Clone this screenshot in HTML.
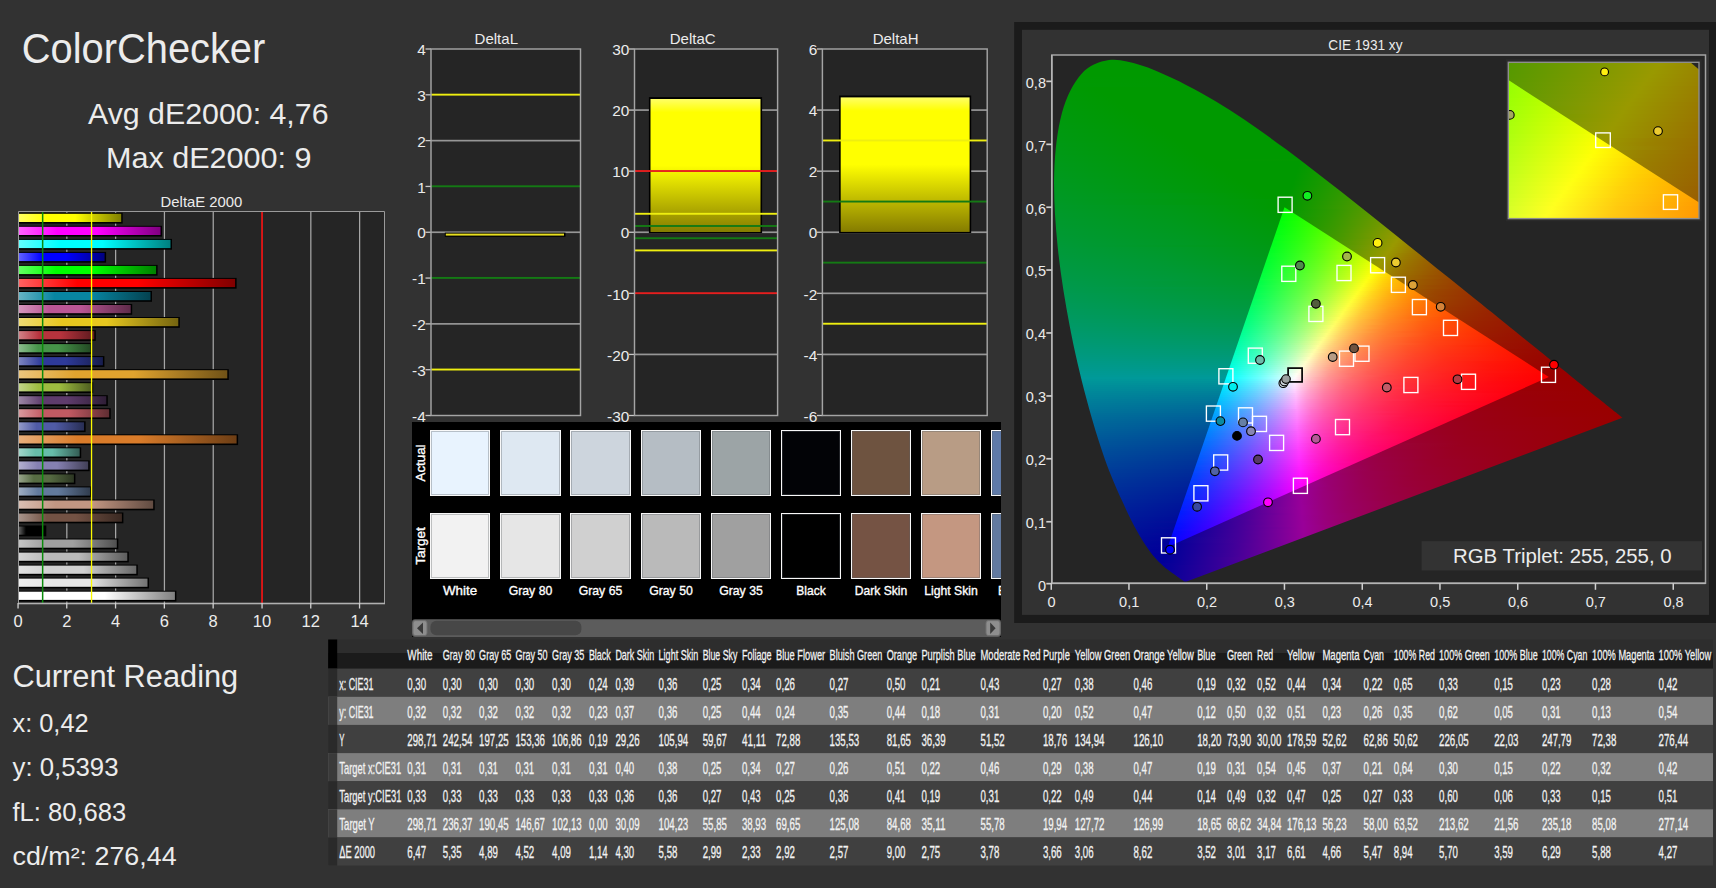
<!DOCTYPE html>
<html lang="en"><head><meta charset="utf-8"><title>ColorChecker</title>
<style>html,body{margin:0;padding:0;background:#323232;overflow:hidden}svg{display:block}text{font-family:"Liberation Sans", sans-serif;white-space:pre}</style></head><body>
<svg width="1716" height="888" viewBox="0 0 1716 888">
<rect width="1716" height="888" fill="#323232"/>
<text x="21.8" y="63.2" font-size="42.5" fill="#ececec" textLength="243.5" lengthAdjust="spacingAndGlyphs">ColorChecker</text>
<text x="88.0" y="123.8" font-size="30" fill="#ececec" textLength="240.5" lengthAdjust="spacingAndGlyphs">Avg dE2000: 4,76</text>
<text x="106.0" y="168.0" font-size="30" fill="#ececec" textLength="205.5" lengthAdjust="spacingAndGlyphs">Max dE2000: 9</text>
<text x="160.6" y="206.7" font-size="15" fill="#ececec" textLength="81.8" lengthAdjust="spacingAndGlyphs">DeltaE 2000</text>
<rect x="18" y="212" width="366" height="391" fill="#252525"/>
<rect x="66.2" y="212" width="1.25" height="391" fill="#a6a6a6"/>
<rect x="115.0" y="212" width="1.25" height="391" fill="#a6a6a6"/>
<rect x="163.8" y="212" width="1.25" height="391" fill="#a6a6a6"/>
<rect x="212.6" y="212" width="1.25" height="391" fill="#a6a6a6"/>
<rect x="310.2" y="212" width="1.25" height="391" fill="#a6a6a6"/>
<rect x="359.0" y="212" width="1.25" height="391" fill="#a6a6a6"/>
<defs>
<linearGradient id="b0"><stop offset="0" stop-color="#ffffff"/><stop offset="0.270" stop-color="#ffffff"/><stop offset=".55" stop-color="#ffffff"/><stop offset="1" stop-color="#808080"/></linearGradient>
<linearGradient id="b1"><stop offset="0" stop-color="#f0f0f0"/><stop offset="0.270" stop-color="#e6e6e6"/><stop offset=".55" stop-color="#e6e6e6"/><stop offset="1" stop-color="#737373"/></linearGradient>
<linearGradient id="b2"><stop offset="0" stop-color="#e2e2e2"/><stop offset="0.270" stop-color="#d0d0d0"/><stop offset=".55" stop-color="#d0d0d0"/><stop offset="1" stop-color="#686868"/></linearGradient>
<linearGradient id="b3"><stop offset="0" stop-color="#d4d4d4"/><stop offset="0.270" stop-color="#bababa"/><stop offset=".55" stop-color="#bababa"/><stop offset="1" stop-color="#5d5d5d"/></linearGradient>
<linearGradient id="b4"><stop offset="0" stop-color="#c4c4c4"/><stop offset="0.270" stop-color="#a0a0a0"/><stop offset=".55" stop-color="#a0a0a0"/><stop offset="1" stop-color="#505050"/></linearGradient>
<linearGradient id="b5"><stop offset="0" stop-color="#616161"/><stop offset="0.270" stop-color="#000000"/><stop offset=".55" stop-color="#000000"/><stop offset="1" stop-color="#000000"/></linearGradient>
<linearGradient id="b6"><stop offset="0" stop-color="#a8948b"/><stop offset="0.270" stop-color="#735244"/><stop offset=".55" stop-color="#735244"/><stop offset="1" stop-color="#3a2922"/></linearGradient>
<linearGradient id="b7"><stop offset="0" stop-color="#d9beb2"/><stop offset="0.270" stop-color="#c29682"/><stop offset=".55" stop-color="#c29682"/><stop offset="1" stop-color="#614b41"/></linearGradient>
<linearGradient id="b8"><stop offset="0" stop-color="#9eadc2"/><stop offset="0.270" stop-color="#627a9d"/><stop offset=".55" stop-color="#627a9d"/><stop offset="1" stop-color="#313d4e"/></linearGradient>
<linearGradient id="b9"><stop offset="0" stop-color="#97a48a"/><stop offset="0.270" stop-color="#576c43"/><stop offset=".55" stop-color="#576c43"/><stop offset="1" stop-color="#2c3622"/></linearGradient>
<linearGradient id="b10"><stop offset="0" stop-color="#b3b0cf"/><stop offset="0.270" stop-color="#8580b1"/><stop offset=".55" stop-color="#8580b1"/><stop offset="1" stop-color="#424058"/></linearGradient>
<linearGradient id="b11"><stop offset="0" stop-color="#a1d6ca"/><stop offset="0.270" stop-color="#67bdaa"/><stop offset=".55" stop-color="#67bdaa"/><stop offset="1" stop-color="#345e55"/></linearGradient>
<linearGradient id="b12"><stop offset="0" stop-color="#e8ae7b"/><stop offset="0.270" stop-color="#da7c2a"/><stop offset=".55" stop-color="#da7c2a"/><stop offset="1" stop-color="#6d3e15"/></linearGradient>
<linearGradient id="b13"><stop offset="0" stop-color="#9299c8"/><stop offset="0.270" stop-color="#505ba6"/><stop offset=".55" stop-color="#505ba6"/><stop offset="1" stop-color="#282e53"/></linearGradient>
<linearGradient id="b14"><stop offset="0" stop-color="#d9999e"/><stop offset="0.270" stop-color="#c15a63"/><stop offset=".55" stop-color="#c15a63"/><stop offset="1" stop-color="#602d32"/></linearGradient>
<linearGradient id="b15"><stop offset="0" stop-color="#9b86a4"/><stop offset="0.270" stop-color="#5e3c6c"/><stop offset=".55" stop-color="#5e3c6c"/><stop offset="1" stop-color="#2f1e36"/></linearGradient>
<linearGradient id="b16"><stop offset="0" stop-color="#c2d589"/><stop offset="0.270" stop-color="#9dbc40"/><stop offset=".55" stop-color="#9dbc40"/><stop offset="1" stop-color="#4e5e20"/></linearGradient>
<linearGradient id="b17"><stop offset="0" stop-color="#ecc67d"/><stop offset="0.270" stop-color="#e0a32e"/><stop offset=".55" stop-color="#e0a32e"/><stop offset="1" stop-color="#705217"/></linearGradient>
<linearGradient id="b18"><stop offset="0" stop-color="#7d85c0"/><stop offset="0.270" stop-color="#2e3a9a"/><stop offset=".55" stop-color="#2e3a9a"/><stop offset="1" stop-color="#171d4d"/></linearGradient>
<linearGradient id="b19"><stop offset="0" stop-color="#8cbd8e"/><stop offset="0.270" stop-color="#469449"/><stop offset=".55" stop-color="#469449"/><stop offset="1" stop-color="#234a24"/></linearGradient>
<linearGradient id="b20"><stop offset="0" stop-color="#d28187"/><stop offset="0.270" stop-color="#b7333d"/><stop offset=".55" stop-color="#b7333d"/><stop offset="1" stop-color="#5c1a1e"/></linearGradient>
<linearGradient id="b21"><stop offset="0" stop-color="#f0dc74"/><stop offset="0.270" stop-color="#e7c71f"/><stop offset=".55" stop-color="#e7c71f"/><stop offset="1" stop-color="#746410"/></linearGradient>
<linearGradient id="b22"><stop offset="0" stop-color="#d596bd"/><stop offset="0.270" stop-color="#bb5695"/><stop offset=".55" stop-color="#bb5695"/><stop offset="1" stop-color="#5e2b4a"/></linearGradient>
<linearGradient id="b23"><stop offset="0" stop-color="#66b3c5"/><stop offset="0.270" stop-color="#0885a1"/><stop offset=".55" stop-color="#0885a1"/><stop offset="1" stop-color="#044250"/></linearGradient>
<linearGradient id="b24"><stop offset="0" stop-color="#ff6161"/><stop offset="0.270" stop-color="#ff0000"/><stop offset=".55" stop-color="#ff0000"/><stop offset="1" stop-color="#800000"/></linearGradient>
<linearGradient id="b25"><stop offset="0" stop-color="#61ff61"/><stop offset="0.270" stop-color="#00ff00"/><stop offset=".55" stop-color="#00ff00"/><stop offset="1" stop-color="#008000"/></linearGradient>
<linearGradient id="b26"><stop offset="0" stop-color="#6161ff"/><stop offset="0.270" stop-color="#0000ff"/><stop offset=".55" stop-color="#0000ff"/><stop offset="1" stop-color="#000080"/></linearGradient>
<linearGradient id="b27"><stop offset="0" stop-color="#61ffff"/><stop offset="0.270" stop-color="#00ffff"/><stop offset=".55" stop-color="#00ffff"/><stop offset="1" stop-color="#008080"/></linearGradient>
<linearGradient id="b28"><stop offset="0" stop-color="#ff61ff"/><stop offset="0.270" stop-color="#ff00ff"/><stop offset=".55" stop-color="#ff00ff"/><stop offset="1" stop-color="#800080"/></linearGradient>
<linearGradient id="b29"><stop offset="0" stop-color="#ffff61"/><stop offset="0.270" stop-color="#ffff00"/><stop offset=".55" stop-color="#ffff00"/><stop offset="1" stop-color="#808000"/></linearGradient>
</defs>
<rect x="19" y="590.7" width="157.4" height="10.8" fill="#000"/>
<rect x="19" y="591.7" width="155.9" height="8.2" fill="url(#b0)"/>
<rect x="19" y="577.6" width="130.0" height="10.8" fill="#000"/>
<rect x="19" y="578.6" width="128.5" height="8.2" fill="url(#b1)"/>
<rect x="19" y="564.6" width="118.8" height="10.8" fill="#000"/>
<rect x="19" y="565.6" width="117.3" height="8.2" fill="url(#b2)"/>
<rect x="19" y="551.6" width="109.8" height="10.8" fill="#000"/>
<rect x="19" y="552.6" width="108.3" height="8.2" fill="url(#b3)"/>
<rect x="19" y="538.5" width="99.3" height="10.8" fill="#000"/>
<rect x="19" y="539.5" width="97.8" height="8.2" fill="url(#b4)"/>
<rect x="19" y="525.5" width="27.3" height="10.8" fill="#000"/>
<rect x="19" y="526.5" width="25.8" height="8.2" fill="url(#b5)"/>
<rect x="19" y="512.5" width="104.4" height="10.8" fill="#000"/>
<rect x="19" y="513.5" width="102.9" height="8.2" fill="url(#b6)"/>
<rect x="19" y="499.5" width="135.7" height="10.8" fill="#000"/>
<rect x="19" y="500.5" width="134.2" height="8.2" fill="url(#b7)"/>
<rect x="19" y="486.4" width="72.5" height="10.8" fill="#000"/>
<rect x="19" y="487.4" width="71.0" height="8.2" fill="url(#b8)"/>
<rect x="19" y="473.4" width="56.4" height="10.8" fill="#000"/>
<rect x="19" y="474.4" width="54.9" height="8.2" fill="url(#b9)"/>
<rect x="19" y="460.4" width="70.7" height="10.8" fill="#000"/>
<rect x="19" y="461.4" width="69.2" height="8.2" fill="url(#b10)"/>
<rect x="19" y="447.3" width="62.2" height="10.8" fill="#000"/>
<rect x="19" y="448.3" width="60.7" height="8.2" fill="url(#b11)"/>
<rect x="19" y="434.3" width="219.1" height="10.8" fill="#000"/>
<rect x="19" y="435.3" width="217.6" height="8.2" fill="url(#b12)"/>
<rect x="19" y="421.3" width="66.6" height="10.8" fill="#000"/>
<rect x="19" y="422.3" width="65.1" height="8.2" fill="url(#b13)"/>
<rect x="19" y="408.2" width="91.7" height="10.8" fill="#000"/>
<rect x="19" y="409.2" width="90.2" height="8.2" fill="url(#b14)"/>
<rect x="19" y="395.2" width="88.8" height="10.8" fill="#000"/>
<rect x="19" y="396.2" width="87.3" height="8.2" fill="url(#b15)"/>
<rect x="19" y="382.2" width="74.2" height="10.8" fill="#000"/>
<rect x="19" y="383.2" width="72.7" height="8.2" fill="url(#b16)"/>
<rect x="19" y="369.2" width="209.8" height="10.8" fill="#000"/>
<rect x="19" y="370.2" width="208.3" height="8.2" fill="url(#b17)"/>
<rect x="19" y="356.1" width="85.4" height="10.8" fill="#000"/>
<rect x="19" y="357.1" width="83.9" height="8.2" fill="url(#b18)"/>
<rect x="19" y="343.1" width="72.9" height="10.8" fill="#000"/>
<rect x="19" y="344.1" width="71.4" height="8.2" fill="url(#b19)"/>
<rect x="19" y="330.1" width="76.8" height="10.8" fill="#000"/>
<rect x="19" y="331.1" width="75.3" height="8.2" fill="url(#b20)"/>
<rect x="19" y="317.0" width="160.8" height="10.8" fill="#000"/>
<rect x="19" y="318.0" width="159.3" height="8.2" fill="url(#b21)"/>
<rect x="19" y="304.0" width="113.2" height="10.8" fill="#000"/>
<rect x="19" y="305.0" width="111.7" height="8.2" fill="url(#b22)"/>
<rect x="19" y="291.0" width="133.0" height="10.8" fill="#000"/>
<rect x="19" y="292.0" width="131.5" height="8.2" fill="url(#b23)"/>
<rect x="19" y="277.9" width="217.6" height="10.8" fill="#000"/>
<rect x="19" y="278.9" width="216.1" height="8.2" fill="url(#b24)"/>
<rect x="19" y="264.9" width="138.6" height="10.8" fill="#000"/>
<rect x="19" y="265.9" width="137.1" height="8.2" fill="url(#b25)"/>
<rect x="19" y="251.9" width="87.1" height="10.8" fill="#000"/>
<rect x="19" y="252.9" width="85.6" height="8.2" fill="url(#b26)"/>
<rect x="19" y="238.9" width="153.0" height="10.8" fill="#000"/>
<rect x="19" y="239.9" width="151.5" height="8.2" fill="url(#b27)"/>
<rect x="19" y="225.8" width="143.0" height="10.8" fill="#000"/>
<rect x="19" y="226.8" width="141.5" height="8.2" fill="url(#b28)"/>
<rect x="19" y="212.8" width="103.7" height="10.8" fill="#000"/>
<rect x="19" y="213.8" width="102.2" height="8.2" fill="url(#b29)"/>
<rect x="41.9" y="212" width="1.5" height="391" fill="#0a8a0a"/>
<rect x="90.9" y="212" width="1.3" height="391" fill="#fafa00"/>
<rect x="261.2" y="212" width="1.7" height="391" fill="#f01414"/>
<path d="M18.5 603.5V211.5H384.5V603.5" fill="none" stroke="#9a9a9a" stroke-width="1"/>
<rect x="18" y="602.7" width="367" height="1.6" fill="#b0b0b0"/>
<rect x="17.4" y="603" width="1.3" height="5.5" fill="#d0d0d0"/>
<text x="18.0" y="627.0" font-size="16.5" fill="#ececec" text-anchor="middle">0</text>
<rect x="66.1" y="603" width="1.3" height="5.5" fill="#d0d0d0"/>
<text x="66.8" y="627.0" font-size="16.5" fill="#ececec" text-anchor="middle">2</text>
<rect x="114.9" y="603" width="1.3" height="5.5" fill="#d0d0d0"/>
<text x="115.6" y="627.0" font-size="16.5" fill="#ececec" text-anchor="middle">4</text>
<rect x="163.7" y="603" width="1.3" height="5.5" fill="#d0d0d0"/>
<text x="164.4" y="627.0" font-size="16.5" fill="#ececec" text-anchor="middle">6</text>
<rect x="212.5" y="603" width="1.3" height="5.5" fill="#d0d0d0"/>
<text x="213.2" y="627.0" font-size="16.5" fill="#ececec" text-anchor="middle">8</text>
<rect x="261.4" y="603" width="1.3" height="5.5" fill="#d0d0d0"/>
<text x="262.0" y="627.0" font-size="16.5" fill="#ececec" text-anchor="middle">10</text>
<rect x="310.1" y="603" width="1.3" height="5.5" fill="#d0d0d0"/>
<text x="310.8" y="627.0" font-size="16.5" fill="#ececec" text-anchor="middle">12</text>
<rect x="358.9" y="603" width="1.3" height="5.5" fill="#d0d0d0"/>
<text x="359.6" y="627.0" font-size="16.5" fill="#ececec" text-anchor="middle">14</text>
<text x="12.5" y="686.6" font-size="31" fill="#ececec" textLength="225.7" lengthAdjust="spacingAndGlyphs">Current Reading</text>
<text x="12.5" y="732.2" font-size="25.5" fill="#ececec" textLength="76.1" lengthAdjust="spacingAndGlyphs">x: 0,42</text>
<text x="12.5" y="776.1" font-size="25.5" fill="#ececec" textLength="106.0" lengthAdjust="spacingAndGlyphs">y: 0,5393</text>
<text x="12.5" y="821.1" font-size="25.5" fill="#ececec" textLength="113.8" lengthAdjust="spacingAndGlyphs">fL: 80,683</text>
<text x="12.5" y="865.3" font-size="25.5" fill="#ececec" textLength="164.1" lengthAdjust="spacingAndGlyphs">cd/m²: 276,44</text>
<defs><linearGradient id="vb" x1="0" y1="0" x2="0" y2="1"><stop offset="0" stop-color="#ffff66"/><stop offset=".1" stop-color="#ffff00"/><stop offset=".5" stop-color="#ffff00"/><stop offset="1" stop-color="#857c00"/></linearGradient></defs>
<rect x="431" y="49" width="149.5" height="366.5" fill="#252525"/>
<rect x="425.5" y="414.85" width="5.5" height="1.3" fill="#c8c8c8"/>
<text x="425.8" y="421.7" font-size="15.4" fill="#ececec" text-anchor="end">-4</text>
<rect x="425.5" y="369.04" width="5.5" height="1.3" fill="#c8c8c8"/>
<text x="425.8" y="375.9" font-size="15.4" fill="#ececec" text-anchor="end">-3</text>
<rect x="431" y="323.02" width="149.5" height="1.7" fill="#969696"/>
<rect x="425.5" y="323.23" width="5.5" height="1.3" fill="#c8c8c8"/>
<text x="425.8" y="330.1" font-size="15.4" fill="#ececec" text-anchor="end">-2</text>
<rect x="425.5" y="277.41" width="5.5" height="1.3" fill="#c8c8c8"/>
<text x="425.8" y="284.3" font-size="15.4" fill="#ececec" text-anchor="end">-1</text>
<rect x="431" y="231.40" width="149.5" height="1.7" fill="#969696"/>
<rect x="425.5" y="231.60" width="5.5" height="1.3" fill="#c8c8c8"/>
<text x="425.8" y="238.4" font-size="15.4" fill="#ececec" text-anchor="end">0</text>
<rect x="425.5" y="185.79" width="5.5" height="1.3" fill="#c8c8c8"/>
<text x="425.8" y="192.6" font-size="15.4" fill="#ececec" text-anchor="end">1</text>
<rect x="431" y="139.78" width="149.5" height="1.7" fill="#969696"/>
<rect x="425.5" y="139.97" width="5.5" height="1.3" fill="#c8c8c8"/>
<text x="425.8" y="146.8" font-size="15.4" fill="#ececec" text-anchor="end">2</text>
<rect x="425.5" y="94.16" width="5.5" height="1.3" fill="#c8c8c8"/>
<text x="425.8" y="101.0" font-size="15.4" fill="#ececec" text-anchor="end">3</text>
<rect x="425.5" y="48.35" width="5.5" height="1.3" fill="#c8c8c8"/>
<text x="425.8" y="55.2" font-size="15.4" fill="#ececec" text-anchor="end">4</text>
<rect x="444.8" y="232.6" width="120.7" height="4.2" fill="#000"/>
<rect x="445.8" y="233.6" width="118.2" height="2" fill="#e8e020"/>
<rect x="431" y="93.71" width="149.5" height="1.9" fill="#eeee10"/>
<rect x="431" y="368.59" width="149.5" height="1.9" fill="#eeee10"/>
<rect x="431" y="185.34" width="149.5" height="1.9" fill="#147a14"/>
<rect x="431" y="276.96" width="149.5" height="1.9" fill="#147a14"/>
<rect x="431" y="49" width="149.5" height="366.5" fill="none" stroke="#a4a4a4" stroke-width="1.45"/>
<text x="496.3" y="44.0" font-size="15" fill="#ececec" text-anchor="middle">DeltaL</text>
<rect x="634.5" y="49" width="143.1" height="366.5" fill="#252525"/>
<rect x="629" y="414.85" width="5.5" height="1.3" fill="#c8c8c8"/>
<text x="629.3" y="421.7" font-size="15.4" fill="#ececec" text-anchor="end">-30</text>
<rect x="634.5" y="353.57" width="143.1" height="1.7" fill="#969696"/>
<rect x="629" y="353.77" width="5.5" height="1.3" fill="#c8c8c8"/>
<text x="629.3" y="360.6" font-size="15.4" fill="#ececec" text-anchor="end">-20</text>
<rect x="629" y="292.68" width="5.5" height="1.3" fill="#c8c8c8"/>
<text x="629.3" y="299.5" font-size="15.4" fill="#ececec" text-anchor="end">-10</text>
<rect x="634.5" y="231.40" width="143.1" height="1.7" fill="#969696"/>
<rect x="629" y="231.60" width="5.5" height="1.3" fill="#c8c8c8"/>
<text x="629.3" y="238.4" font-size="15.4" fill="#ececec" text-anchor="end">0</text>
<rect x="629" y="170.52" width="5.5" height="1.3" fill="#c8c8c8"/>
<text x="629.3" y="177.4" font-size="15.4" fill="#ececec" text-anchor="end">10</text>
<rect x="634.5" y="109.23" width="143.1" height="1.7" fill="#969696"/>
<rect x="629" y="109.43" width="5.5" height="1.3" fill="#c8c8c8"/>
<text x="629.3" y="116.3" font-size="15.4" fill="#ececec" text-anchor="end">20</text>
<rect x="629" y="48.35" width="5.5" height="1.3" fill="#c8c8c8"/>
<text x="629.3" y="55.2" font-size="15.4" fill="#ececec" text-anchor="end">30</text>
<rect x="648.9" y="97.1" width="113.2" height="136.0" fill="#000"/>
<rect x="650.5" y="99.0" width="110" height="133.0" fill="url(#vb)"/>
<rect x="634.5" y="170.07" width="143.1" height="1.9" fill="#e61e1e"/>
<rect x="634.5" y="292.23" width="143.1" height="1.9" fill="#e61e1e"/>
<rect x="634.5" y="212.83" width="143.1" height="1.9" fill="#eeee10"/>
<rect x="634.5" y="249.47" width="143.1" height="1.9" fill="#eeee10"/>
<rect x="634.5" y="225.04" width="143.1" height="1.9" fill="#147a14"/>
<rect x="634.5" y="237.26" width="143.1" height="1.9" fill="#147a14"/>
<rect x="634.5" y="49" width="143.1" height="366.5" fill="none" stroke="#a4a4a4" stroke-width="1.45"/>
<text x="692.7" y="44.0" font-size="15" fill="#ececec" text-anchor="middle">DeltaC</text>
<rect x="822.4" y="49" width="164.8" height="366.5" fill="#252525"/>
<rect x="816.9" y="414.85" width="5.5" height="1.3" fill="#c8c8c8"/>
<text x="817.2" y="421.7" font-size="15.4" fill="#ececec" text-anchor="end">-6</text>
<rect x="822.4" y="353.57" width="164.8" height="1.7" fill="#969696"/>
<rect x="816.9" y="353.77" width="5.5" height="1.3" fill="#c8c8c8"/>
<text x="817.2" y="360.6" font-size="15.4" fill="#ececec" text-anchor="end">-4</text>
<rect x="822.4" y="292.48" width="164.8" height="1.7" fill="#969696"/>
<rect x="816.9" y="292.68" width="5.5" height="1.3" fill="#c8c8c8"/>
<text x="817.2" y="299.5" font-size="15.4" fill="#ececec" text-anchor="end">-2</text>
<rect x="822.4" y="231.40" width="164.8" height="1.7" fill="#969696"/>
<rect x="816.9" y="231.60" width="5.5" height="1.3" fill="#c8c8c8"/>
<text x="817.2" y="238.4" font-size="15.4" fill="#ececec" text-anchor="end">0</text>
<rect x="822.4" y="170.32" width="164.8" height="1.7" fill="#969696"/>
<rect x="816.9" y="170.52" width="5.5" height="1.3" fill="#c8c8c8"/>
<text x="817.2" y="177.4" font-size="15.4" fill="#ececec" text-anchor="end">2</text>
<rect x="822.4" y="109.23" width="164.8" height="1.7" fill="#969696"/>
<rect x="816.9" y="109.43" width="5.5" height="1.3" fill="#c8c8c8"/>
<text x="817.2" y="116.3" font-size="15.4" fill="#ececec" text-anchor="end">4</text>
<rect x="816.9" y="48.35" width="5.5" height="1.3" fill="#c8c8c8"/>
<text x="817.2" y="55.2" font-size="15.4" fill="#ececec" text-anchor="end">6</text>
<rect x="839.1" y="95.5" width="132.1" height="137.5" fill="#000"/>
<rect x="840.7" y="97.4" width="128.9" height="134.5" fill="url(#vb)"/>
<rect x="822.4" y="139.53" width="164.8" height="1.9" fill="#eeee10"/>
<rect x="822.4" y="322.77" width="164.8" height="1.9" fill="#eeee10"/>
<rect x="822.4" y="200.61" width="164.8" height="1.9" fill="#147a14"/>
<rect x="822.4" y="261.69" width="164.8" height="1.9" fill="#147a14"/>
<rect x="822.4" y="49" width="164.8" height="366.5" fill="none" stroke="#a4a4a4" stroke-width="1.45"/>
<text x="895.6" y="44.0" font-size="15" fill="#ececec" text-anchor="middle">DeltaH</text>
<rect x="412" y="422" width="589" height="215" fill="#000"/>
<clipPath id="swc"><rect x="412" y="422" width="589" height="215"/></clipPath><g clip-path="url(#swc)">
<rect x="430.5" y="430.5" width="59" height="65" fill="#e8f3fe" stroke="#f8f8f8" stroke-width="1"/>
<rect x="431.5" y="431.5" width="57" height="63" fill="none" stroke="#b6bfc8" stroke-width="1"/>
<rect x="430.5" y="513.5" width="59" height="65" fill="#f2f2f2" stroke="#f8f8f8" stroke-width="1"/>
<rect x="431.5" y="514.5" width="57" height="63" fill="none" stroke="#bdbfc0" stroke-width="1"/>
<text x="460.0" y="594.9" font-size="12.96" fill="#ffffff" text-anchor="middle" textLength="34.2" lengthAdjust="spacingAndGlyphs" stroke="#fff" stroke-width=".35">White</text>
<rect x="500.5" y="430.5" width="60" height="65" fill="#dee8f2" stroke="#f8f8f8" stroke-width="1"/>
<rect x="501.5" y="431.5" width="58" height="63" fill="none" stroke="#b0b8c0" stroke-width="1"/>
<rect x="500.5" y="513.5" width="60" height="65" fill="#e6e6e6" stroke="#f8f8f8" stroke-width="1"/>
<rect x="501.5" y="514.5" width="58" height="63" fill="none" stroke="#b5b7b8" stroke-width="1"/>
<text x="530.5" y="594.9" font-size="12.96" fill="#ffffff" text-anchor="middle" textLength="43.6" lengthAdjust="spacingAndGlyphs" stroke="#fff" stroke-width=".35">Gray 80</text>
<rect x="570.5" y="430.5" width="60" height="65" fill="#cdd5dd" stroke="#f8f8f8" stroke-width="1"/>
<rect x="571.5" y="431.5" width="58" height="63" fill="none" stroke="#a5acb3" stroke-width="1"/>
<rect x="570.5" y="513.5" width="60" height="65" fill="#d0d0d0" stroke="#f8f8f8" stroke-width="1"/>
<rect x="571.5" y="514.5" width="58" height="63" fill="none" stroke="#a7a8aa" stroke-width="1"/>
<text x="600.5" y="594.9" font-size="12.96" fill="#ffffff" text-anchor="middle" textLength="43.6" lengthAdjust="spacingAndGlyphs" stroke="#fff" stroke-width=".35">Gray 65</text>
<rect x="641.5" y="430.5" width="59" height="65" fill="#b5bdc4" stroke="#f8f8f8" stroke-width="1"/>
<rect x="642.5" y="431.5" width="57" height="63" fill="none" stroke="#959ca2" stroke-width="1"/>
<rect x="641.5" y="513.5" width="59" height="65" fill="#bababa" stroke="#f8f8f8" stroke-width="1"/>
<rect x="642.5" y="514.5" width="57" height="63" fill="none" stroke="#989a9c" stroke-width="1"/>
<text x="671.0" y="594.9" font-size="12.96" fill="#ffffff" text-anchor="middle" textLength="43.6" lengthAdjust="spacingAndGlyphs" stroke="#fff" stroke-width=".35">Gray 50</text>
<rect x="711.5" y="430.5" width="59" height="65" fill="#9ca4a6" stroke="#f8f8f8" stroke-width="1"/>
<rect x="712.5" y="431.5" width="57" height="63" fill="none" stroke="#858c8f" stroke-width="1"/>
<rect x="711.5" y="513.5" width="59" height="65" fill="#a0a0a0" stroke="#f8f8f8" stroke-width="1"/>
<rect x="712.5" y="514.5" width="57" height="63" fill="none" stroke="#88898b" stroke-width="1"/>
<text x="741.0" y="594.9" font-size="12.96" fill="#ffffff" text-anchor="middle" textLength="43.6" lengthAdjust="spacingAndGlyphs" stroke="#fff" stroke-width=".35">Gray 35</text>
<rect x="781.5" y="430.5" width="59" height="65" fill="#020306" stroke="#f8f8f8" stroke-width="1"/>
<rect x="782.5" y="431.5" width="57" height="63" fill="none" stroke="#212327" stroke-width="1"/>
<rect x="781.5" y="513.5" width="59" height="65" fill="#000000" stroke="#f8f8f8" stroke-width="1"/>
<rect x="782.5" y="514.5" width="57" height="63" fill="none" stroke="#1f2123" stroke-width="1"/>
<text x="811.0" y="594.9" font-size="12.96" fill="#ffffff" text-anchor="middle" textLength="29.4" lengthAdjust="spacingAndGlyphs" stroke="#fff" stroke-width=".35">Black</text>
<rect x="851.5" y="430.5" width="59" height="65" fill="#6e5340" stroke="#f8f8f8" stroke-width="1"/>
<rect x="852.5" y="431.5" width="57" height="63" fill="none" stroke="#67574d" stroke-width="1"/>
<rect x="851.5" y="513.5" width="59" height="65" fill="#755344" stroke="#f8f8f8" stroke-width="1"/>
<rect x="852.5" y="514.5" width="57" height="63" fill="none" stroke="#6c574f" stroke-width="1"/>
<text x="881.0" y="594.9" font-size="12.96" fill="#ffffff" text-anchor="middle" textLength="52.4" lengthAdjust="spacingAndGlyphs" stroke="#fff" stroke-width=".35">Dark Skin</text>
<rect x="921.5" y="430.5" width="59" height="65" fill="#b89c85" stroke="#f8f8f8" stroke-width="1"/>
<rect x="922.5" y="431.5" width="57" height="63" fill="none" stroke="#978779" stroke-width="1"/>
<rect x="921.5" y="513.5" width="59" height="65" fill="#c49781" stroke="#f8f8f8" stroke-width="1"/>
<rect x="922.5" y="514.5" width="57" height="63" fill="none" stroke="#9f8377" stroke-width="1"/>
<text x="951.0" y="594.9" font-size="12.96" fill="#ffffff" text-anchor="middle" textLength="53.6" lengthAdjust="spacingAndGlyphs" stroke="#fff" stroke-width=".35">Light Skin</text>
<rect x="991.5" y="430.5" width="60" height="65" fill="#5f7aa8" stroke="#f8f8f8" stroke-width="1"/>
<rect x="992.5" y="431.5" width="58" height="63" fill="none" stroke="#5d7190" stroke-width="1"/>
<rect x="991.5" y="513.5" width="60" height="65" fill="#627aa0" stroke="#f8f8f8" stroke-width="1"/>
<rect x="992.5" y="514.5" width="58" height="63" fill="none" stroke="#5f718b" stroke-width="1"/>
<text x="1021.5" y="594.9" font-size="12.96" fill="#ffffff" text-anchor="middle" textLength="46.9" lengthAdjust="spacingAndGlyphs" stroke="#fff" stroke-width=".35">Blue Sky</text>
</g>
<g transform="translate(424.7,463) rotate(-90)">
<text x="0.0" y="0.0" font-size="12.96" fill="#ffffff" text-anchor="middle" textLength="37.0" lengthAdjust="spacingAndGlyphs" stroke="#fff" stroke-width=".35">Actual</text>
</g>
<g transform="translate(424.7,546) rotate(-90)">
<text x="0.0" y="0.0" font-size="12.96" fill="#ffffff" text-anchor="middle" textLength="37.7" lengthAdjust="spacingAndGlyphs" stroke="#fff" stroke-width=".35">Target</text>
</g>
<rect x="412" y="619.3" width="589" height="17.7" fill="#5c5c5c" rx="3"/>
<rect x="430.4" y="620.8" width="151" height="14.4" rx="6" fill="#474747"/>
<rect x="413" y="620.6" width="14" height="15" rx="2.5" fill="#8e8e8e" stroke="#707070" stroke-width="1"/>
<path d="M423 622.4V634L417 628.2Z" fill="#3a3a3a"/>
<rect x="986" y="620.6" width="14" height="15" rx="2.5" fill="#8e8e8e" stroke="#707070" stroke-width="1"/>
<path d="M990.2 622.4V634L995.6 628.2Z" fill="#3a3a3a"/>
<rect x="1014.2" y="22" width="702" height="601" fill="#1b1b1b"/>
<rect x="1022" y="29.8" width="687" height="585.1" fill="#323232"/>
<rect x="1051.8" y="55" width="653.7" height="528.3" fill="#252525"/>
<defs><clipPath id="loc"><path d="M1186.6 581.5C1186.5 581.5 1186.4 581.5 1186.3 581.5C1186.2 581.5 1186.1 581.6 1185.9 581.6C1185.8 581.6 1185.6 581.6 1185.4 581.6C1185.2 581.5 1184.9 581.6 1184.5 581.4C1184.0 581.2 1183.4 580.9 1182.5 580.3C1181.6 579.7 1180.0 578.5 1179.0 577.7C1178.0 577.0 1177.5 576.6 1176.5 575.9C1175.4 575.2 1174.3 574.4 1173.0 573.5C1171.6 572.5 1170.2 571.6 1168.6 570.3C1167.0 569.1 1165.2 567.7 1163.2 565.9C1161.2 564.1 1159.1 562.4 1156.6 559.5C1154.0 556.6 1151.0 553.2 1147.7 548.2C1144.3 543.3 1140.7 537.9 1136.4 530.0C1132.2 522.2 1127.5 513.1 1122.2 501.1C1116.9 489.2 1110.6 475.4 1104.6 458.4C1098.7 441.3 1092.4 421.3 1086.5 399.0C1080.6 376.8 1074.3 350.5 1069.5 325.0C1064.7 299.5 1060.1 271.3 1057.6 245.9C1055.0 220.6 1053.5 194.9 1054.2 172.7C1055.0 150.5 1057.5 129.2 1062.0 112.7C1066.5 96.2 1073.6 82.6 1081.4 73.9C1089.3 65.1 1099.2 61.6 1109.0 60.1C1118.7 58.7 1129.6 62.0 1140.0 64.9C1150.4 67.8 1161.3 73.0 1171.5 77.7C1181.7 82.4 1191.5 87.6 1201.2 93.0C1210.9 98.4 1220.3 104.1 1229.7 110.1C1239.2 116.2 1248.5 122.5 1257.9 129.0C1267.2 135.5 1276.4 142.3 1285.7 149.1C1295.0 156.0 1304.2 163.0 1313.5 170.2C1322.7 177.3 1332.0 184.5 1341.3 191.8C1350.5 199.1 1359.8 206.4 1369.0 213.7C1378.2 221.1 1387.4 228.4 1396.5 235.7C1405.6 243.0 1414.6 250.3 1423.5 257.4C1432.3 264.5 1441.1 271.6 1449.7 278.5C1458.2 285.4 1466.7 292.2 1474.8 298.8C1482.9 305.3 1490.9 311.7 1498.4 317.8C1505.9 323.8 1513.2 329.8 1520.0 335.2C1526.7 340.6 1532.8 345.6 1538.7 350.3C1544.6 355.0 1550.1 359.5 1555.2 363.6C1560.2 367.6 1564.7 371.2 1568.9 374.5C1573.0 377.8 1576.6 380.8 1580.0 383.5C1583.3 386.2 1585.2 387.8 1588.8 390.7C1592.4 393.6 1598.0 398.1 1601.6 400.9C1605.2 403.8 1607.9 406.0 1610.2 407.9C1612.6 409.8 1614.2 411.1 1615.7 412.3C1617.1 413.4 1618.0 414.1 1618.8 414.8C1619.6 415.4 1619.9 415.7 1620.3 416.0C1620.8 416.4 1621.1 416.7 1621.4 416.9C1621.7 417.2 1622.0 417.4 1622.2 417.5C1622.4 417.7 1622.4 417.7 1622.4 417.7Z"/></clipPath>
<clipPath id="tri"><path d="M1548.8 377.0L1284.5 207.2L1167.8 546.9Z"/></clipPath>
<linearGradient id="g0" gradientUnits="userSpaceOnUse" x1="1103" x2="1126" y1="0" y2="0"><stop offset="0" stop-color="#009900"/><stop offset="1" stop-color="#009900"/></linearGradient>
<linearGradient id="g1" gradientUnits="userSpaceOnUse" x1="1096" x2="1135" y1="0" y2="0"><stop offset="0" stop-color="#009900"/><stop offset="1" stop-color="#009900"/></linearGradient>
<linearGradient id="g2" gradientUnits="userSpaceOnUse" x1="1092" x2="1142" y1="0" y2="0"><stop offset="0" stop-color="#009900"/><stop offset="1" stop-color="#009900"/></linearGradient>
<linearGradient id="g3" gradientUnits="userSpaceOnUse" x1="1088" x2="1148" y1="0" y2="0"><stop offset="0" stop-color="#009900"/><stop offset="1" stop-color="#009900"/></linearGradient>
<linearGradient id="g4" gradientUnits="userSpaceOnUse" x1="1085" x2="1153" y1="0" y2="0"><stop offset="0" stop-color="#009900"/><stop offset="1" stop-color="#009900"/></linearGradient>
<linearGradient id="g5" gradientUnits="userSpaceOnUse" x1="1083" x2="1158" y1="0" y2="0"><stop offset="0" stop-color="#009900"/><stop offset="1" stop-color="#009900"/></linearGradient>
<linearGradient id="g6" gradientUnits="userSpaceOnUse" x1="1081" x2="1163" y1="0" y2="0"><stop offset="0" stop-color="#009900"/><stop offset="1" stop-color="#009900"/></linearGradient>
<linearGradient id="g7" gradientUnits="userSpaceOnUse" x1="1079" x2="1167" y1="0" y2="0"><stop offset="0" stop-color="#009900"/><stop offset="1" stop-color="#009900"/></linearGradient>
<linearGradient id="g8" gradientUnits="userSpaceOnUse" x1="1077" x2="1171" y1="0" y2="0"><stop offset="0" stop-color="#009900"/><stop offset="1" stop-color="#009900"/></linearGradient>
<linearGradient id="g9" gradientUnits="userSpaceOnUse" x1="1076" x2="1176" y1="0" y2="0"><stop offset="0" stop-color="#009901"/><stop offset="1" stop-color="#009900"/></linearGradient>
<linearGradient id="g10" gradientUnits="userSpaceOnUse" x1="1074" x2="1180" y1="0" y2="0"><stop offset="0" stop-color="#009902"/><stop offset="1" stop-color="#009900"/></linearGradient>
<linearGradient id="g11" gradientUnits="userSpaceOnUse" x1="1073" x2="1184" y1="0" y2="0"><stop offset="0" stop-color="#009902"/><stop offset="1" stop-color="#009900"/></linearGradient>
<linearGradient id="g12" gradientUnits="userSpaceOnUse" x1="1072" x2="1188" y1="0" y2="0"><stop offset="0" stop-color="#009903"/><stop offset="1" stop-color="#009900"/></linearGradient>
<linearGradient id="g13" gradientUnits="userSpaceOnUse" x1="1071" x2="1192" y1="0" y2="0"><stop offset="0" stop-color="#009903"/><stop offset="1" stop-color="#009900"/></linearGradient>
<linearGradient id="g14" gradientUnits="userSpaceOnUse" x1="1070" x2="1195" y1="0" y2="0"><stop offset="0" stop-color="#009904"/><stop offset=".208" stop-color="#009900"/><stop offset="1" stop-color="#009900"/></linearGradient>
<linearGradient id="g15" gradientUnits="userSpaceOnUse" x1="1069" x2="1199" y1="0" y2="0"><stop offset="0" stop-color="#009904"/><stop offset=".2308" stop-color="#009900"/><stop offset="1" stop-color="#009900"/></linearGradient>
<linearGradient id="g16" gradientUnits="userSpaceOnUse" x1="1068" x2="1203" y1="0" y2="0"><stop offset="0" stop-color="#009905"/><stop offset=".2519" stop-color="#009900"/><stop offset="1" stop-color="#009900"/></linearGradient>
<linearGradient id="g17" gradientUnits="userSpaceOnUse" x1="1067" x2="1206" y1="0" y2="0"><stop offset="0" stop-color="#009906"/><stop offset=".2734" stop-color="#009900"/><stop offset="1" stop-color="#009900"/></linearGradient>
<linearGradient id="g18" gradientUnits="userSpaceOnUse" x1="1066" x2="1210" y1="0" y2="0"><stop offset="0" stop-color="#009906"/><stop offset=".2917" stop-color="#009900"/><stop offset="1" stop-color="#009900"/></linearGradient>
<linearGradient id="g19" gradientUnits="userSpaceOnUse" x1="1065" x2="1213" y1="0" y2="0"><stop offset="0" stop-color="#009907"/><stop offset=".3108" stop-color="#009900"/><stop offset="1" stop-color="#009900"/></linearGradient>
<linearGradient id="g20" gradientUnits="userSpaceOnUse" x1="1064" x2="1216" y1="0" y2="0"><stop offset="0" stop-color="#009907"/><stop offset=".3355" stop-color="#009900"/><stop offset="1" stop-color="#009900"/></linearGradient>
<linearGradient id="g21" gradientUnits="userSpaceOnUse" x1="1064" x2="1220" y1="0" y2="0"><stop offset="0" stop-color="#009908"/><stop offset=".3462" stop-color="#009900"/><stop offset="1" stop-color="#009900"/></linearGradient>
<linearGradient id="g22" gradientUnits="userSpaceOnUse" x1="1063" x2="1223" y1="0" y2="0"><stop offset="0" stop-color="#009908"/><stop offset=".3625" stop-color="#009900"/><stop offset="1" stop-color="#009900"/></linearGradient>
<linearGradient id="g23" gradientUnits="userSpaceOnUse" x1="1062" x2="1226" y1="0" y2="0"><stop offset="0" stop-color="#009909"/><stop offset=".378" stop-color="#009900"/><stop offset="1" stop-color="#009900"/></linearGradient>
<linearGradient id="g24" gradientUnits="userSpaceOnUse" x1="1062" x2="1229" y1="0" y2="0"><stop offset="0" stop-color="#009909"/><stop offset=".3892" stop-color="#009900"/><stop offset="1" stop-color="#009900"/></linearGradient>
<linearGradient id="g25" gradientUnits="userSpaceOnUse" x1="1061" x2="1233" y1="0" y2="0"><stop offset="0" stop-color="#00990a"/><stop offset=".4012" stop-color="#009900"/><stop offset="1" stop-color="#009900"/></linearGradient>
<linearGradient id="g26" gradientUnits="userSpaceOnUse" x1="1060" x2="1236" y1="0" y2="0"><stop offset="0" stop-color="#00990b"/><stop offset=".4148" stop-color="#009900"/><stop offset="1" stop-color="#009900"/></linearGradient>
<linearGradient id="g27" gradientUnits="userSpaceOnUse" x1="1060" x2="1239" y1="0" y2="0"><stop offset="0" stop-color="#00990b"/><stop offset=".4302" stop-color="#009900"/><stop offset="1" stop-color="#009900"/></linearGradient>
<linearGradient id="g28" gradientUnits="userSpaceOnUse" x1="1059" x2="1242" y1="0" y2="0"><stop offset="0" stop-color="#00990c"/><stop offset=".4426" stop-color="#009900"/><stop offset="1" stop-color="#009900"/></linearGradient>
<linearGradient id="g29" gradientUnits="userSpaceOnUse" x1="1059" x2="1245" y1="0" y2="0"><stop offset="0" stop-color="#00990c"/><stop offset=".4516" stop-color="#009900"/><stop offset="1" stop-color="#009900"/></linearGradient>
<linearGradient id="g30" gradientUnits="userSpaceOnUse" x1="1058" x2="1248" y1="0" y2="0"><stop offset="0" stop-color="#00990d"/><stop offset=".4632" stop-color="#009900"/><stop offset="1" stop-color="#009900"/></linearGradient>
<linearGradient id="g31" gradientUnits="userSpaceOnUse" x1="1058" x2="1251" y1="0" y2="0"><stop offset="0" stop-color="#00990d"/><stop offset=".4715" stop-color="#009900"/><stop offset="1" stop-color="#009900"/></linearGradient>
<linearGradient id="g32" gradientUnits="userSpaceOnUse" x1="1058" x2="1254" y1="0" y2="0"><stop offset="0" stop-color="#00990e"/><stop offset=".4796" stop-color="#009900"/><stop offset="1" stop-color="#009900"/></linearGradient>
<linearGradient id="g33" gradientUnits="userSpaceOnUse" x1="1057" x2="1256" y1="0" y2="0"><stop offset="0" stop-color="#00990f"/><stop offset=".4925" stop-color="#009900"/><stop offset="1" stop-color="#009900"/></linearGradient>
<linearGradient id="g34" gradientUnits="userSpaceOnUse" x1="1057" x2="1259" y1="0" y2="0"><stop offset="0" stop-color="#00990f"/><stop offset=".505" stop-color="#009900"/><stop offset="1" stop-color="#009900"/></linearGradient>
<linearGradient id="g35" gradientUnits="userSpaceOnUse" x1="1057" x2="1262" y1="0" y2="0"><stop offset="0" stop-color="#009910"/><stop offset=".5122" stop-color="#009900"/><stop offset="1" stop-color="#009900"/></linearGradient>
<linearGradient id="g36" gradientUnits="userSpaceOnUse" x1="1056" x2="1265" y1="0" y2="0"><stop offset="0" stop-color="#009910"/><stop offset=".5215" stop-color="#009900"/><stop offset="1" stop-color="#009900"/></linearGradient>
<linearGradient id="g37" gradientUnits="userSpaceOnUse" x1="1056" x2="1268" y1="0" y2="0"><stop offset="0" stop-color="#009911"/><stop offset=".5283" stop-color="#009900"/><stop offset="1" stop-color="#009900"/></linearGradient>
<linearGradient id="g38" gradientUnits="userSpaceOnUse" x1="1056" x2="1271" y1="0" y2="0"><stop offset="0" stop-color="#009911"/><stop offset=".5349" stop-color="#009900"/><stop offset="1" stop-color="#009900"/></linearGradient>
<linearGradient id="g39" gradientUnits="userSpaceOnUse" x1="1055" x2="1273" y1="0" y2="0"><stop offset="0" stop-color="#009912"/><stop offset=".5459" stop-color="#009900"/><stop offset="1" stop-color="#009900"/></linearGradient>
<linearGradient id="g40" gradientUnits="userSpaceOnUse" x1="1055" x2="1276" y1="0" y2="0"><stop offset="0" stop-color="#009912"/><stop offset=".552" stop-color="#009900"/><stop offset="1" stop-color="#009900"/></linearGradient>
<linearGradient id="g41" gradientUnits="userSpaceOnUse" x1="1055" x2="1279" y1="0" y2="0"><stop offset="0" stop-color="#009913"/><stop offset=".5625" stop-color="#009900"/><stop offset="1" stop-color="#009900"/></linearGradient>
<linearGradient id="g42" gradientUnits="userSpaceOnUse" x1="1055" x2="1282" y1="0" y2="0"><stop offset="0" stop-color="#009914"/><stop offset=".5683" stop-color="#009900"/><stop offset="1" stop-color="#009900"/></linearGradient>
<linearGradient id="g43" gradientUnits="userSpaceOnUse" x1="1054" x2="1284" y1="0" y2="0"><stop offset="0" stop-color="#009914"/><stop offset=".5783" stop-color="#009900"/><stop offset="1" stop-color="#009900"/></linearGradient>
<linearGradient id="g44" gradientUnits="userSpaceOnUse" x1="1054" x2="1287" y1="0" y2="0"><stop offset="0" stop-color="#009915"/><stop offset=".5837" stop-color="#009900"/><stop offset="1" stop-color="#009900"/></linearGradient>
<linearGradient id="g45" gradientUnits="userSpaceOnUse" x1="1054" x2="1290" y1="0" y2="0"><stop offset="0" stop-color="#009915"/><stop offset=".589" stop-color="#009900"/><stop offset="1" stop-color="#009900"/></linearGradient>
<linearGradient id="g46" gradientUnits="userSpaceOnUse" x1="1054" x2="1292" y1="0" y2="0"><stop offset="0" stop-color="#009916"/><stop offset=".5966" stop-color="#009900"/><stop offset="1" stop-color="#009900"/></linearGradient>
<linearGradient id="g47" gradientUnits="userSpaceOnUse" x1="1054" x2="1295" y1="0" y2="0"><stop offset="0" stop-color="#009916"/><stop offset=".6017" stop-color="#009900"/><stop offset="1" stop-color="#009900"/></linearGradient>
<linearGradient id="g48" gradientUnits="userSpaceOnUse" x1="1054" x2="1298" y1="0" y2="0"><stop offset="0" stop-color="#009917"/><stop offset=".6066" stop-color="#009900"/><stop offset="1" stop-color="#009900"/></linearGradient>
<linearGradient id="g49" gradientUnits="userSpaceOnUse" x1="1053" x2="1300" y1="0" y2="0"><stop offset="0" stop-color="#009918"/><stop offset=".6194" stop-color="#009900"/><stop offset="1" stop-color="#009900"/></linearGradient>
<linearGradient id="g50" gradientUnits="userSpaceOnUse" x1="1053" x2="1303" y1="0" y2="0"><stop offset="0" stop-color="#009918"/><stop offset=".624" stop-color="#009900"/><stop offset="1" stop-color="#029900"/></linearGradient>
<linearGradient id="g51" gradientUnits="userSpaceOnUse" x1="1053" x2="1306" y1="0" y2="0"><stop offset="0" stop-color="#009919"/><stop offset=".6285" stop-color="#009900"/><stop offset=".9763" stop-color="#009900"/><stop offset="1" stop-color="#059900"/></linearGradient>
<linearGradient id="g52" gradientUnits="userSpaceOnUse" x1="1053" x2="1308" y1="0" y2="0"><stop offset="0" stop-color="#00991a"/><stop offset=".6353" stop-color="#009900"/><stop offset=".9647" stop-color="#009900"/><stop offset="1" stop-color="#079900"/></linearGradient>
<linearGradient id="g53" gradientUnits="userSpaceOnUse" x1="1053" x2="1311" y1="0" y2="0"><stop offset="0" stop-color="#00991a"/><stop offset=".6395" stop-color="#009900"/><stop offset=".9535" stop-color="#009900"/><stop offset="1" stop-color="#0a9900"/></linearGradient>
<linearGradient id="g54" gradientUnits="userSpaceOnUse" x1="1053" x2="1313" y1="0" y2="0"><stop offset="0" stop-color="#00991b"/><stop offset=".6462" stop-color="#009900"/><stop offset=".9423" stop-color="#009900"/><stop offset="1" stop-color="#0c9900"/></linearGradient>
<linearGradient id="g55" gradientUnits="userSpaceOnUse" x1="1053" x2="1316" y1="0" y2="0"><stop offset="0" stop-color="#00991b"/><stop offset=".6502" stop-color="#009900"/><stop offset=".9278" stop-color="#009900"/><stop offset="1" stop-color="#0f9900"/></linearGradient>
<linearGradient id="g56" gradientUnits="userSpaceOnUse" x1="1053" x2="1319" y1="0" y2="0"><stop offset="0" stop-color="#00991c"/><stop offset=".6579" stop-color="#009900"/><stop offset=".9173" stop-color="#009900"/><stop offset="1" stop-color="#129900"/></linearGradient>
<linearGradient id="g57" gradientUnits="userSpaceOnUse" x1="1053" x2="1321" y1="0" y2="0"><stop offset="0" stop-color="#00991d"/><stop offset=".6642" stop-color="#009900"/><stop offset=".9067" stop-color="#009900"/><stop offset="1" stop-color="#159900"/></linearGradient>
<linearGradient id="g58" gradientUnits="userSpaceOnUse" x1="1053" x2="1324" y1="0" y2="0"><stop offset="0" stop-color="#00991d"/><stop offset=".6679" stop-color="#009900"/><stop offset=".893" stop-color="#009900"/><stop offset="1" stop-color="#189900"/></linearGradient>
<linearGradient id="g59" gradientUnits="userSpaceOnUse" x1="1053" x2="1326" y1="0" y2="0"><stop offset="0" stop-color="#00991e"/><stop offset=".674" stop-color="#009900"/><stop offset=".8864" stop-color="#009900"/><stop offset="1" stop-color="#1b9900"/></linearGradient>
<linearGradient id="g60" gradientUnits="userSpaceOnUse" x1="1053" x2="1329" y1="0" y2="0"><stop offset="0" stop-color="#00991f"/><stop offset=".6775" stop-color="#009900"/><stop offset=".8732" stop-color="#009900"/><stop offset="1" stop-color="#1e9900"/></linearGradient>
<linearGradient id="g61" gradientUnits="userSpaceOnUse" x1="1053" x2="1332" y1="0" y2="0"><stop offset="0" stop-color="#00991f"/><stop offset=".681" stop-color="#009900"/><stop offset=".8602" stop-color="#009900"/><stop offset="1" stop-color="#229900"/></linearGradient>
<linearGradient id="g62" gradientUnits="userSpaceOnUse" x1="1053" x2="1334" y1="0" y2="0"><stop offset="0" stop-color="#009920"/><stop offset=".6868" stop-color="#009900"/><stop offset=".8541" stop-color="#009900"/><stop offset="1" stop-color="#249900"/></linearGradient>
<linearGradient id="g63" gradientUnits="userSpaceOnUse" x1="1053" x2="1337" y1="0" y2="0"><stop offset="0" stop-color="#009921"/><stop offset=".6937" stop-color="#009900"/><stop offset=".8415" stop-color="#009900"/><stop offset="1" stop-color="#289900"/></linearGradient>
<linearGradient id="g64" gradientUnits="userSpaceOnUse" x1="1053" x2="1339" y1="0" y2="0"><stop offset="0" stop-color="#009921"/><stop offset=".6993" stop-color="#009900"/><stop offset=".8322" stop-color="#009900"/><stop offset="1" stop-color="#2b9900"/></linearGradient>
<linearGradient id="g65" gradientUnits="userSpaceOnUse" x1="1053" x2="1342" y1="0" y2="0"><stop offset="0" stop-color="#009922"/><stop offset=".7024" stop-color="#009900"/><stop offset=".8201" stop-color="#009900"/><stop offset="1" stop-color="#2f9900"/></linearGradient>
<linearGradient id="g66" gradientUnits="userSpaceOnUse" x1="1053" x2="1344" y1="0" y2="0"><stop offset="0" stop-color="#009923"/><stop offset=".7079" stop-color="#009900"/><stop offset=".8144" stop-color="#009900"/><stop offset="1" stop-color="#329900"/></linearGradient>
<linearGradient id="g67" gradientUnits="userSpaceOnUse" x1="1053" x2="1347" y1="0" y2="0"><stop offset="0" stop-color="#009923"/><stop offset=".4082" stop-color="#009912"/><stop offset=".7109" stop-color="#009900"/><stop offset=".8027" stop-color="#009900"/><stop offset="1" stop-color="#369900"/></linearGradient>
<linearGradient id="g68" gradientUnits="userSpaceOnUse" x1="1053" x2="1349" y1="0" y2="0"><stop offset="0" stop-color="#009924"/><stop offset=".4392" stop-color="#009911"/><stop offset=".7162" stop-color="#009900"/><stop offset=".7939" stop-color="#009900"/><stop offset="1" stop-color="#399900"/></linearGradient>
<linearGradient id="g69" gradientUnits="userSpaceOnUse" x1="1053" x2="1352" y1="0" y2="0"><stop offset="0" stop-color="#009925"/><stop offset=".4482" stop-color="#009911"/><stop offset=".7191" stop-color="#009900"/><stop offset=".786" stop-color="#009900"/><stop offset="1" stop-color="#3d9900"/></linearGradient>
<linearGradient id="g70" gradientUnits="userSpaceOnUse" x1="1053" x2="1354" y1="0" y2="0"><stop offset="0" stop-color="#009925"/><stop offset=".7774" stop-color="#009900"/><stop offset="1" stop-color="#409900"/></linearGradient>
<linearGradient id="g71" gradientUnits="userSpaceOnUse" x1="1053" x2="1357" y1="0" y2="0"><stop offset="0" stop-color="#009926"/><stop offset=".7664" stop-color="#009900"/><stop offset="1" stop-color="#459900"/></linearGradient>
<linearGradient id="g72" gradientUnits="userSpaceOnUse" x1="1053" x2="1359" y1="0" y2="0"><stop offset="0" stop-color="#009927"/><stop offset=".7614" stop-color="#009900"/><stop offset="1" stop-color="#489900"/></linearGradient>
<linearGradient id="g73" gradientUnits="userSpaceOnUse" x1="1053" x2="1362" y1="0" y2="0"><stop offset="0" stop-color="#009928"/><stop offset=".3948" stop-color="#009916"/><stop offset=".7508" stop-color="#009900"/><stop offset="1" stop-color="#4d9900"/></linearGradient>
<linearGradient id="g74" gradientUnits="userSpaceOnUse" x1="1053" x2="1364" y1="0" y2="0"><stop offset="0" stop-color="#009928"/><stop offset=".4244" stop-color="#009915"/><stop offset=".7428" stop-color="#009900"/><stop offset="1" stop-color="#509900"/></linearGradient>
<linearGradient id="g75" gradientUnits="userSpaceOnUse" x1="1053" x2="1367" y1="0" y2="0"><stop offset="0" stop-color="#009929"/><stop offset=".3981" stop-color="#009917"/><stop offset=".7357" stop-color="#009901"/><stop offset=".8949" stop-color="#309900"/><stop offset="1" stop-color="#559900"/></linearGradient>
<linearGradient id="g76" gradientUnits="userSpaceOnUse" x1="1053" x2="1370" y1="0" y2="0"><stop offset="0" stop-color="#00992a"/><stop offset=".3722" stop-color="#009919"/><stop offset=".7256" stop-color="#009902"/><stop offset=".8833" stop-color="#309900"/><stop offset="1" stop-color="#5a9900"/></linearGradient>
<linearGradient id="g77" gradientUnits="userSpaceOnUse" x1="1053" x2="1372" y1="0" y2="0"><stop offset="0" stop-color="#00992b"/><stop offset=".4201" stop-color="#009917"/><stop offset=".7179" stop-color="#009903"/><stop offset=".8746" stop-color="#309900"/><stop offset="1" stop-color="#5e9900"/></linearGradient>
<linearGradient id="g78" gradientUnits="userSpaceOnUse" x1="1054" x2="1375" y1="0" y2="0"><stop offset="0" stop-color="#00992b"/><stop offset=".3925" stop-color="#009919"/><stop offset=".7072" stop-color="#009904"/><stop offset=".8629" stop-color="#309900"/><stop offset="1" stop-color="#639900"/></linearGradient>
<linearGradient id="g79" gradientUnits="userSpaceOnUse" x1="1054" x2="1377" y1="0" y2="0"><stop offset="0" stop-color="#00992c"/><stop offset=".387" stop-color="#00991a"/><stop offset=".7028" stop-color="#009905"/><stop offset=".7616" stop-color="#129900"/><stop offset=".8545" stop-color="#309900"/><stop offset="1" stop-color="#679900"/></linearGradient>
<linearGradient id="g80" gradientUnits="userSpaceOnUse" x1="1054" x2="1380" y1="0" y2="0"><stop offset="0" stop-color="#00992d"/><stop offset=".362" stop-color="#00991c"/><stop offset=".6933" stop-color="#009906"/><stop offset=".7638" stop-color="#169900"/><stop offset=".8466" stop-color="#319900"/><stop offset="1" stop-color="#6d9900"/></linearGradient>
<linearGradient id="g81" gradientUnits="userSpaceOnUse" x1="1054" x2="1382" y1="0" y2="0"><stop offset="0" stop-color="#00992e"/><stop offset=".3567" stop-color="#00991d"/><stop offset=".686" stop-color="#009907"/><stop offset=".7683" stop-color="#1a9900"/><stop offset=".8384" stop-color="#319900"/><stop offset="1" stop-color="#719900"/></linearGradient>
<linearGradient id="g82" gradientUnits="userSpaceOnUse" x1="1054" x2="1385" y1="0" y2="0"><stop offset="0" stop-color="#00992e"/><stop offset=".3505" stop-color="#00991e"/><stop offset=".6798" stop-color="#009908"/><stop offset=".7704" stop-color="#1d9900"/><stop offset=".855" stop-color="#3b9900"/><stop offset="1" stop-color="#779900"/></linearGradient>
<linearGradient id="g83" gradientUnits="userSpaceOnUse" x1="1054" x2="1387" y1="0" y2="0"><stop offset="0" stop-color="#00992f"/><stop offset=".3634" stop-color="#00991e"/><stop offset=".6727" stop-color="#009909"/><stop offset=".7748" stop-color="#219900"/><stop offset=".8438" stop-color="#3a9900"/><stop offset="1" stop-color="#7b9900"/></linearGradient>
<linearGradient id="g84" gradientUnits="userSpaceOnUse" x1="1054" x2="1390" y1="0" y2="0"><stop offset="0" stop-color="#009930"/><stop offset=".375" stop-color="#00991e"/><stop offset=".6637" stop-color="#00990a"/><stop offset=".7768" stop-color="#269900"/><stop offset=".8333" stop-color="#3a9900"/><stop offset="1" stop-color="#819900"/></linearGradient>
<linearGradient id="g85" gradientUnits="userSpaceOnUse" x1="1055" x2="1392" y1="0" y2="0"><stop offset="0" stop-color="#009931"/><stop offset=".368" stop-color="#00991f"/><stop offset=".6588" stop-color="#00990b"/><stop offset=".8249" stop-color="#3a9900"/><stop offset="1" stop-color="#869900"/></linearGradient>
<linearGradient id="g86" gradientUnits="userSpaceOnUse" x1="1055" x2="1395" y1="0" y2="0"><stop offset="0" stop-color="#009932"/><stop offset=".3794" stop-color="#00991f"/><stop offset=".65" stop-color="#00990c"/><stop offset=".7853" stop-color="#2f9900"/><stop offset=".8471" stop-color="#479900"/><stop offset="1" stop-color="#8d9900"/></linearGradient>
<linearGradient id="g87" gradientUnits="userSpaceOnUse" x1="1055" x2="1397" y1="0" y2="0"><stop offset="0" stop-color="#009932"/><stop offset=".3421" stop-color="#009922"/><stop offset=".6433" stop-color="#00990d"/><stop offset=".8216" stop-color="#409900"/><stop offset="1" stop-color="#929900"/></linearGradient>
<linearGradient id="g88" gradientUnits="userSpaceOnUse" x1="1055" x2="1400" y1="0" y2="0"><stop offset="0" stop-color="#009933"/><stop offset=".371" stop-color="#009921"/><stop offset=".6377" stop-color="#00990e"/><stop offset=".7913" stop-color="#389900"/><stop offset=".8377" stop-color="#4b9900"/><stop offset="1" stop-color="#999900"/></linearGradient>
<linearGradient id="g89" gradientUnits="userSpaceOnUse" x1="1055" x2="1402" y1="0" y2="0"><stop offset="0" stop-color="#009934"/><stop offset=".3833" stop-color="#009921"/><stop offset=".6311" stop-color="#00990f"/><stop offset=".7954" stop-color="#3d9900"/><stop offset=".9049" stop-color="#6d9900"/><stop offset=".9914" stop-color="#999900"/><stop offset="1" stop-color="#999400"/></linearGradient>
<linearGradient id="g90" gradientUnits="userSpaceOnUse" x1="1055" x2="1405" y1="0" y2="0"><stop offset="0" stop-color="#009935"/><stop offset=".3629" stop-color="#009923"/><stop offset=".6229" stop-color="#009910"/><stop offset=".8171" stop-color="#4a9900"/><stop offset=".9771" stop-color="#999900"/><stop offset="1" stop-color="#998e00"/></linearGradient>
<linearGradient id="g91" gradientUnits="userSpaceOnUse" x1="1056" x2="1407" y1="0" y2="0"><stop offset="0" stop-color="#009936"/><stop offset=".3903" stop-color="#009922"/><stop offset=".6182" stop-color="#009911"/><stop offset=".7949" stop-color="#449901"/><stop offset=".9687" stop-color="#999900"/><stop offset="1" stop-color="#998900"/></linearGradient>
<linearGradient id="g92" gradientUnits="userSpaceOnUse" x1="1056" x2="1410" y1="0" y2="0"><stop offset="0" stop-color="#009937"/><stop offset=".3701" stop-color="#009924"/><stop offset=".6102" stop-color="#009912"/><stop offset=".8164" stop-color="#529900"/><stop offset=".9548" stop-color="#999900"/><stop offset="1" stop-color="#998300"/></linearGradient>
<linearGradient id="g93" gradientUnits="userSpaceOnUse" x1="1056" x2="1412" y1="0" y2="0"><stop offset="0" stop-color="#009938"/><stop offset=".6039" stop-color="#009914"/><stop offset=".7865" stop-color="#489903"/><stop offset=".9466" stop-color="#999900"/><stop offset="1" stop-color="#997e00"/></linearGradient>
<linearGradient id="g94" gradientUnits="userSpaceOnUse" x1="1056" x2="1415" y1="0" y2="0"><stop offset="0" stop-color="#009939"/><stop offset=".3482" stop-color="#009927"/><stop offset=".5961" stop-color="#009915"/><stop offset=".7855" stop-color="#4c9903"/><stop offset=".9331" stop-color="#999900"/><stop offset="1" stop-color="#997900"/></linearGradient>
<linearGradient id="g95" gradientUnits="userSpaceOnUse" x1="1056" x2="1417" y1="0" y2="0"><stop offset="0" stop-color="#00993a"/><stop offset=".3296" stop-color="#009929"/><stop offset=".5928" stop-color="#009916"/><stop offset=".7673" stop-color="#479905"/><stop offset=".8144" stop-color="#5e9900"/><stop offset=".9252" stop-color="#999900"/><stop offset="1" stop-color="#997500"/></linearGradient>
<linearGradient id="g96" gradientUnits="userSpaceOnUse" x1="1057" x2="1420" y1="0" y2="0"><stop offset="0" stop-color="#00993a"/><stop offset=".292" stop-color="#00992c"/><stop offset=".584" stop-color="#009917"/><stop offset=".7658" stop-color="#4b9906"/><stop offset=".8154" stop-color="#649900"/><stop offset=".9118" stop-color="#999900"/><stop offset="1" stop-color="#997000"/></linearGradient>
<linearGradient id="g97" gradientUnits="userSpaceOnUse" x1="1057" x2="1422" y1="0" y2="0"><stop offset="0" stop-color="#00993b"/><stop offset=".2904" stop-color="#00992d"/><stop offset=".5781" stop-color="#009918"/><stop offset=".7479" stop-color="#469908"/><stop offset=".8192" stop-color="#6a9900"/><stop offset=".9041" stop-color="#999900"/><stop offset=".9397" stop-color="#998500"/><stop offset="1" stop-color="#996c00"/></linearGradient>
<linearGradient id="g98" gradientUnits="userSpaceOnUse" x1="1057" x2="1424" y1="0" y2="0"><stop offset="0" stop-color="#00993c"/><stop offset=".2888" stop-color="#00992e"/><stop offset=".5749" stop-color="#009919"/><stop offset=".7575" stop-color="#4e9908"/><stop offset=".8229" stop-color="#709900"/><stop offset=".8937" stop-color="#999900"/><stop offset=".9455" stop-color="#997e00"/><stop offset="1" stop-color="#996900"/></linearGradient>
<linearGradient id="g99" gradientUnits="userSpaceOnUse" x1="1057" x2="1427" y1="0" y2="0"><stop offset="0" stop-color="#00993d"/><stop offset=".2703" stop-color="#009930"/><stop offset=".5676" stop-color="#00991b"/><stop offset=".7297" stop-color="#45990b"/><stop offset=".827" stop-color="#789900"/><stop offset=".8838" stop-color="#999900"/><stop offset=".9378" stop-color="#997c00"/><stop offset="1" stop-color="#996500"/></linearGradient>
<linearGradient id="g100" gradientUnits="userSpaceOnUse" x1="1058" x2="1429" y1="0" y2="0"><stop offset="0" stop-color="#00993e"/><stop offset=".2507" stop-color="#009932"/><stop offset=".5606" stop-color="#00991c"/><stop offset=".7116" stop-color="#40990e"/><stop offset=".8302" stop-color="#7f9900"/><stop offset=".876" stop-color="#999800"/><stop offset=".9326" stop-color="#997a00"/><stop offset="1" stop-color="#996100"/></linearGradient>
<linearGradient id="g101" gradientUnits="userSpaceOnUse" x1="1058" x2="1432" y1="0" y2="0"><stop offset="0" stop-color="#00993f"/><stop offset=".2834" stop-color="#009931"/><stop offset=".5561" stop-color="#00991d"/><stop offset=".7032" stop-color="#40990f"/><stop offset=".8636" stop-color="#999900"/><stop offset=".9251" stop-color="#997800"/><stop offset="1" stop-color="#995d00"/></linearGradient>
<linearGradient id="g102" gradientUnits="userSpaceOnUse" x1="1058" x2="1434" y1="0" y2="0"><stop offset="0" stop-color="#009940"/><stop offset=".266" stop-color="#009933"/><stop offset=".5505" stop-color="#00991e"/><stop offset=".6862" stop-color="#3b9912"/><stop offset=".8564" stop-color="#999800"/><stop offset=".9202" stop-color="#997600"/><stop offset="1" stop-color="#995a00"/></linearGradient>
<linearGradient id="g103" gradientUnits="userSpaceOnUse" x1="1058" x2="1437" y1="0" y2="0"><stop offset="0" stop-color="#009941"/><stop offset=".2823" stop-color="#009933"/><stop offset=".5435" stop-color="#009920"/><stop offset=".7098" stop-color="#4b9910"/><stop offset=".8443" stop-color="#999900"/><stop offset=".9156" stop-color="#997300"/><stop offset="1" stop-color="#995600"/></linearGradient>
<linearGradient id="g104" gradientUnits="userSpaceOnUse" x1="1059" x2="1439" y1="0" y2="0"><stop offset="0" stop-color="#009942"/><stop offset=".2974" stop-color="#009933"/><stop offset=".5395" stop-color="#009921"/><stop offset=".6947" stop-color="#479912"/><stop offset=".8368" stop-color="#999801"/><stop offset=".9158" stop-color="#996f00"/><stop offset="1" stop-color="#995400"/></linearGradient>
<linearGradient id="g105" gradientUnits="userSpaceOnUse" x1="1059" x2="1442" y1="0" y2="0"><stop offset="0" stop-color="#009943"/><stop offset=".3133" stop-color="#009933"/><stop offset=".5326" stop-color="#009922"/><stop offset=".6919" stop-color="#4a9913"/><stop offset=".8251" stop-color="#999903"/><stop offset=".8877" stop-color="#997600"/><stop offset="1" stop-color="#995000"/></linearGradient>
<linearGradient id="g106" gradientUnits="userSpaceOnUse" x1="1059" x2="1444" y1="0" y2="0"><stop offset="0" stop-color="#009944"/><stop offset=".2649" stop-color="#009937"/><stop offset=".5273" stop-color="#009924"/><stop offset=".6779" stop-color="#469915"/><stop offset=".8182" stop-color="#999804"/><stop offset=".8857" stop-color="#997300"/><stop offset="1" stop-color="#994d00"/></linearGradient>
<linearGradient id="g107" gradientUnits="userSpaceOnUse" x1="1059" x2="1447" y1="0" y2="0"><stop offset="0" stop-color="#009945"/><stop offset=".3144" stop-color="#009935"/><stop offset=".5206" stop-color="#009925"/><stop offset=".6624" stop-color="#429918"/><stop offset=".8067" stop-color="#999906"/><stop offset=".8789" stop-color="#997100"/><stop offset="1" stop-color="#994a00"/></linearGradient>
<linearGradient id="g108" gradientUnits="userSpaceOnUse" x1="1060" x2="1449" y1="0" y2="0"><stop offset="0" stop-color="#009946"/><stop offset=".2982" stop-color="#009937"/><stop offset=".5167" stop-color="#009926"/><stop offset=".6478" stop-color="#3e991a"/><stop offset=".7995" stop-color="#999808"/><stop offset=".8766" stop-color="#996e00"/><stop offset=".9512" stop-color="#995400"/><stop offset="1" stop-color="#994800"/></linearGradient>
<linearGradient id="g109" gradientUnits="userSpaceOnUse" x1="1060" x2="1452" y1="0" y2="0"><stop offset="0" stop-color="#009947"/><stop offset=".2832" stop-color="#009939"/><stop offset=".5102" stop-color="#009928"/><stop offset=".6531" stop-color="#45991a"/><stop offset=".7883" stop-color="#99990a"/><stop offset=".8189" stop-color="#998505"/><stop offset=".8801" stop-color="#996800"/><stop offset="1" stop-color="#994500"/></linearGradient>
<linearGradient id="g110" gradientUnits="userSpaceOnUse" x1="1060" x2="1454" y1="0" y2="0"><stop offset="0" stop-color="#009948"/><stop offset=".269" stop-color="#00993b"/><stop offset=".5051" stop-color="#009929"/><stop offset=".6523" stop-color="#48991b"/><stop offset=".7817" stop-color="#99980b"/><stop offset=".8553" stop-color="#996f00"/><stop offset=".9162" stop-color="#995800"/><stop offset="1" stop-color="#994200"/></linearGradient>
<linearGradient id="g111" gradientUnits="userSpaceOnUse" x1="1061" x2="1457" y1="0" y2="0"><stop offset="0" stop-color="#00994a"/><stop offset=".5" stop-color="#00992b"/><stop offset=".654" stop-color="#4e991c"/><stop offset=".7702" stop-color="#99990d"/><stop offset=".8283" stop-color="#997604"/><stop offset=".8864" stop-color="#995e00"/><stop offset="1" stop-color="#994000"/></linearGradient>
<linearGradient id="g112" gradientUnits="userSpaceOnUse" x1="1061" x2="1459" y1="0" y2="0"><stop offset="0" stop-color="#00994b"/><stop offset=".495" stop-color="#00992c"/><stop offset=".6307" stop-color="#44991f"/><stop offset=".7638" stop-color="#99980f"/><stop offset=".8141" stop-color="#997906"/><stop offset=".8719" stop-color="#996000"/><stop offset="1" stop-color="#993d00"/></linearGradient>
<linearGradient id="g113" gradientUnits="userSpaceOnUse" x1="1061" x2="1462" y1="0" y2="0"><stop offset="0" stop-color="#00994c"/><stop offset=".4888" stop-color="#00992e"/><stop offset=".6334" stop-color="#4a9920"/><stop offset=".7531" stop-color="#999911"/><stop offset=".798" stop-color="#997c09"/><stop offset=".8554" stop-color="#996201"/><stop offset=".9202" stop-color="#994d00"/><stop offset="1" stop-color="#993b00"/></linearGradient>
<linearGradient id="g114" gradientUnits="userSpaceOnUse" x1="1061" x2="1464" y1="0" y2="0"><stop offset="0" stop-color="#00994d"/><stop offset=".2605" stop-color="#009940"/><stop offset=".4864" stop-color="#00992f"/><stop offset=".6104" stop-color="#409923"/><stop offset=".7469" stop-color="#999813"/><stop offset=".8015" stop-color="#997608"/><stop offset=".8685" stop-color="#995a00"/><stop offset="1" stop-color="#993900"/></linearGradient>
<linearGradient id="g115" gradientUnits="userSpaceOnUse" x1="1062" x2="1467" y1="0" y2="0"><stop offset="0" stop-color="#00994e"/><stop offset=".479" stop-color="#009931"/><stop offset=".6074" stop-color="#439925"/><stop offset=".7358" stop-color="#999915"/><stop offset=".7852" stop-color="#99790b"/><stop offset=".8543" stop-color="#995b01"/><stop offset=".921" stop-color="#994700"/><stop offset="1" stop-color="#993600"/></linearGradient>
<linearGradient id="g116" gradientUnits="userSpaceOnUse" x1="1062" x2="1469" y1="0" y2="0"><stop offset="0" stop-color="#00994f"/><stop offset=".4742" stop-color="#009933"/><stop offset=".5897" stop-color="#3c9928"/><stop offset=".6634" stop-color="#6a991f"/><stop offset=".7273" stop-color="#989917"/><stop offset=".7813" stop-color="#99770c"/><stop offset=".8428" stop-color="#995c03"/><stop offset=".9189" stop-color="#994500"/><stop offset="1" stop-color="#993400"/></linearGradient>
<linearGradient id="g117" gradientUnits="userSpaceOnUse" x1="1062" x2="1472" y1="0" y2="0"><stop offset="0" stop-color="#009951"/><stop offset=".4707" stop-color="#009934"/><stop offset=".6073" stop-color="#4b9927"/><stop offset=".7195" stop-color="#999919"/><stop offset=".7659" stop-color="#997a0f"/><stop offset=".8293" stop-color="#995d05"/><stop offset=".9073" stop-color="#994500"/><stop offset="1" stop-color="#993200"/></linearGradient>
<linearGradient id="g118" gradientUnits="userSpaceOnUse" x1="1063" x2="1474" y1="0" y2="0"><stop offset="0" stop-color="#009952"/><stop offset=".4647" stop-color="#009936"/><stop offset=".6058" stop-color="#4e9928"/><stop offset=".7105" stop-color="#98991b"/><stop offset=".7689" stop-color="#99740e"/><stop offset=".837" stop-color="#995704"/><stop offset=".9221" stop-color="#993f00"/><stop offset="1" stop-color="#993000"/></linearGradient>
<linearGradient id="g119" gradientUnits="userSpaceOnUse" x1="1063" x2="1477" y1="0" y2="0"><stop offset="0" stop-color="#009953"/><stop offset=".4589" stop-color="#009937"/><stop offset=".5411" stop-color="#2b9930"/><stop offset=".6063" stop-color="#539929"/><stop offset=".7029" stop-color="#99991d"/><stop offset=".7609" stop-color="#997310"/><stop offset=".8237" stop-color="#995806"/><stop offset=".872" stop-color="#994900"/><stop offset="1" stop-color="#992e00"/></linearGradient>
<linearGradient id="g120" gradientUnits="userSpaceOnUse" x1="1063" x2="1479" y1="0" y2="0"><stop offset="0" stop-color="#009954"/><stop offset=".4567" stop-color="#009939"/><stop offset=".5913" stop-color="#4d992c"/><stop offset=".6947" stop-color="#989920"/><stop offset=".7476" stop-color="#997613"/><stop offset=".8149" stop-color="#995807"/><stop offset=".875" stop-color="#994600"/><stop offset="1" stop-color="#992c00"/></linearGradient>
<linearGradient id="g121" gradientUnits="userSpaceOnUse" x1="1064" x2="1482" y1="0" y2="0"><stop offset="0" stop-color="#009955"/><stop offset=".4498" stop-color="#00993b"/><stop offset=".5789" stop-color="#4a992e"/><stop offset=".6866" stop-color="#999922"/><stop offset=".7488" stop-color="#997012"/><stop offset=".8014" stop-color="#995909"/><stop offset=".8756" stop-color="#994300"/><stop offset="1" stop-color="#992a00"/></linearGradient>
<linearGradient id="g122" gradientUnits="userSpaceOnUse" x1="1064" x2="1484" y1="0" y2="0"><stop offset="0" stop-color="#009957"/><stop offset=".4452" stop-color="#00993c"/><stop offset=".5643" stop-color="#449931"/><stop offset=".6786" stop-color="#989924"/><stop offset=".7357" stop-color="#997315"/><stop offset=".8071" stop-color="#995409"/><stop offset=".8786" stop-color="#994000"/><stop offset="1" stop-color="#992900"/></linearGradient>
<linearGradient id="g123" gradientUnits="userSpaceOnUse" x1="1064" x2="1486" y1="0" y2="0"><stop offset="0" stop-color="#009958"/><stop offset=".4408" stop-color="#00993e"/><stop offset=".5711" stop-color="#4c9932"/><stop offset=".673" stop-color="#999926"/><stop offset=".7299" stop-color="#997216"/><stop offset=".7986" stop-color="#99540a"/><stop offset=".8815" stop-color="#993d00"/><stop offset="1" stop-color="#992700"/></linearGradient>
<linearGradient id="g124" gradientUnits="userSpaceOnUse" x1="1065" x2="1489" y1="0" y2="0"><stop offset="0" stop-color="#009959"/><stop offset=".4363" stop-color="#009940"/><stop offset=".559" stop-color="#499935"/><stop offset=".6627" stop-color="#989928"/><stop offset=".7146" stop-color="#997519"/><stop offset=".7877" stop-color="#99540c"/><stop offset=".8844" stop-color="#993900"/><stop offset="1" stop-color="#992500"/></linearGradient>
<linearGradient id="g125" gradientUnits="userSpaceOnUse" x1="1065" x2="1491" y1="0" y2="0"><stop offset="0" stop-color="#00995b"/><stop offset=".4319" stop-color="#009942"/><stop offset=".5493" stop-color="#469937"/><stop offset=".6573" stop-color="#99992b"/><stop offset=".7183" stop-color="#996f19"/><stop offset=".7911" stop-color="#99500b"/><stop offset=".8873" stop-color="#993700"/><stop offset="1" stop-color="#992400"/></linearGradient>
<linearGradient id="g126" gradientUnits="userSpaceOnUse" x1="1065" x2="1494" y1="0" y2="0"><stop offset="0" stop-color="#00995c"/><stop offset=".4266" stop-color="#009944"/><stop offset=".5385" stop-color="#43993a"/><stop offset=".648" stop-color="#98992d"/><stop offset=".704" stop-color="#99721c"/><stop offset=".7809" stop-color="#99500d"/><stop offset=".8881" stop-color="#993400"/><stop offset="1" stop-color="#992200"/></linearGradient>
<linearGradient id="g127" gradientUnits="userSpaceOnUse" x1="1066" x2="1496" y1="0" y2="0"><stop offset="0" stop-color="#00995d"/><stop offset=".4233" stop-color="#009945"/><stop offset=".5395" stop-color="#48993b"/><stop offset=".6419" stop-color="#99992f"/><stop offset=".6977" stop-color="#99711d"/><stop offset=".7721" stop-color="#99500e"/><stop offset=".8907" stop-color="#993200"/><stop offset="1" stop-color="#992000"/></linearGradient>
<linearGradient id="g128" gradientUnits="userSpaceOnUse" x1="1066" x2="1499" y1="0" y2="0"><stop offset="0" stop-color="#00995f"/><stop offset=".418" stop-color="#009947"/><stop offset=".5289" stop-color="#45993e"/><stop offset=".6328" stop-color="#989932"/><stop offset=".6998" stop-color="#996b1d"/><stop offset=".7621" stop-color="#995010"/><stop offset=".8915" stop-color="#992f00"/><stop offset="1" stop-color="#991f00"/></linearGradient>
<linearGradient id="g129" gradientUnits="userSpaceOnUse" x1="1066" x2="1501" y1="0" y2="0"><stop offset="0" stop-color="#009960"/><stop offset=".4138" stop-color="#009949"/><stop offset=".5126" stop-color="#3d9941"/><stop offset=".5816" stop-color="#71993a"/><stop offset=".6276" stop-color="#999934"/><stop offset=".6874" stop-color="#996e20"/><stop offset=".7747" stop-color="#99490e"/><stop offset=".8943" stop-color="#992d00"/><stop offset="1" stop-color="#991d00"/></linearGradient>
<linearGradient id="g130" gradientUnits="userSpaceOnUse" x1="1067" x2="1504" y1="0" y2="0"><stop offset="0" stop-color="#009962"/><stop offset=".4096" stop-color="#00994b"/><stop offset=".5263" stop-color="#4c9941"/><stop offset=".6178" stop-color="#989937"/><stop offset=".6796" stop-color="#996d21"/><stop offset=".7643" stop-color="#994910"/><stop offset=".8947" stop-color="#992b00"/><stop offset="1" stop-color="#991c00"/></linearGradient>
<linearGradient id="g131" gradientUnits="userSpaceOnUse" x1="1067" x2="1506" y1="0" y2="0"><stop offset="0" stop-color="#009963"/><stop offset=".4055" stop-color="#00994d"/><stop offset=".5239" stop-color="#4e9943"/><stop offset=".6128" stop-color="#999939"/><stop offset=".6743" stop-color="#996c23"/><stop offset=".7563" stop-color="#994911"/><stop offset=".8975" stop-color="#992800"/><stop offset="1" stop-color="#991a00"/></linearGradient>
<linearGradient id="g132" gradientUnits="userSpaceOnUse" x1="1068" x2="1509" y1="0" y2="0"><stop offset="0" stop-color="#009965"/><stop offset=".3991" stop-color="#009950"/><stop offset=".5102" stop-color="#499946"/><stop offset=".6032" stop-color="#98993c"/><stop offset=".6667" stop-color="#996b24"/><stop offset=".7551" stop-color="#994611"/><stop offset=".898" stop-color="#992600"/><stop offset="1" stop-color="#991900"/></linearGradient>
<linearGradient id="g133" gradientUnits="userSpaceOnUse" x1="1068" x2="1511" y1="0" y2="0"><stop offset="0" stop-color="#009966"/><stop offset=".3973" stop-color="#009951"/><stop offset=".5079" stop-color="#4b9948"/><stop offset=".5982" stop-color="#99993f"/><stop offset=".6546" stop-color="#996e28"/><stop offset=".7472" stop-color="#994613"/><stop offset=".9007" stop-color="#992400"/><stop offset="1" stop-color="#991800"/></linearGradient>
<linearGradient id="g134" gradientUnits="userSpaceOnUse" x1="1068" x2="1514" y1="0" y2="0"><stop offset="0" stop-color="#009968"/><stop offset=".3924" stop-color="#009954"/><stop offset=".4955" stop-color="#46994b"/><stop offset=".5897" stop-color="#989941"/><stop offset=".6278" stop-color="#997a31"/><stop offset=".657" stop-color="#996827"/><stop offset=".7466" stop-color="#994313"/><stop offset=".9013" stop-color="#992200"/><stop offset="1" stop-color="#991600"/></linearGradient>
<linearGradient id="g135" gradientUnits="userSpaceOnUse" x1="1069" x2="1516" y1="0" y2="0"><stop offset="0" stop-color="#009969"/><stop offset=".387" stop-color="#009956"/><stop offset=".4832" stop-color="#41994e"/><stop offset=".5324" stop-color="#69994a"/><stop offset=".5839" stop-color="#999944"/><stop offset=".6085" stop-color="#998338"/><stop offset=".651" stop-color="#996728"/><stop offset=".7383" stop-color="#994314"/><stop offset=".8121" stop-color="#993009"/><stop offset=".9038" stop-color="#992100"/><stop offset="1" stop-color="#991500"/></linearGradient>
<linearGradient id="g136" gradientUnits="userSpaceOnUse" x1="1069" x2="1519" y1="0" y2="0"><stop offset="0" stop-color="#00996b"/><stop offset=".3822" stop-color="#009958"/><stop offset=".4711" stop-color="#3c9951"/><stop offset=".5133" stop-color="#5e994d"/><stop offset=".5756" stop-color="#989947"/><stop offset=".6156" stop-color="#997834"/><stop offset=".6444" stop-color="#99662a"/><stop offset=".7222" stop-color="#994517"/><stop offset=".8156" stop-color="#992d09"/><stop offset=".9044" stop-color="#991f00"/><stop offset="1" stop-color="#991400"/></linearGradient>
<linearGradient id="g137" gradientUnits="userSpaceOnUse" x1="1070" x2="1521" y1="0" y2="0"><stop offset="0" stop-color="#00996d"/><stop offset=".3792" stop-color="#00995a"/><stop offset=".4745" stop-color="#439953"/><stop offset=".5698" stop-color="#99994a"/><stop offset=".5987" stop-color="#997f3b"/><stop offset=".6319" stop-color="#99692e"/><stop offset=".6785" stop-color="#995220"/><stop offset=".7228" stop-color="#994217"/><stop offset=".8115" stop-color="#992c0a"/><stop offset=".8825" stop-color="#992002"/><stop offset="1" stop-color="#991200"/></linearGradient>
<linearGradient id="g138" gradientUnits="userSpaceOnUse" x1="1070" x2="1524" y1="0" y2="0"><stop offset="0" stop-color="#00996e"/><stop offset=".3744" stop-color="#00995d"/><stop offset=".4714" stop-color="#459955"/><stop offset=".5617" stop-color="#98994d"/><stop offset=".5925" stop-color="#997e3d"/><stop offset=".6256" stop-color="#99682f"/><stop offset=".7137" stop-color="#994218"/><stop offset=".7952" stop-color="#992d0c"/><stop offset=".8833" stop-color="#991e02"/><stop offset="1" stop-color="#991100"/></linearGradient>
<linearGradient id="g139" gradientUnits="userSpaceOnUse" x1="1070" x2="1526" y1="0" y2="0"><stop offset="0" stop-color="#009970"/><stop offset=".3706" stop-color="#00995f"/><stop offset=".4583" stop-color="#3e9959"/><stop offset=".557" stop-color="#999950"/><stop offset=".5877" stop-color="#997d3e"/><stop offset=".6206" stop-color="#996731"/><stop offset=".6996" stop-color="#99441b"/><stop offset=".8289" stop-color="#992508"/><stop offset=".9123" stop-color="#991900"/><stop offset="1" stop-color="#991000"/></linearGradient>
<linearGradient id="g140" gradientUnits="userSpaceOnUse" x1="1071" x2="1529" y1="0" y2="0"><stop offset="0" stop-color="#009972"/><stop offset=".3668" stop-color="#009961"/><stop offset=".4651" stop-color="#49995a"/><stop offset=".548" stop-color="#989953"/><stop offset=".5742" stop-color="#998144"/><stop offset=".6135" stop-color="#996632"/><stop offset=".6987" stop-color="#99411b"/><stop offset=".8406" stop-color="#992107"/><stop offset=".9127" stop-color="#991800"/><stop offset="1" stop-color="#990f00"/></linearGradient>
<linearGradient id="g141" gradientUnits="userSpaceOnUse" x1="1071" x2="1531" y1="0" y2="0"><stop offset="0" stop-color="#009973"/><stop offset=".363" stop-color="#009964"/><stop offset=".4652" stop-color="#4d995d"/><stop offset=".5435" stop-color="#999956"/><stop offset=".5696" stop-color="#998046"/><stop offset=".6174" stop-color="#996031"/><stop offset=".7109" stop-color="#993b19"/><stop offset=".8652" stop-color="#991c04"/><stop offset="1" stop-color="#990e00"/></linearGradient>
<linearGradient id="g142" gradientUnits="userSpaceOnUse" x1="1072" x2="1534" y1="0" y2="0"><stop offset="0" stop-color="#009975"/><stop offset=".3571" stop-color="#009966"/><stop offset=".4459" stop-color="#429960"/><stop offset=".4913" stop-color="#6b995d"/><stop offset=".5346" stop-color="#989959"/><stop offset=".5714" stop-color="#997843"/><stop offset=".6104" stop-color="#995f32"/><stop offset=".697" stop-color="#993c1b"/><stop offset=".7749" stop-color="#99290e"/><stop offset=".8766" stop-color="#991903"/><stop offset="1" stop-color="#990c00"/></linearGradient>
<linearGradient id="g143" gradientUnits="userSpaceOnUse" x1="1072" x2="1536" y1="0" y2="0"><stop offset="0" stop-color="#009977"/><stop offset=".3556" stop-color="#009969"/><stop offset=".4461" stop-color="#469963"/><stop offset=".5302" stop-color="#99995c"/><stop offset=".5603" stop-color="#997c49"/><stop offset=".6056" stop-color="#995e34"/><stop offset=".6961" stop-color="#993a1b"/><stop offset=".7866" stop-color="#99250d"/><stop offset=".8793" stop-color="#991803"/><stop offset="1" stop-color="#990b00"/></linearGradient>
<linearGradient id="g144" gradientUnits="userSpaceOnUse" x1="1072" x2="1539" y1="0" y2="0"><stop offset="0" stop-color="#009979"/><stop offset=".3512" stop-color="#00996b"/><stop offset=".4433" stop-color="#489966"/><stop offset=".5225" stop-color="#98995f"/><stop offset=".561" stop-color="#997647"/><stop offset=".5996" stop-color="#995d36"/><stop offset=".6403" stop-color="#994a28"/><stop offset=".6938" stop-color="#99381c"/><stop offset=".7709" stop-color="#99260f"/><stop offset=".8565" stop-color="#991905"/><stop offset="1" stop-color="#990a00"/></linearGradient>
<linearGradient id="g145" gradientUnits="userSpaceOnUse" x1="1073" x2="1541" y1="0" y2="0"><stop offset="0" stop-color="#00997b"/><stop offset=".3462" stop-color="#00996e"/><stop offset=".3953" stop-color="#24996b"/><stop offset=".4487" stop-color="#529968"/><stop offset=".5171" stop-color="#999963"/><stop offset=".5513" stop-color="#99784b"/><stop offset=".594" stop-color="#995c37"/><stop offset=".6816" stop-color="#99391e"/><stop offset=".7564" stop-color="#992711"/><stop offset=".8376" stop-color="#991a07"/><stop offset=".9209" stop-color="#991000"/><stop offset="1" stop-color="#990900"/></linearGradient>
<linearGradient id="g146" gradientUnits="userSpaceOnUse" x1="1073" x2="1544" y1="0" y2="0"><stop offset="0" stop-color="#00997c"/><stop offset=".3439" stop-color="#009971"/><stop offset=".4204" stop-color="#3d996c"/><stop offset=".5117" stop-color="#999865"/><stop offset=".5456" stop-color="#99774d"/><stop offset=".5881" stop-color="#995b39"/><stop offset=".6794" stop-color="#99371e"/><stop offset=".7665" stop-color="#992310"/><stop offset=".8705" stop-color="#991404"/><stop offset="1" stop-color="#990800"/></linearGradient>
<linearGradient id="g147" gradientUnits="userSpaceOnUse" x1="1074" x2="1546" y1="0" y2="0"><stop offset="0" stop-color="#00997e"/><stop offset=".339" stop-color="#009973"/><stop offset=".4174" stop-color="#3f996f"/><stop offset=".4619" stop-color="#6a996d"/><stop offset=".5042" stop-color="#99996a"/><stop offset=".5339" stop-color="#997b53"/><stop offset=".572" stop-color="#99603f"/><stop offset=".6186" stop-color="#99492e"/><stop offset=".6674" stop-color="#993821"/><stop offset=".7415" stop-color="#992613"/><stop offset=".839" stop-color="#991707"/><stop offset=".9237" stop-color="#990e00"/><stop offset="1" stop-color="#990700"/></linearGradient>
<linearGradient id="g148" gradientUnits="userSpaceOnUse" x1="1074" x2="1548" y1="0" y2="0"><stop offset="0" stop-color="#009980"/><stop offset=".3354" stop-color="#009976"/><stop offset=".4198" stop-color="#459972"/><stop offset=".5" stop-color="#99986c"/><stop offset=".5295" stop-color="#997a55"/><stop offset=".5675" stop-color="#995f41"/><stop offset=".6118" stop-color="#994930"/><stop offset=".6667" stop-color="#993621"/><stop offset=".7426" stop-color="#992413"/><stop offset=".8207" stop-color="#991809"/><stop offset=".9262" stop-color="#990c00"/><stop offset="1" stop-color="#990600"/></linearGradient>
<linearGradient id="g149" gradientUnits="userSpaceOnUse" x1="1075" x2="1551" y1="0" y2="0"><stop offset="0" stop-color="#009982"/><stop offset=".3298" stop-color="#009979"/><stop offset=".3929" stop-color="#329976"/><stop offset=".4391" stop-color="#5e9974"/><stop offset=".4916" stop-color="#999971"/><stop offset=".5252" stop-color="#997756"/><stop offset=".5609" stop-color="#995e42"/><stop offset=".6029" stop-color="#994932"/><stop offset=".6534" stop-color="#993724"/><stop offset=".7269" stop-color="#992515"/><stop offset=".8298" stop-color="#991508"/><stop offset=".9265" stop-color="#990b00"/><stop offset="1" stop-color="#990500"/></linearGradient>
<linearGradient id="g150" gradientUnits="userSpaceOnUse" x1="1075" x2="1553" y1="0" y2="0"><stop offset="0" stop-color="#009984"/><stop offset=".3285" stop-color="#00997c"/><stop offset=".3745" stop-color="#25997a"/><stop offset=".4268" stop-color="#569978"/><stop offset=".4874" stop-color="#999874"/><stop offset=".5126" stop-color="#997d5e"/><stop offset=".5481" stop-color="#996248"/><stop offset=".5983" stop-color="#994833"/><stop offset=".6527" stop-color="#993524"/><stop offset=".7448" stop-color="#992013"/><stop offset=".8222" stop-color="#991509"/><stop offset=".9289" stop-color="#990a00"/><stop offset="1" stop-color="#990400"/></linearGradient>
<linearGradient id="g151" gradientUnits="userSpaceOnUse" x1="1076" x2="1556" y1="0" y2="0"><stop offset="0" stop-color="#009987"/><stop offset=".3229" stop-color="#00997f"/><stop offset=".3667" stop-color="#23997d"/><stop offset=".4146" stop-color="#50997b"/><stop offset=".4792" stop-color="#999978"/><stop offset=".5083" stop-color="#997a5f"/><stop offset=".5417" stop-color="#99614a"/><stop offset=".5896" stop-color="#994835"/><stop offset=".6396" stop-color="#993626"/><stop offset=".7125" stop-color="#992418"/><stop offset=".8021" stop-color="#99160b"/><stop offset=".9292" stop-color="#990900"/><stop offset="1" stop-color="#990300"/></linearGradient>
<linearGradient id="g152" gradientUnits="userSpaceOnUse" x1="1076" x2="1558" y1="0" y2="0"><stop offset="0" stop-color="#009989"/><stop offset=".3195" stop-color="#009982"/><stop offset=".361" stop-color="#219981"/><stop offset=".4046" stop-color="#4a997f"/><stop offset=".4751" stop-color="#99987b"/><stop offset=".5062" stop-color="#997760"/><stop offset=".5436" stop-color="#995c49"/><stop offset=".5851" stop-color="#994737"/><stop offset=".6494" stop-color="#993124"/><stop offset=".7303" stop-color="#991f15"/><stop offset=".8133" stop-color="#99130a"/><stop offset=".9315" stop-color="#990700"/><stop offset="1" stop-color="#990300"/></linearGradient>
<linearGradient id="g153" gradientUnits="userSpaceOnUse" x1="1077" x2="1561" y1="0" y2="0"><stop offset="0" stop-color="#00998b"/><stop offset=".3161" stop-color="#009985"/><stop offset=".3926" stop-color="#449983"/><stop offset=".4669" stop-color="#999980"/><stop offset=".5021" stop-color="#997460"/><stop offset=".5372" stop-color="#995b4a"/><stop offset=".5785" stop-color="#994638"/><stop offset=".6322" stop-color="#993328"/><stop offset=".6983" stop-color="#99231a"/><stop offset=".7851" stop-color="#99150d"/><stop offset=".9318" stop-color="#990600"/><stop offset="1" stop-color="#990200"/></linearGradient>
<linearGradient id="g154" gradientUnits="userSpaceOnUse" x1="1077" x2="1563" y1="0" y2="0"><stop offset="0" stop-color="#00998d"/><stop offset=".3128" stop-color="#009988"/><stop offset=".3848" stop-color="#409987"/><stop offset=".463" stop-color="#999883"/><stop offset=".4877" stop-color="#997c6b"/><stop offset=".5247" stop-color="#995f51"/><stop offset=".572" stop-color="#99463b"/><stop offset=".6317" stop-color="#993128"/><stop offset=".716" stop-color="#991e17"/><stop offset=".8045" stop-color="#99120b"/><stop offset=".9362" stop-color="#990500"/><stop offset="1" stop-color="#990100"/></linearGradient>
<linearGradient id="g155" gradientUnits="userSpaceOnUse" x1="1077" x2="1566" y1="0" y2="0"><stop offset="0" stop-color="#00998f"/><stop offset=".3088" stop-color="#00998c"/><stop offset=".3763" stop-color="#3c998a"/><stop offset=".4213" stop-color="#6d9989"/><stop offset=".456" stop-color="#999988"/><stop offset=".4867" stop-color="#99776a"/><stop offset=".5256" stop-color="#995a4f"/><stop offset=".5706" stop-color="#99443a"/><stop offset=".6299" stop-color="#992f28"/><stop offset=".7055" stop-color="#991e19"/><stop offset=".8139" stop-color="#990f0a"/><stop offset=".9366" stop-color="#990400"/><stop offset="1" stop-color="#990000"/></linearGradient>
<linearGradient id="g156" gradientUnits="userSpaceOnUse" x1="1078" x2="1568" y1="0" y2="0"><stop offset="0" stop-color="#009992"/><stop offset=".3061" stop-color="#00998f"/><stop offset=".3837" stop-color="#49998e"/><stop offset=".451" stop-color="#99988b"/><stop offset=".4837" stop-color="#99746a"/><stop offset=".5204" stop-color="#995951"/><stop offset=".5735" stop-color="#993f39"/><stop offset=".6327" stop-color="#992c27"/><stop offset=".702" stop-color="#991d19"/><stop offset=".7959" stop-color="#99100c"/><stop offset=".9388" stop-color="#990300"/><stop offset="1" stop-color="#990000"/></linearGradient>
<linearGradient id="g157" gradientUnits="userSpaceOnUse" x1="1078" x2="1571" y1="0" y2="0"><stop offset="0" stop-color="#009994"/><stop offset=".3022" stop-color="#009992"/><stop offset=".3773" stop-color="#479992"/><stop offset=".4442" stop-color="#999991"/><stop offset=".4767" stop-color="#99756e"/><stop offset=".5132" stop-color="#995954"/><stop offset=".5598" stop-color="#99423d"/><stop offset=".6166" stop-color="#992e2b"/><stop offset=".6917" stop-color="#991d1b"/><stop offset=".787" stop-color="#99100d"/><stop offset=".9391" stop-color="#990200"/><stop offset="1" stop-color="#990000"/></linearGradient>
<linearGradient id="g158" gradientUnits="userSpaceOnUse" x1="1079" x2="1573" y1="0" y2="0"><stop offset="0" stop-color="#009996"/><stop offset=".2976" stop-color="#009996"/><stop offset=".3684" stop-color="#439996"/><stop offset=".4393" stop-color="#999894"/><stop offset=".4676" stop-color="#997774"/><stop offset=".5081" stop-color="#995856"/><stop offset=".5486" stop-color="#994341"/><stop offset=".6154" stop-color="#992c2b"/><stop offset=".6761" stop-color="#991f1d"/><stop offset=".7874" stop-color="#990e0d"/><stop offset=".9413" stop-color="#990100"/><stop offset="1" stop-color="#990000"/></linearGradient>
<linearGradient id="g159" gradientUnits="userSpaceOnUse" x1="1079" x2="1576" y1="0" y2="0"><stop offset="0" stop-color="#009999"/><stop offset=".2958" stop-color="#009999"/><stop offset=".3662" stop-color="#459899"/><stop offset=".4346" stop-color="#999697"/><stop offset=".4668" stop-color="#997273"/><stop offset=".507" stop-color="#995555"/><stop offset=".5553" stop-color="#993d3e"/><stop offset=".6177" stop-color="#99292a"/><stop offset=".6922" stop-color="#991a1a"/><stop offset=".7867" stop-color="#990d0d"/><stop offset=".9336" stop-color="#990001"/><stop offset="1" stop-color="#990000"/></linearGradient>
<linearGradient id="g160" gradientUnits="userSpaceOnUse" x1="1080" x2="1578" y1="0" y2="0"><stop offset="0" stop-color="#009799"/><stop offset=".2912" stop-color="#009599"/><stop offset=".3554" stop-color="#3d9599"/><stop offset=".4317" stop-color="#999298"/><stop offset=".4598" stop-color="#997377"/><stop offset=".494" stop-color="#99595c"/><stop offset=".5402" stop-color="#994044"/><stop offset=".6004" stop-color="#992c2e"/><stop offset=".6687" stop-color="#991c1f"/><stop offset=".7992" stop-color="#990a0c"/><stop offset=".9217" stop-color="#990002"/><stop offset="1" stop-color="#990000"/></linearGradient>
<linearGradient id="g161" gradientUnits="userSpaceOnUse" x1="1080" x2="1581" y1="0" y2="0"><stop offset="0" stop-color="#009499"/><stop offset=".2874" stop-color="#009299"/><stop offset=".3573" stop-color="#429199"/><stop offset=".4291" stop-color="#998e98"/><stop offset=".4631" stop-color="#996b72"/><stop offset=".495" stop-color="#99545a"/><stop offset=".5449" stop-color="#993b41"/><stop offset=".6028" stop-color="#99292d"/><stop offset=".6687" stop-color="#991b1e"/><stop offset=".7685" stop-color="#990c10"/><stop offset=".9062" stop-color="#990003"/><stop offset="1" stop-color="#990000"/></linearGradient>
<linearGradient id="g162" gradientUnits="userSpaceOnUse" x1="1081" x2="1583" y1="0" y2="0"><stop offset="0" stop-color="#009299"/><stop offset=".2849" stop-color="#008e99"/><stop offset=".3606" stop-color="#498d99"/><stop offset=".4263" stop-color="#998a98"/><stop offset=".4542" stop-color="#996d78"/><stop offset=".498" stop-color="#994e57"/><stop offset=".5398" stop-color="#993a42"/><stop offset=".6016" stop-color="#99272d"/><stop offset=".7032" stop-color="#991418"/><stop offset=".8068" stop-color="#99070c"/><stop offset=".8944" stop-color="#990004"/><stop offset="1" stop-color="#990000"/></linearGradient>
<linearGradient id="g163" gradientUnits="userSpaceOnUse" x1="1081" x2="1586" y1="0" y2="0"><stop offset="0" stop-color="#008f99"/><stop offset=".2812" stop-color="#008b99"/><stop offset=".3505" stop-color="#418999"/><stop offset=".4238" stop-color="#998699"/><stop offset=".4554" stop-color="#996675"/><stop offset=".4911" stop-color="#994e5a"/><stop offset=".5426" stop-color="#993641"/><stop offset=".604" stop-color="#99242c"/><stop offset=".7089" stop-color="#991117"/><stop offset=".8158" stop-color="#99050b"/><stop offset=".8812" stop-color="#990005"/><stop offset="1" stop-color="#990000"/></linearGradient>
<linearGradient id="g164" gradientUnits="userSpaceOnUse" x1="1082" x2="1588" y1="0" y2="0"><stop offset="0" stop-color="#008d99"/><stop offset=".2767" stop-color="#008899"/><stop offset=".3557" stop-color="#4a8599"/><stop offset=".4209" stop-color="#998399"/><stop offset=".4466" stop-color="#99687b"/><stop offset=".4862" stop-color="#994d5c"/><stop offset=".5296" stop-color="#993845"/><stop offset=".585" stop-color="#992731"/><stop offset=".6779" stop-color="#99141c"/><stop offset=".7826" stop-color="#99070e"/><stop offset=".8676" stop-color="#990006"/><stop offset="1" stop-color="#990000"/></linearGradient>
<linearGradient id="g165" gradientUnits="userSpaceOnUse" x1="1082" x2="1591" y1="0" y2="0"><stop offset="0" stop-color="#008b99"/><stop offset=".2731" stop-color="#008599"/><stop offset=".3143" stop-color="#238399"/><stop offset=".3595" stop-color="#518199"/><stop offset=".4185" stop-color="#997f99"/><stop offset=".4499" stop-color="#996176"/><stop offset=".4872" stop-color="#99485a"/><stop offset=".5324" stop-color="#993543"/><stop offset=".5835" stop-color="#992531"/><stop offset=".666" stop-color="#99141e"/><stop offset=".7917" stop-color="#99050d"/><stop offset=".8546" stop-color="#990007"/><stop offset="1" stop-color="#990000"/></linearGradient>
<linearGradient id="g166" gradientUnits="userSpaceOnUse" x1="1083" x2="1593" y1="0" y2="0"><stop offset="0" stop-color="#008899"/><stop offset=".2706" stop-color="#008199"/><stop offset=".349" stop-color="#497e99"/><stop offset=".4157" stop-color="#997b99"/><stop offset=".4412" stop-color="#99637c"/><stop offset=".4804" stop-color="#99485d"/><stop offset=".5216" stop-color="#993647"/><stop offset=".5863" stop-color="#992230"/><stop offset=".702" stop-color="#990e18"/><stop offset=".8275" stop-color="#99010a"/><stop offset="1" stop-color="#990000"/></linearGradient>
<linearGradient id="g167" gradientUnits="userSpaceOnUse" x1="1083" x2="1596" y1="0" y2="0"><stop offset="0" stop-color="#008699"/><stop offset=".2671" stop-color="#007e99"/><stop offset=".308" stop-color="#237d99"/><stop offset=".3567" stop-color="#547a99"/><stop offset=".4152" stop-color="#997597"/><stop offset=".4444" stop-color="#995b77"/><stop offset=".4834" stop-color="#99435a"/><stop offset=".5244" stop-color="#993245"/><stop offset=".5848" stop-color="#992030"/><stop offset=".6881" stop-color="#990e1a"/><stop offset=".8148" stop-color="#99010b"/><stop offset="1" stop-color="#990000"/></linearGradient>
<linearGradient id="g168" gradientUnits="userSpaceOnUse" x1="1084" x2="1598" y1="0" y2="0"><stop offset="0" stop-color="#008499"/><stop offset=".2626" stop-color="#007b99"/><stop offset=".3327" stop-color="#3e7899"/><stop offset=".4125" stop-color="#997298"/><stop offset=".4455" stop-color="#995674"/><stop offset=".4767" stop-color="#99435d"/><stop offset=".5253" stop-color="#992f44"/><stop offset=".5837" stop-color="#991f30"/><stop offset=".6946" stop-color="#990c19"/><stop offset=".8152" stop-color="#99000b"/><stop offset="1" stop-color="#990000"/></linearGradient>
<linearGradient id="g169" gradientUnits="userSpaceOnUse" x1="1084" x2="1601" y1="0" y2="0"><stop offset="0" stop-color="#008299"/><stop offset=".2611" stop-color="#007899"/><stop offset=".323" stop-color="#377599"/><stop offset=".3694" stop-color="#687299"/><stop offset=".4101" stop-color="#996e98"/><stop offset=".4391" stop-color="#995678"/><stop offset=".4797" stop-color="#993e5a"/><stop offset=".5416" stop-color="#99273d"/><stop offset=".6054" stop-color="#99182a"/><stop offset=".7002" stop-color="#990a18"/><stop offset=".8027" stop-color="#99000c"/><stop offset="1" stop-color="#990000"/></linearGradient>
<linearGradient id="g170" gradientUnits="userSpaceOnUse" x1="1085" x2="1603" y1="0" y2="0"><stop offset="0" stop-color="#007f99"/><stop offset=".2568" stop-color="#007699"/><stop offset=".3359" stop-color="#477199"/><stop offset=".4073" stop-color="#996b98"/><stop offset=".4402" stop-color="#995075"/><stop offset=".4865" stop-color="#993855"/><stop offset=".5347" stop-color="#99273f"/><stop offset=".6004" stop-color="#99182b"/><stop offset=".6873" stop-color="#990a1a"/><stop offset=".7896" stop-color="#99000d"/><stop offset="1" stop-color="#990000"/></linearGradient>
<linearGradient id="g171" gradientUnits="userSpaceOnUse" x1="1086" x2="1606" y1="0" y2="0"><stop offset="0" stop-color="#007d99"/><stop offset=".2519" stop-color="#007399"/><stop offset=".3212" stop-color="#3c6f99"/><stop offset=".3577" stop-color="#626c99"/><stop offset=".4038" stop-color="#996898"/><stop offset=".4327" stop-color="#995079"/><stop offset=".475" stop-color="#99395a"/><stop offset=".5173" stop-color="#992945"/><stop offset=".5904" stop-color="#99182d"/><stop offset=".6731" stop-color="#990b1c"/><stop offset=".7769" stop-color="#99000f"/><stop offset=".9096" stop-color="#990003"/><stop offset="1" stop-color="#990000"/></linearGradient>
<linearGradient id="g172" gradientUnits="userSpaceOnUse" x1="1086" x2="1608" y1="0" y2="0"><stop offset="0" stop-color="#007b99"/><stop offset=".251" stop-color="#007099"/><stop offset=".3333" stop-color="#4a6b99"/><stop offset=".4023" stop-color="#996599"/><stop offset=".4349" stop-color="#994b76"/><stop offset=".4847" stop-color="#993354"/><stop offset=".5345" stop-color="#99223e"/><stop offset=".6111" stop-color="#991228"/><stop offset=".7663" stop-color="#990010"/><stop offset=".8966" stop-color="#990004"/><stop offset="1" stop-color="#990000"/></linearGradient>
<linearGradient id="g173" gradientUnits="userSpaceOnUse" x1="1087" x2="1611" y1="0" y2="0"><stop offset="0" stop-color="#007999"/><stop offset=".2462" stop-color="#006d99"/><stop offset=".3206" stop-color="#416899"/><stop offset=".3607" stop-color="#6b6599"/><stop offset=".3989" stop-color="#996199"/><stop offset=".4332" stop-color="#994875"/><stop offset=".4714" stop-color="#99355a"/><stop offset=".5267" stop-color="#992240"/><stop offset=".605" stop-color="#991229"/><stop offset=".7519" stop-color="#990011"/><stop offset=".8969" stop-color="#990004"/><stop offset="1" stop-color="#990000"/></linearGradient>
<linearGradient id="g174" gradientUnits="userSpaceOnUse" x1="1087" x2="1613" y1="0" y2="0"><stop offset="0" stop-color="#007799"/><stop offset=".2433" stop-color="#006b99"/><stop offset=".327" stop-color="#496599"/><stop offset=".3973" stop-color="#995e99"/><stop offset=".424" stop-color="#994a7c"/><stop offset=".4639" stop-color="#99355e"/><stop offset=".5209" stop-color="#992242"/><stop offset=".6008" stop-color="#99112a"/><stop offset=".7414" stop-color="#990013"/><stop offset=".884" stop-color="#990005"/><stop offset="1" stop-color="#990000"/></linearGradient>
<linearGradient id="g175" gradientUnits="userSpaceOnUse" x1="1088" x2="1616" y1="0" y2="0"><stop offset="0" stop-color="#007599"/><stop offset=".2405" stop-color="#006899"/><stop offset=".3182" stop-color="#446299"/><stop offset=".3958" stop-color="#995a97"/><stop offset=".428" stop-color="#994376"/><stop offset=".4678" stop-color="#99305a"/><stop offset=".5265" stop-color="#991e3f"/><stop offset=".5985" stop-color="#990f2a"/><stop offset=".7273" stop-color="#990014"/><stop offset=".8845" stop-color="#990005"/><stop offset="1" stop-color="#990000"/></linearGradient>
<linearGradient id="g176" gradientUnits="userSpaceOnUse" x1="1088" x2="1618" y1="0" y2="0"><stop offset="0" stop-color="#007399"/><stop offset=".2377" stop-color="#006699"/><stop offset=".3226" stop-color="#4a5f99"/><stop offset=".3943" stop-color="#995797"/><stop offset=".4245" stop-color="#994278"/><stop offset=".4585" stop-color="#99315f"/><stop offset=".5208" stop-color="#991d41"/><stop offset=".5943" stop-color="#990f2b"/><stop offset=".717" stop-color="#990016"/><stop offset=".8717" stop-color="#990006"/><stop offset="1" stop-color="#990000"/></linearGradient>
<linearGradient id="g177" gradientUnits="userSpaceOnUse" x1="1089" x2="1621" y1="0" y2="0"><stop offset="0" stop-color="#007099"/><stop offset=".2331" stop-color="#006399"/><stop offset=".3139" stop-color="#455c99"/><stop offset=".391" stop-color="#995498"/><stop offset=".4192" stop-color="#99417a"/><stop offset=".4624" stop-color="#992d5b"/><stop offset=".5132" stop-color="#991d43"/><stop offset=".5883" stop-color="#990e2c"/><stop offset=".703" stop-color="#990018"/><stop offset=".8459" stop-color="#990008"/><stop offset="1" stop-color="#990000"/></linearGradient>
<linearGradient id="g178" gradientUnits="userSpaceOnUse" x1="1089" x2="1623" y1="0" y2="0"><stop offset="0" stop-color="#006e99"/><stop offset=".2322" stop-color="#006199"/><stop offset=".3071" stop-color="#405a99"/><stop offset=".3895" stop-color="#995198"/><stop offset=".4251" stop-color="#993a74"/><stop offset=".4551" stop-color="#992d5f"/><stop offset=".5075" stop-color="#991c45"/><stop offset=".588" stop-color="#990d2c"/><stop offset=".6929" stop-color="#990019"/><stop offset=".8352" stop-color="#990009"/><stop offset="1" stop-color="#990000"/></linearGradient>
<linearGradient id="g179" gradientUnits="userSpaceOnUse" x1="1090" x2="1623" y1="0" y2="0"><stop offset="0" stop-color="#006c99"/><stop offset=".2289" stop-color="#005e99"/><stop offset=".3021" stop-color="#3d5899"/><stop offset=".3884" stop-color="#994e98"/><stop offset=".4221" stop-color="#993976"/><stop offset=".4615" stop-color="#99285b"/><stop offset=".5103" stop-color="#991a44"/><stop offset=".5854" stop-color="#990c2d"/><stop offset=".6829" stop-color="#99001b"/><stop offset=".7561" stop-color="#990011"/><stop offset="1" stop-color="#990000"/></linearGradient>
<linearGradient id="g180" gradientUnits="userSpaceOnUse" x1="1091" x2="1621" y1="0" y2="0"><stop offset="0" stop-color="#006a99"/><stop offset=".2264" stop-color="#005c99"/><stop offset=".3151" stop-color="#4a5499"/><stop offset=".3887" stop-color="#994b99"/><stop offset=".4208" stop-color="#993878"/><stop offset=".4547" stop-color="#992960"/><stop offset=".5208" stop-color="#991741"/><stop offset=".5887" stop-color="#990b2d"/><stop offset=".6774" stop-color="#99001c"/><stop offset=".7528" stop-color="#990012"/><stop offset="1" stop-color="#990000"/></linearGradient>
<linearGradient id="g181" gradientUnits="userSpaceOnUse" x1="1091" x2="1615" y1="0" y2="0"><stop offset="0" stop-color="#006899"/><stop offset=".229" stop-color="#005a99"/><stop offset=".3225" stop-color="#4e5199"/><stop offset=".3931" stop-color="#994899"/><stop offset=".4275" stop-color="#993577"/><stop offset=".4676" stop-color="#99255c"/><stop offset=".5229" stop-color="#991643"/><stop offset=".5935" stop-color="#990a2e"/><stop offset=".6775" stop-color="#99001e"/><stop offset=".7653" stop-color="#990012"/><stop offset="1" stop-color="#990000"/></linearGradient>
<linearGradient id="g182" gradientUnits="userSpaceOnUse" x1="1092" x2="1610" y1="0" y2="0"><stop offset="0" stop-color="#006699"/><stop offset=".2278" stop-color="#005899"/><stop offset=".3205" stop-color="#4b4f99"/><stop offset=".3958" stop-color="#994699"/><stop offset=".4286" stop-color="#993379"/><stop offset=".4633" stop-color="#992661"/><stop offset=".5232" stop-color="#991645"/><stop offset=".6004" stop-color="#99092e"/><stop offset=".6737" stop-color="#990020"/><stop offset=".7761" stop-color="#990012"/><stop offset="1" stop-color="#990001"/></linearGradient>
<linearGradient id="g183" gradientUnits="userSpaceOnUse" x1="1092" x2="1605" y1="0" y2="0"><stop offset="0" stop-color="#006599"/><stop offset=".2281" stop-color="#005599"/><stop offset=".3119" stop-color="#414d99"/><stop offset=".3509" stop-color="#654999"/><stop offset=".3996" stop-color="#994399"/><stop offset=".4308" stop-color="#99327b"/><stop offset=".4776" stop-color="#99215c"/><stop offset=".5322" stop-color="#991444"/><stop offset=".6043" stop-color="#99082f"/><stop offset=".6725" stop-color="#990022"/><stop offset=".7602" stop-color="#990015"/><stop offset="1" stop-color="#990002"/></linearGradient>
<linearGradient id="g184" gradientUnits="userSpaceOnUse" x1="1093" x2="1599" y1="0" y2="0"><stop offset="0" stop-color="#006399"/><stop offset=".2292" stop-color="#005399"/><stop offset=".3241" stop-color="#4a4a99"/><stop offset=".4051" stop-color="#993f97"/><stop offset=".4486" stop-color="#992b71"/><stop offset=".504" stop-color="#991a52"/><stop offset=".6126" stop-color="#99072f"/><stop offset=".67" stop-color="#990024"/><stop offset=".7727" stop-color="#990015"/><stop offset="1" stop-color="#990003"/></linearGradient>
<linearGradient id="g185" gradientUnits="userSpaceOnUse" x1="1094" x2="1594" y1="0" y2="0"><stop offset="0" stop-color="#006199"/><stop offset=".228" stop-color="#005199"/><stop offset=".322" stop-color="#474899"/><stop offset=".408" stop-color="#993d98"/><stop offset=".434" stop-color="#99307f"/><stop offset=".486" stop-color="#991e5d"/><stop offset=".542" stop-color="#991145"/><stop offset=".592" stop-color="#990936"/><stop offset=".668" stop-color="#990026"/><stop offset=".766" stop-color="#990017"/><stop offset="1" stop-color="#990004"/></linearGradient>
<linearGradient id="g186" gradientUnits="userSpaceOnUse" x1="1094" x2="1589" y1="0" y2="0"><stop offset="0" stop-color="#005f99"/><stop offset=".2283" stop-color="#004f99"/><stop offset=".3212" stop-color="#444699"/><stop offset=".4121" stop-color="#993a98"/><stop offset=".4465" stop-color="#992a79"/><stop offset=".4788" stop-color="#992064"/><stop offset=".5354" stop-color="#99124a"/><stop offset=".5919" stop-color="#990938"/><stop offset=".6646" stop-color="#990028"/><stop offset=".7455" stop-color="#99001b"/><stop offset="1" stop-color="#990005"/></linearGradient>
<linearGradient id="g187" gradientUnits="userSpaceOnUse" x1="1095" x2="1583" y1="0" y2="0"><stop offset="0" stop-color="#005d99"/><stop offset=".2275" stop-color="#004d99"/><stop offset=".3156" stop-color="#3e4499"/><stop offset=".416" stop-color="#993898"/><stop offset=".4529" stop-color="#992878"/><stop offset=".4939" stop-color="#991b5f"/><stop offset=".5369" stop-color="#99124c"/><stop offset=".5963" stop-color="#990839"/><stop offset=".6639" stop-color="#99002a"/><stop offset=".75" stop-color="#99001c"/><stop offset="1" stop-color="#990006"/></linearGradient>
<linearGradient id="g188" gradientUnits="userSpaceOnUse" x1="1095" x2="1578" y1="0" y2="0"><stop offset="0" stop-color="#005b99"/><stop offset=".2298" stop-color="#004b99"/><stop offset=".3271" stop-color="#454199"/><stop offset=".4203" stop-color="#993598"/><stop offset=".4513" stop-color="#99287d"/><stop offset=".4886" stop-color="#991c65"/><stop offset=".5383" stop-color="#99114e"/><stop offset=".6004" stop-color="#99073a"/><stop offset=".6605" stop-color="#99002d"/><stop offset=".7764" stop-color="#99001a"/><stop offset="1" stop-color="#990007"/></linearGradient>
<linearGradient id="g189" gradientUnits="userSpaceOnUse" x1="1096" x2="1573" y1="0" y2="0"><stop offset="0" stop-color="#005999"/><stop offset=".2285" stop-color="#004999"/><stop offset=".3208" stop-color="#3f4099"/><stop offset=".3711" stop-color="#683a99"/><stop offset=".4235" stop-color="#993399"/><stop offset=".4528" stop-color="#99277f"/><stop offset=".501" stop-color="#991961"/><stop offset=".5472" stop-color="#990f4d"/><stop offset=".608" stop-color="#99063a"/><stop offset=".6583" stop-color="#99002f"/><stop offset=".7715" stop-color="#99001c"/><stop offset="1" stop-color="#990008"/></linearGradient>
<linearGradient id="g190" gradientUnits="userSpaceOnUse" x1="1097" x2="1567" y1="0" y2="0"><stop offset="0" stop-color="#005799"/><stop offset=".2277" stop-color="#004799"/><stop offset=".3255" stop-color="#413d99"/><stop offset=".4277" stop-color="#993099"/><stop offset=".4553" stop-color="#992681"/><stop offset=".4957" stop-color="#991a67"/><stop offset=".5489" stop-color="#990e4f"/><stop offset=".6128" stop-color="#99053b"/><stop offset=".6574" stop-color="#990031"/><stop offset=".7766" stop-color="#99001d"/><stop offset="1" stop-color="#990009"/></linearGradient>
<linearGradient id="g191" gradientUnits="userSpaceOnUse" x1="1097" x2="1562" y1="0" y2="0"><stop offset="0" stop-color="#005599"/><stop offset=".2301" stop-color="#004599"/><stop offset=".3376" stop-color="#483a99"/><stop offset=".4323" stop-color="#992e99"/><stop offset=".4645" stop-color="#99227e"/><stop offset=".5097" stop-color="#991663"/><stop offset=".5591" stop-color="#990c4e"/><stop offset=".6172" stop-color="#99043c"/><stop offset=".6538" stop-color="#990034"/><stop offset=".7957" stop-color="#99001c"/><stop offset="1" stop-color="#99000a"/></linearGradient>
<linearGradient id="g192" gradientUnits="userSpaceOnUse" x1="1098" x2="1557" y1="0" y2="0"><stop offset="0" stop-color="#005499"/><stop offset=".2288" stop-color="#004399"/><stop offset=".342" stop-color="#4a3899"/><stop offset=".4357" stop-color="#992c99"/><stop offset=".4662" stop-color="#992180"/><stop offset=".5054" stop-color="#991668"/><stop offset=".5599" stop-color="#990c50"/><stop offset=".6253" stop-color="#99033c"/><stop offset=".7996" stop-color="#99001d"/><stop offset="1" stop-color="#99000b"/></linearGradient>
<linearGradient id="g193" gradientUnits="userSpaceOnUse" x1="1099" x2="1551" y1="0" y2="0"><stop offset="0" stop-color="#005299"/><stop offset=".2279" stop-color="#004199"/><stop offset=".3363" stop-color="#443799"/><stop offset=".4425" stop-color="#992998"/><stop offset=".469" stop-color="#992082"/><stop offset=".5177" stop-color="#991365"/><stop offset=".5708" stop-color="#990a4f"/><stop offset=".6305" stop-color="#99023d"/><stop offset=".7965" stop-color="#99001f"/><stop offset="1" stop-color="#99000c"/></linearGradient>
<linearGradient id="g194" gradientUnits="userSpaceOnUse" x1="1099" x2="1546" y1="0" y2="0"><stop offset="0" stop-color="#005099"/><stop offset=".2304" stop-color="#003f99"/><stop offset=".3423" stop-color="#463499"/><stop offset=".4474" stop-color="#992798"/><stop offset=".472" stop-color="#991e84"/><stop offset=".5145" stop-color="#99146a"/><stop offset=".5727" stop-color="#990951"/><stop offset=".6353" stop-color="#99023e"/><stop offset=".7785" stop-color="#990023"/><stop offset="1" stop-color="#99000d"/></linearGradient>
<linearGradient id="g195" gradientUnits="userSpaceOnUse" x1="1100" x2="1541" y1="0" y2="0"><stop offset="0" stop-color="#004e99"/><stop offset=".229" stop-color="#003e99"/><stop offset=".3469" stop-color="#483299"/><stop offset=".4512" stop-color="#992498"/><stop offset=".4853" stop-color="#991a7e"/><stop offset=".5261" stop-color="#991167"/><stop offset=".5737" stop-color="#990953"/><stop offset=".644" stop-color="#99003e"/><stop offset=".805" stop-color="#990021"/><stop offset="1" stop-color="#99000f"/></linearGradient>
<linearGradient id="g196" gradientUnits="userSpaceOnUse" x1="1101" x2="1535" y1="0" y2="0"><stop offset="0" stop-color="#004c99"/><stop offset=".2281" stop-color="#003c99"/><stop offset=".3525" stop-color="#4a3099"/><stop offset=".4562" stop-color="#992298"/><stop offset=".523" stop-color="#99116c"/><stop offset=".5737" stop-color="#990856"/><stop offset=".6498" stop-color="#99003f"/><stop offset=".8111" stop-color="#990022"/><stop offset="1" stop-color="#990010"/></linearGradient>
<linearGradient id="g197" gradientUnits="userSpaceOnUse" x1="1101" x2="1530" y1="0" y2="0"><stop offset="0" stop-color="#004b99"/><stop offset=".2308" stop-color="#003a99"/><stop offset=".3636" stop-color="#4f2d99"/><stop offset=".4615" stop-color="#992099"/><stop offset=".4825" stop-color="#991a88"/><stop offset=".5361" stop-color="#990e69"/><stop offset=".5874" stop-color="#990654"/><stop offset=".655" stop-color="#990040"/><stop offset=".8159" stop-color="#990023"/><stop offset="1" stop-color="#990011"/></linearGradient>
<linearGradient id="g198" gradientUnits="userSpaceOnUse" x1="1102" x2="1525" y1="0" y2="0"><stop offset="0" stop-color="#004999"/><stop offset=".2293" stop-color="#003899"/><stop offset=".3688" stop-color="#512a99"/><stop offset=".4657" stop-color="#991e99"/><stop offset=".4965" stop-color="#991682"/><stop offset=".5508" stop-color="#990b65"/><stop offset=".6596" stop-color="#990041"/><stop offset=".8132" stop-color="#990025"/><stop offset="1" stop-color="#990012"/></linearGradient>
<linearGradient id="g199" gradientUnits="userSpaceOnUse" x1="1103" x2="1519" y1="0" y2="0"><stop offset="0" stop-color="#004799"/><stop offset=".2284" stop-color="#003799"/><stop offset=".3582" stop-color="#482a99"/><stop offset=".4712" stop-color="#991c99"/><stop offset=".5433" stop-color="#990c6c"/><stop offset=".6466" stop-color="#990047"/><stop offset=".8125" stop-color="#990027"/><stop offset="1" stop-color="#990014"/></linearGradient>
<linearGradient id="g200" gradientUnits="userSpaceOnUse" x1="1103" x2="1514" y1="0" y2="0"><stop offset="0" stop-color="#004699"/><stop offset=".2311" stop-color="#003599"/><stop offset=".3698" stop-color="#4d2799"/><stop offset=".4769" stop-color="#991a99"/><stop offset=".5182" stop-color="#99107d"/><stop offset=".5596" stop-color="#990968"/><stop offset=".6277" stop-color="#990050"/><stop offset=".6642" stop-color="#990045"/><stop offset=".7908" stop-color="#99002c"/><stop offset="1" stop-color="#990015"/></linearGradient>
<linearGradient id="g201" gradientUnits="userSpaceOnUse" x1="1104" x2="1509" y1="0" y2="0"><stop offset="0" stop-color="#004499"/><stop offset=".2296" stop-color="#003399"/><stop offset=".3753" stop-color="#4f2599"/><stop offset=".4815" stop-color="#991899"/><stop offset=".5531" stop-color="#990a6e"/><stop offset=".6247" stop-color="#990053"/><stop offset=".6691" stop-color="#990046"/><stop offset=".8099" stop-color="#99002b"/><stop offset="1" stop-color="#990017"/></linearGradient>
<linearGradient id="g202" gradientUnits="userSpaceOnUse" x1="1105" x2="1503" y1="0" y2="0"><stop offset="0" stop-color="#004299"/><stop offset=".2286" stop-color="#003299"/><stop offset=".3467" stop-color="#3c2799"/><stop offset=".4899" stop-color="#991598"/><stop offset=".5276" stop-color="#990d7f"/><stop offset=".5678" stop-color="#99076b"/><stop offset=".6206" stop-color="#990057"/><stop offset=".6683" stop-color="#990049"/><stop offset=".8241" stop-color="#99002b"/><stop offset="1" stop-color="#990018"/></linearGradient>
<linearGradient id="g203" gradientUnits="userSpaceOnUse" x1="1106" x2="1498" y1="0" y2="0"><stop offset="0" stop-color="#004199"/><stop offset=".2296" stop-color="#003099"/><stop offset=".3801" stop-color="#4e2299"/><stop offset=".4949" stop-color="#991398"/><stop offset=".5638" stop-color="#990770"/><stop offset=".6173" stop-color="#99005b"/><stop offset=".6939" stop-color="#990045"/><stop offset=".8444" stop-color="#99002a"/><stop offset="1" stop-color="#99001a"/></linearGradient>
<linearGradient id="g204" gradientUnits="userSpaceOnUse" x1="1106" x2="1493" y1="0" y2="0"><stop offset="0" stop-color="#003f99"/><stop offset=".23" stop-color="#002f99"/><stop offset=".3721" stop-color="#472199"/><stop offset=".5013" stop-color="#991298"/><stop offset=".5762" stop-color="#99056e"/><stop offset=".6124" stop-color="#990060"/><stop offset=".6925" stop-color="#990048"/><stop offset=".8165" stop-color="#990030"/><stop offset="1" stop-color="#99001b"/></linearGradient>
<linearGradient id="g205" gradientUnits="userSpaceOnUse" x1="1107" x2="1487" y1="0" y2="0"><stop offset="0" stop-color="#003d99"/><stop offset=".2289" stop-color="#002d99"/><stop offset=".3737" stop-color="#462099"/><stop offset=".5079" stop-color="#991098"/><stop offset=".5474" stop-color="#990980"/><stop offset=".5947" stop-color="#99026a"/><stop offset=".7" stop-color="#990049"/><stop offset=".8316" stop-color="#990030"/><stop offset="1" stop-color="#99001d"/></linearGradient>
<linearGradient id="g206" gradientUnits="userSpaceOnUse" x1="1108" x2="1482" y1="0" y2="0"><stop offset="0" stop-color="#003c99"/><stop offset=".2273" stop-color="#002c99"/><stop offset=".3743" stop-color="#451e99"/><stop offset=".5134" stop-color="#990e99"/><stop offset=".5882" stop-color="#990270"/><stop offset=".6791" stop-color="#990051"/><stop offset=".8316" stop-color="#990032"/><stop offset="1" stop-color="#99001e"/></linearGradient>
<linearGradient id="g207" gradientUnits="userSpaceOnUse" x1="1109" x2="1477" y1="0" y2="0"><stop offset="0" stop-color="#003a99"/><stop offset=".2283" stop-color="#002a99"/><stop offset=".3886" stop-color="#4b1b99"/><stop offset=".519" stop-color="#990c99"/><stop offset=".6005" stop-color="#99006e"/><stop offset=".6929" stop-color="#990050"/><stop offset=".8451" stop-color="#990032"/><stop offset="1" stop-color="#990020"/></linearGradient>
<linearGradient id="g208" gradientUnits="userSpaceOnUse" x1="1109" x2="1471" y1="0" y2="0"><stop offset="0" stop-color="#003999"/><stop offset=".2293" stop-color="#002999"/><stop offset=".3923" stop-color="#4a1a99"/><stop offset=".5276" stop-color="#990a99"/><stop offset=".5994" stop-color="#990073"/><stop offset=".7099" stop-color="#99004f"/><stop offset=".8232" stop-color="#990038"/><stop offset="1" stop-color="#990022"/></linearGradient>
<linearGradient id="g209" gradientUnits="userSpaceOnUse" x1="1110" x2="1466" y1="0" y2="0"><stop offset="0" stop-color="#003799"/><stop offset=".2275" stop-color="#002799"/><stop offset=".4073" stop-color="#501799"/><stop offset=".5337" stop-color="#990899"/><stop offset=".6124" stop-color="#990071"/><stop offset=".7247" stop-color="#99004e"/><stop offset=".8567" stop-color="#990035"/><stop offset="1" stop-color="#990024"/></linearGradient>
<linearGradient id="g210" gradientUnits="userSpaceOnUse" x1="1111" x2="1461" y1="0" y2="0"><stop offset="0" stop-color="#003599"/><stop offset=".2286" stop-color="#002699"/><stop offset=".3886" stop-color="#451899"/><stop offset=".5429" stop-color="#990698"/><stop offset=".6086" stop-color="#990076"/><stop offset=".72" stop-color="#990052"/><stop offset=".8571" stop-color="#990037"/><stop offset="1" stop-color="#990026"/></linearGradient>
<linearGradient id="g211" gradientUnits="userSpaceOnUse" x1="1112" x2="1455" y1="0" y2="0"><stop offset="0" stop-color="#003499"/><stop offset=".2274" stop-color="#002499"/><stop offset=".3907" stop-color="#441699"/><stop offset=".551" stop-color="#990598"/><stop offset=".6239" stop-color="#990074"/><stop offset=".7289" stop-color="#990053"/><stop offset=".8426" stop-color="#99003c"/><stop offset="1" stop-color="#990028"/></linearGradient>
<linearGradient id="g212" gradientUnits="userSpaceOnUse" x1="1113" x2="1450" y1="0" y2="0"><stop offset="0" stop-color="#003299"/><stop offset=".2255" stop-color="#002399"/><stop offset=".3828" stop-color="#3f1699"/><stop offset=".5579" stop-color="#990398"/><stop offset=".6409" stop-color="#990071"/><stop offset=".7448" stop-color="#990052"/><stop offset=".8635" stop-color="#99003b"/><stop offset="1" stop-color="#99002a"/></linearGradient>
<linearGradient id="g213" gradientUnits="userSpaceOnUse" x1="1114" x2="1445" y1="0" y2="0"><stop offset="0" stop-color="#003199"/><stop offset=".2266" stop-color="#002299"/><stop offset=".4169" stop-color="#4d1199"/><stop offset=".565" stop-color="#990198"/><stop offset=".6616" stop-color="#99006d"/><stop offset=".7613" stop-color="#990051"/><stop offset=".8852" stop-color="#99003a"/><stop offset="1" stop-color="#99002c"/></linearGradient>
<linearGradient id="g214" gradientUnits="userSpaceOnUse" x1="1114" x2="1439" y1="0" y2="0"><stop offset="0" stop-color="#002f99"/><stop offset=".2277" stop-color="#002099"/><stop offset=".4215" stop-color="#4c1099"/><stop offset=".5754" stop-color="#990099"/><stop offset=".6523" stop-color="#990075"/><stop offset=".7477" stop-color="#990058"/><stop offset=".8369" stop-color="#990045"/><stop offset="1" stop-color="#99002e"/></linearGradient>
<linearGradient id="g215" gradientUnits="userSpaceOnUse" x1="1115" x2="1434" y1="0" y2="0"><stop offset="0" stop-color="#002e99"/><stop offset=".2257" stop-color="#001f99"/><stop offset=".4232" stop-color="#4b0f99"/><stop offset=".5831" stop-color="#990099"/><stop offset=".6708" stop-color="#990072"/><stop offset=".7524" stop-color="#99005a"/><stop offset=".8464" stop-color="#990046"/><stop offset="1" stop-color="#990030"/></linearGradient>
<linearGradient id="g216" gradientUnits="userSpaceOnUse" x1="1116" x2="1429" y1="0" y2="0"><stop offset="0" stop-color="#002c99"/><stop offset=".2268" stop-color="#001e99"/><stop offset=".4345" stop-color="#4e0d99"/><stop offset=".5911" stop-color="#990099"/><stop offset=".6645" stop-color="#990078"/><stop offset=".7732" stop-color="#990058"/><stop offset=".885" stop-color="#990042"/><stop offset="1" stop-color="#990033"/></linearGradient>
<linearGradient id="g217" gradientUnits="userSpaceOnUse" x1="1117" x2="1424" y1="0" y2="0"><stop offset="0" stop-color="#002b99"/><stop offset=".2248" stop-color="#001c99"/><stop offset=".4072" stop-color="#410e99"/><stop offset=".5472" stop-color="#7f0099"/><stop offset=".5993" stop-color="#990099"/><stop offset=".6645" stop-color="#99007c"/><stop offset=".7622" stop-color="#99005e"/><stop offset=".8893" stop-color="#990044"/><stop offset="1" stop-color="#990035"/></linearGradient>
<linearGradient id="g218" gradientUnits="userSpaceOnUse" x1="1118" x2="1418" y1="0" y2="0"><stop offset="0" stop-color="#002999"/><stop offset=".2233" stop-color="#001b99"/><stop offset=".42" stop-color="#440c99"/><stop offset=".5433" stop-color="#790099"/><stop offset=".61" stop-color="#990099"/><stop offset=".6833" stop-color="#99007a"/><stop offset=".77" stop-color="#990060"/><stop offset=".88" stop-color="#990049"/><stop offset="1" stop-color="#990038"/></linearGradient>
<linearGradient id="g219" gradientUnits="userSpaceOnUse" x1="1119" x2="1413" y1="0" y2="0"><stop offset="0" stop-color="#002899"/><stop offset=".2245" stop-color="#001a99"/><stop offset=".432" stop-color="#470a99"/><stop offset=".534" stop-color="#710099"/><stop offset=".619" stop-color="#980099"/><stop offset=".6973" stop-color="#990079"/><stop offset=".7755" stop-color="#990062"/><stop offset=".8844" stop-color="#99004b"/><stop offset="1" stop-color="#99003a"/></linearGradient>
<linearGradient id="g220" gradientUnits="userSpaceOnUse" x1="1120" x2="1408" y1="0" y2="0"><stop offset="0" stop-color="#002699"/><stop offset=".2222" stop-color="#001999"/><stop offset=".434" stop-color="#460999"/><stop offset=".5278" stop-color="#6b0099"/><stop offset=".6285" stop-color="#980099"/><stop offset=".6979" stop-color="#99007d"/><stop offset=".7778" stop-color="#990065"/><stop offset=".8958" stop-color="#99004c"/><stop offset="1" stop-color="#99003d"/></linearGradient>
<linearGradient id="g221" gradientUnits="userSpaceOnUse" x1="1121" x2="1402" y1="0" y2="0"><stop offset="0" stop-color="#002599"/><stop offset=".2206" stop-color="#001899"/><stop offset=".4484" stop-color="#490799"/><stop offset=".5196" stop-color="#640099"/><stop offset=".6406" stop-color="#980099"/><stop offset=".7153" stop-color="#99007c"/><stop offset=".8114" stop-color="#990061"/><stop offset="1" stop-color="#990040"/></linearGradient>
<linearGradient id="g222" gradientUnits="userSpaceOnUse" x1="1122" x2="1397" y1="0" y2="0"><stop offset="0" stop-color="#002399"/><stop offset=".2218" stop-color="#001699"/><stop offset=".4509" stop-color="#480699"/><stop offset=".5127" stop-color="#5f0099"/><stop offset=".6509" stop-color="#980099"/><stop offset=".7345" stop-color="#99007a"/><stop offset=".8145" stop-color="#990064"/><stop offset="1" stop-color="#990043"/></linearGradient>
<linearGradient id="g223" gradientUnits="userSpaceOnUse" x1="1122" x2="1392" y1="0" y2="0"><stop offset="0" stop-color="#002299"/><stop offset=".2222" stop-color="#001599"/><stop offset=".4556" stop-color="#470499"/><stop offset=".5037" stop-color="#580099"/><stop offset=".6667" stop-color="#990099"/><stop offset=".7333" stop-color="#99007f"/><stop offset=".8185" stop-color="#990067"/><stop offset="1" stop-color="#990046"/></linearGradient>
<linearGradient id="g224" gradientUnits="userSpaceOnUse" x1="1123" x2="1386" y1="0" y2="0"><stop offset="0" stop-color="#002099"/><stop offset=".2205" stop-color="#001499"/><stop offset=".4715" stop-color="#4a0299"/><stop offset=".6806" stop-color="#990099"/><stop offset=".7376" stop-color="#990083"/><stop offset=".8251" stop-color="#99006a"/><stop offset="1" stop-color="#990049"/></linearGradient>
<linearGradient id="g225" gradientUnits="userSpaceOnUse" x1="1124" x2="1381" y1="0" y2="0"><stop offset="0" stop-color="#001f99"/><stop offset=".2179" stop-color="#001399"/><stop offset=".4747" stop-color="#490199"/><stop offset=".6926" stop-color="#990099"/><stop offset=".7743" stop-color="#99007c"/><stop offset=".8638" stop-color="#990065"/><stop offset="1" stop-color="#99004d"/></linearGradient>
<linearGradient id="g226" gradientUnits="userSpaceOnUse" x1="1125" x2="1376" y1="0" y2="0"><stop offset="0" stop-color="#001d99"/><stop offset=".2191" stop-color="#001299"/><stop offset=".4781" stop-color="#480099"/><stop offset=".7052" stop-color="#990099"/><stop offset=".7968" stop-color="#99007a"/><stop offset=".8685" stop-color="#990068"/><stop offset="1" stop-color="#990050"/></linearGradient>
<linearGradient id="g227" gradientUnits="userSpaceOnUse" x1="1126" x2="1370" y1="0" y2="0"><stop offset="0" stop-color="#001c99"/><stop offset=".2172" stop-color="#001199"/><stop offset=".4631" stop-color="#410199"/><stop offset=".6107" stop-color="#700099"/><stop offset=".7213" stop-color="#990099"/><stop offset=".8279" stop-color="#990077"/><stop offset="1" stop-color="#990054"/></linearGradient>
<linearGradient id="g228" gradientUnits="userSpaceOnUse" x1="1127" x2="1365" y1="0" y2="0"><stop offset="0" stop-color="#001b99"/><stop offset=".2143" stop-color="#001099"/><stop offset=".2353" stop-color="#040e99"/><stop offset=".4832" stop-color="#450099"/><stop offset=".7353" stop-color="#980099"/><stop offset=".8193" stop-color="#99007e"/><stop offset="1" stop-color="#990058"/></linearGradient>
<linearGradient id="g229" gradientUnits="userSpaceOnUse" x1="1128" x2="1360" y1="0" y2="0"><stop offset="0" stop-color="#001999"/><stop offset=".2155" stop-color="#000e99"/><stop offset=".5043" stop-color="#490099"/><stop offset=".75" stop-color="#980099"/><stop offset=".8448" stop-color="#99007c"/><stop offset="1" stop-color="#99005c"/></linearGradient>
<linearGradient id="g230" gradientUnits="userSpaceOnUse" x1="1129" x2="1354" y1="0" y2="0"><stop offset="0" stop-color="#001899"/><stop offset=".2133" stop-color="#000d99"/><stop offset=".4889" stop-color="#420099"/><stop offset=".7689" stop-color="#980099"/><stop offset=".88" stop-color="#990079"/><stop offset="1" stop-color="#990061"/></linearGradient>
<linearGradient id="g231" gradientUnits="userSpaceOnUse" x1="1130" x2="1349" y1="0" y2="0"><stop offset="0" stop-color="#001699"/><stop offset=".2283" stop-color="#030b99"/><stop offset=".4201" stop-color="#2f0099"/><stop offset=".5342" stop-color="#4c0099"/><stop offset=".79" stop-color="#990099"/><stop offset=".8721" stop-color="#990080"/><stop offset="1" stop-color="#990065"/></linearGradient>
<linearGradient id="g232" gradientUnits="userSpaceOnUse" x1="1131" x2="1344" y1="0" y2="0"><stop offset="0" stop-color="#001599"/><stop offset=".2113" stop-color="#000b99"/><stop offset=".4085" stop-color="#2b0099"/><stop offset=".5587" stop-color="#500099"/><stop offset=".8075" stop-color="#990099"/><stop offset=".9014" stop-color="#99007e"/><stop offset="1" stop-color="#99006a"/></linearGradient>
<linearGradient id="g233" gradientUnits="userSpaceOnUse" x1="1132" x2="1338" y1="0" y2="0"><stop offset="0" stop-color="#001499"/><stop offset=".2087" stop-color="#000a99"/><stop offset=".3932" stop-color="#260099"/><stop offset=".5194" stop-color="#430099"/><stop offset=".8301" stop-color="#990099"/><stop offset="1" stop-color="#99006f"/></linearGradient>
<linearGradient id="g234" gradientUnits="userSpaceOnUse" x1="1133" x2="1333" y1="0" y2="0"><stop offset="0" stop-color="#001299"/><stop offset=".225" stop-color="#030899"/><stop offset=".38" stop-color="#220099"/><stop offset=".52" stop-color="#410099"/><stop offset=".715" stop-color="#720099"/><stop offset=".85" stop-color="#990099"/><stop offset="1" stop-color="#990074"/></linearGradient>
<linearGradient id="g235" gradientUnits="userSpaceOnUse" x1="1134" x2="1328" y1="0" y2="0"><stop offset="0" stop-color="#001199"/><stop offset=".2062" stop-color="#000899"/><stop offset=".3608" stop-color="#1e0099"/><stop offset=".5773" stop-color="#4c0099"/><stop offset=".8711" stop-color="#990099"/><stop offset="1" stop-color="#99007a"/></linearGradient>
<linearGradient id="g236" gradientUnits="userSpaceOnUse" x1="1135" x2="1322" y1="0" y2="0"><stop offset="0" stop-color="#001099"/><stop offset=".2032" stop-color="#000799"/><stop offset=".3476" stop-color="#1a0099"/><stop offset=".5561" stop-color="#440099"/><stop offset=".8984" stop-color="#990099"/><stop offset="1" stop-color="#990081"/></linearGradient>
<linearGradient id="g237" gradientUnits="userSpaceOnUse" x1="1137" x2="1317" y1="0" y2="0"><stop offset="0" stop-color="#000e99"/><stop offset=".2167" stop-color="#030599"/><stop offset=".3222" stop-color="#160099"/><stop offset=".5889" stop-color="#490099"/><stop offset=".9222" stop-color="#980099"/><stop offset="1" stop-color="#990087"/></linearGradient>
<linearGradient id="g238" gradientUnits="userSpaceOnUse" x1="1138" x2="1312" y1="0" y2="0"><stop offset="0" stop-color="#000d99"/><stop offset=".1954" stop-color="#000599"/><stop offset=".3046" stop-color="#120099"/><stop offset=".592" stop-color="#470099"/><stop offset=".9483" stop-color="#980099"/><stop offset="1" stop-color="#99008d"/></linearGradient>
<linearGradient id="g239" gradientUnits="userSpaceOnUse" x1="1139" x2="1306" y1="0" y2="0"><stop offset="0" stop-color="#000b99"/><stop offset=".1916" stop-color="#000499"/><stop offset=".2395" stop-color="#070299"/><stop offset=".5988" stop-color="#450099"/><stop offset=".976" stop-color="#970099"/><stop offset="1" stop-color="#990096"/></linearGradient>
<linearGradient id="g240" gradientUnits="userSpaceOnUse" x1="1140" x2="1301" y1="0" y2="0"><stop offset="0" stop-color="#000a99"/><stop offset=".2112" stop-color="#030299"/><stop offset=".646" stop-color="#4b0099"/><stop offset="1" stop-color="#950099"/></linearGradient>
<linearGradient id="g241" gradientUnits="userSpaceOnUse" x1="1141" x2="1296" y1="0" y2="0"><stop offset="0" stop-color="#000999"/><stop offset=".1871" stop-color="#000299"/><stop offset=".6516" stop-color="#490099"/><stop offset="1" stop-color="#8e0099"/></linearGradient>
<linearGradient id="g242" gradientUnits="userSpaceOnUse" x1="1143" x2="1290" y1="0" y2="0"><stop offset="0" stop-color="#000799"/><stop offset=".1769" stop-color="#000199"/><stop offset=".2245" stop-color="#060099"/><stop offset=".5986" stop-color="#3d0099"/><stop offset="1" stop-color="#850099"/></linearGradient>
<linearGradient id="g243" gradientUnits="userSpaceOnUse" x1="1144" x2="1285" y1="0" y2="0"><stop offset="0" stop-color="#000699"/><stop offset=".1986" stop-color="#030099"/><stop offset=".6596" stop-color="#440099"/><stop offset="1" stop-color="#7f0099"/></linearGradient>
<linearGradient id="g244" gradientUnits="userSpaceOnUse" x1="1145" x2="1280" y1="0" y2="0"><stop offset="0" stop-color="#000599"/><stop offset=".1778" stop-color="#010099"/><stop offset=".6593" stop-color="#410099"/><stop offset="1" stop-color="#780099"/></linearGradient>
<linearGradient id="g245" gradientUnits="userSpaceOnUse" x1="1147" x2="1274" y1="0" y2="0"><stop offset="0" stop-color="#000399"/><stop offset=".1575" stop-color="#000099"/><stop offset=".2126" stop-color="#060099"/><stop offset=".6535" stop-color="#3d0099"/><stop offset="1" stop-color="#710099"/></linearGradient>
<linearGradient id="g246" gradientUnits="userSpaceOnUse" x1="1148" x2="1269" y1="0" y2="0"><stop offset="0" stop-color="#000299"/><stop offset=".1818" stop-color="#030099"/><stop offset=".6364" stop-color="#380099"/><stop offset="1" stop-color="#6a0099"/></linearGradient>
<linearGradient id="g247" gradientUnits="userSpaceOnUse" x1="1150" x2="1264" y1="0" y2="0"><stop offset="0" stop-color="#000099"/><stop offset=".1316" stop-color="#000099"/><stop offset=".2193" stop-color="#080099"/><stop offset=".7456" stop-color="#430099"/><stop offset="1" stop-color="#650099"/></linearGradient>
<linearGradient id="g248" gradientUnits="userSpaceOnUse" x1="1151" x2="1258" y1="0" y2="0"><stop offset="0" stop-color="#000099"/><stop offset=".1308" stop-color="#000099"/><stop offset=".1869" stop-color="#050099"/><stop offset=".7383" stop-color="#3e0099"/><stop offset="1" stop-color="#5e0099"/></linearGradient>
<linearGradient id="g249" gradientUnits="userSpaceOnUse" x1="1153" x2="1253" y1="0" y2="0"><stop offset="0" stop-color="#000099"/><stop offset=".11" stop-color="#000099"/><stop offset=".23" stop-color="#0a0099"/><stop offset="1" stop-color="#580099"/></linearGradient>
<linearGradient id="g250" gradientUnits="userSpaceOnUse" x1="1155" x2="1248" y1="0" y2="0"><stop offset="0" stop-color="#000099"/><stop offset=".1075" stop-color="#010099"/><stop offset=".2796" stop-color="#0f0099"/><stop offset="1" stop-color="#530099"/></linearGradient>
<linearGradient id="g251" gradientUnits="userSpaceOnUse" x1="1156" x2="1242" y1="0" y2="0"><stop offset="0" stop-color="#000099"/><stop offset=".0814" stop-color="#000099"/><stop offset=".2442" stop-color="#0c0099"/><stop offset="1" stop-color="#4c0099"/></linearGradient>
<linearGradient id="g252" gradientUnits="userSpaceOnUse" x1="1158" x2="1237" y1="0" y2="0"><stop offset="0" stop-color="#000099"/><stop offset=".3038" stop-color="#110099"/><stop offset="1" stop-color="#470099"/></linearGradient>
<linearGradient id="g253" gradientUnits="userSpaceOnUse" x1="1161" x2="1232" y1="0" y2="0"><stop offset="0" stop-color="#000099"/><stop offset="1" stop-color="#420099"/></linearGradient>
<linearGradient id="g254" gradientUnits="userSpaceOnUse" x1="1163" x2="1227" y1="0" y2="0"><stop offset="0" stop-color="#020099"/><stop offset="1" stop-color="#3d0099"/></linearGradient>
<linearGradient id="g255" gradientUnits="userSpaceOnUse" x1="1165" x2="1221" y1="0" y2="0"><stop offset="0" stop-color="#040099"/><stop offset="1" stop-color="#380099"/></linearGradient>
<linearGradient id="g256" gradientUnits="userSpaceOnUse" x1="1168" x2="1216" y1="0" y2="0"><stop offset="0" stop-color="#070099"/><stop offset="1" stop-color="#330099"/></linearGradient>
<linearGradient id="g257" gradientUnits="userSpaceOnUse" x1="1171" x2="1211" y1="0" y2="0"><stop offset="0" stop-color="#0a0099"/><stop offset="1" stop-color="#2f0099"/></linearGradient>
<linearGradient id="g258" gradientUnits="userSpaceOnUse" x1="1174" x2="1205" y1="0" y2="0"><stop offset="0" stop-color="#0e0099"/><stop offset="1" stop-color="#290099"/></linearGradient>
<linearGradient id="g259" gradientUnits="userSpaceOnUse" x1="1176" x2="1200" y1="0" y2="0"><stop offset="0" stop-color="#100099"/><stop offset="1" stop-color="#250099"/></linearGradient>
<linearGradient id="g260" gradientUnits="userSpaceOnUse" x1="1179" x2="1195" y1="0" y2="0"><stop offset="0" stop-color="#130099"/><stop offset="1" stop-color="#210099"/></linearGradient>
<linearGradient id="g261" gradientUnits="userSpaceOnUse" x1="1182" x2="1189" y1="0" y2="0"><stop offset="0" stop-color="#160099"/><stop offset="1" stop-color="#1c0099"/></linearGradient>
<linearGradient id="h0" gradientUnits="userSpaceOnUse" x1="1282" x2="1289" y1="0" y2="0"><stop offset="0" stop-color="#00ff01"/><stop offset="1" stop-color="#07ff00"/></linearGradient>
<linearGradient id="h1" gradientUnits="userSpaceOnUse" x1="1282" x2="1292" y1="0" y2="0"><stop offset="0" stop-color="#00ff03"/><stop offset="1" stop-color="#0dff00"/></linearGradient>
<linearGradient id="h2" gradientUnits="userSpaceOnUse" x1="1281" x2="1295" y1="0" y2="0"><stop offset="0" stop-color="#00ff04"/><stop offset="1" stop-color="#12ff00"/></linearGradient>
<linearGradient id="h3" gradientUnits="userSpaceOnUse" x1="1280" x2="1298" y1="0" y2="0"><stop offset="0" stop-color="#00ff06"/><stop offset="1" stop-color="#18ff00"/></linearGradient>
<linearGradient id="h4" gradientUnits="userSpaceOnUse" x1="1280" x2="1301" y1="0" y2="0"><stop offset="0" stop-color="#00ff07"/><stop offset="1" stop-color="#1eff00"/></linearGradient>
<linearGradient id="h5" gradientUnits="userSpaceOnUse" x1="1279" x2="1304" y1="0" y2="0"><stop offset="0" stop-color="#00ff09"/><stop offset="1" stop-color="#24ff00"/></linearGradient>
<linearGradient id="h6" gradientUnits="userSpaceOnUse" x1="1278" x2="1307" y1="0" y2="0"><stop offset="0" stop-color="#00ff0b"/><stop offset=".1034" stop-color="#01ff0a"/><stop offset="1" stop-color="#2bff00"/></linearGradient>
<linearGradient id="h7" gradientUnits="userSpaceOnUse" x1="1278" x2="1311" y1="0" y2="0"><stop offset="0" stop-color="#00ff0c"/><stop offset="1" stop-color="#33ff00"/></linearGradient>
<linearGradient id="h8" gradientUnits="userSpaceOnUse" x1="1277" x2="1314" y1="0" y2="0"><stop offset="0" stop-color="#00ff0e"/><stop offset=".0541" stop-color="#00ff0d"/><stop offset="1" stop-color="#3aff00"/></linearGradient>
<linearGradient id="h9" gradientUnits="userSpaceOnUse" x1="1276" x2="1317" y1="0" y2="0"><stop offset="0" stop-color="#00ff10"/><stop offset=".1951" stop-color="#09ff0c"/><stop offset="1" stop-color="#40ff00"/></linearGradient>
<linearGradient id="h10" gradientUnits="userSpaceOnUse" x1="1275" x2="1320" y1="0" y2="0"><stop offset="0" stop-color="#00ff11"/><stop offset=".1556" stop-color="#07ff0f"/><stop offset="1" stop-color="#48ff00"/></linearGradient>
<linearGradient id="h11" gradientUnits="userSpaceOnUse" x1="1275" x2="1323" y1="0" y2="0"><stop offset="0" stop-color="#00ff13"/><stop offset=".3125" stop-color="#15ff0d"/><stop offset="1" stop-color="#4fff00"/></linearGradient>
<linearGradient id="h12" gradientUnits="userSpaceOnUse" x1="1274" x2="1326" y1="0" y2="0"><stop offset="0" stop-color="#00ff15"/><stop offset=".2692" stop-color="#13ff0f"/><stop offset="1" stop-color="#56ff00"/></linearGradient>
<linearGradient id="h13" gradientUnits="userSpaceOnUse" x1="1273" x2="1329" y1="0" y2="0"><stop offset="0" stop-color="#00ff17"/><stop offset=".0536" stop-color="#01ff15"/><stop offset=".3929" stop-color="#20ff0e"/><stop offset="1" stop-color="#5eff00"/></linearGradient>
<linearGradient id="h14" gradientUnits="userSpaceOnUse" x1="1273" x2="1332" y1="0" y2="0"><stop offset="0" stop-color="#00ff18"/><stop offset=".4576" stop-color="#2aff0d"/><stop offset="1" stop-color="#66ff00"/></linearGradient>
<linearGradient id="h15" gradientUnits="userSpaceOnUse" x1="1272" x2="1335" y1="0" y2="0"><stop offset="0" stop-color="#00ff1a"/><stop offset=".3492" stop-color="#21ff11"/><stop offset="1" stop-color="#6eff00"/></linearGradient>
<linearGradient id="h16" gradientUnits="userSpaceOnUse" x1="1271" x2="1339" y1="0" y2="0"><stop offset="0" stop-color="#00ff1c"/><stop offset=".0441" stop-color="#01ff1b"/><stop offset=".4265" stop-color="#2dff10"/><stop offset="1" stop-color="#78ff00"/></linearGradient>
<linearGradient id="h17" gradientUnits="userSpaceOnUse" x1="1271" x2="1342" y1="0" y2="0"><stop offset="0" stop-color="#00ff1d"/><stop offset=".4507" stop-color="#34ff10"/><stop offset="1" stop-color="#81ff00"/></linearGradient>
<linearGradient id="h18" gradientUnits="userSpaceOnUse" x1="1270" x2="1345" y1="0" y2="0"><stop offset="0" stop-color="#00ff1f"/><stop offset=".0267" stop-color="#00ff1f"/><stop offset=".4133" stop-color="#32ff13"/><stop offset="1" stop-color="#89ff00"/></linearGradient>
<linearGradient id="h19" gradientUnits="userSpaceOnUse" x1="1269" x2="1348" y1="0" y2="0"><stop offset="0" stop-color="#00ff21"/><stop offset=".038" stop-color="#01ff20"/><stop offset=".4557" stop-color="#3bff13"/><stop offset="1" stop-color="#93ff00"/></linearGradient>
<linearGradient id="h20" gradientUnits="userSpaceOnUse" x1="1269" x2="1351" y1="0" y2="0"><stop offset="0" stop-color="#00ff23"/><stop offset=".122" stop-color="#0eff1f"/><stop offset=".5244" stop-color="#4aff11"/><stop offset="1" stop-color="#9cff00"/></linearGradient>
<linearGradient id="h21" gradientUnits="userSpaceOnUse" x1="1268" x2="1354" y1="0" y2="0"><stop offset="0" stop-color="#00ff25"/><stop offset=".0581" stop-color="#05ff23"/><stop offset=".4884" stop-color="#48ff14"/><stop offset="1" stop-color="#a6ff00"/></linearGradient>
<linearGradient id="h22" gradientUnits="userSpaceOnUse" x1="1267" x2="1357" y1="0" y2="0"><stop offset="0" stop-color="#00ff27"/><stop offset=".0778" stop-color="#08ff24"/><stop offset=".4556" stop-color="#46ff16"/><stop offset="1" stop-color="#b0ff00"/></linearGradient>
<linearGradient id="h23" gradientUnits="userSpaceOnUse" x1="1267" x2="1360" y1="0" y2="0"><stop offset="0" stop-color="#00ff29"/><stop offset=".2258" stop-color="#22ff21"/><stop offset=".5699" stop-color="#60ff13"/><stop offset="1" stop-color="#baff00"/></linearGradient>
<linearGradient id="h24" gradientUnits="userSpaceOnUse" x1="1266" x2="1363" y1="0" y2="0"><stop offset="0" stop-color="#00ff2b"/><stop offset=".1959" stop-color="#1eff24"/><stop offset=".5361" stop-color="#5eff15"/><stop offset="1" stop-color="#c5ff00"/></linearGradient>
<linearGradient id="h25" gradientUnits="userSpaceOnUse" x1="1265" x2="1367" y1="0" y2="0"><stop offset="0" stop-color="#00ff2d"/><stop offset=".0392" stop-color="#03ff2c"/><stop offset=".1667" stop-color="#1aff27"/><stop offset=".5" stop-color="#5cff18"/><stop offset=".7255" stop-color="#8eff0d"/><stop offset="1" stop-color="#d2ff00"/></linearGradient>
<linearGradient id="h26" gradientUnits="userSpaceOnUse" x1="1264" x2="1370" y1="0" y2="0"><stop offset="0" stop-color="#00ff2f"/><stop offset=".0943" stop-color="#0dff2c"/><stop offset=".4717" stop-color="#5aff1b"/><stop offset=".7453" stop-color="#9aff0d"/><stop offset="1" stop-color="#deff00"/></linearGradient>
<linearGradient id="h27" gradientUnits="userSpaceOnUse" x1="1264" x2="1373" y1="0" y2="0"><stop offset="0" stop-color="#00ff31"/><stop offset=".0275" stop-color="#02ff30"/><stop offset=".2385" stop-color="#2cff27"/><stop offset=".5229" stop-color="#6bff19"/><stop offset=".7523" stop-color="#a4ff0d"/><stop offset="1" stop-color="#e9ff00"/></linearGradient>
<linearGradient id="h28" gradientUnits="userSpaceOnUse" x1="1263" x2="1376" y1="0" y2="0"><stop offset="0" stop-color="#00ff33"/><stop offset=".0177" stop-color="#00ff33"/><stop offset=".1327" stop-color="#17ff2e"/><stop offset=".4956" stop-color="#69ff1c"/><stop offset=".7522" stop-color="#acff0e"/><stop offset="1" stop-color="#f6ff00"/></linearGradient>
<linearGradient id="h29" gradientUnits="userSpaceOnUse" x1="1262" x2="1379" y1="0" y2="0"><stop offset="0" stop-color="#00ff36"/><stop offset=".0256" stop-color="#01ff35"/><stop offset=".1709" stop-color="#20ff2e"/><stop offset=".4701" stop-color="#67ff1f"/><stop offset=".6752" stop-color="#9eff13"/><stop offset=".9829" stop-color="#fdff00"/><stop offset="1" stop-color="#fffc00"/></linearGradient>
<linearGradient id="h30" gradientUnits="userSpaceOnUse" x1="1262" x2="1382" y1="0" y2="0"><stop offset="0" stop-color="#00ff38"/><stop offset=".0333" stop-color="#04ff36"/><stop offset=".2417" stop-color="#33ff2c"/><stop offset=".4833" stop-color="#70ff20"/><stop offset=".7417" stop-color="#baff10"/><stop offset=".95" stop-color="#feff02"/><stop offset="1" stop-color="#ffef00"/></linearGradient>
<linearGradient id="h31" gradientUnits="userSpaceOnUse" x1="1261" x2="1385" y1="0" y2="0"><stop offset="0" stop-color="#00ff3a"/><stop offset=".0161" stop-color="#00ff39"/><stop offset=".1774" stop-color="#25ff32"/><stop offset=".4597" stop-color="#6eff22"/><stop offset=".6774" stop-color="#aeff15"/><stop offset=".9194" stop-color="#ffff04"/><stop offset="1" stop-color="#ffe400"/></linearGradient>
<linearGradient id="h32" gradientUnits="userSpaceOnUse" x1="1260" x2="1388" y1="0" y2="0"><stop offset="0" stop-color="#00ff3c"/><stop offset=".0234" stop-color="#01ff3b"/><stop offset=".1406" stop-color="#1dff36"/><stop offset=".4062" stop-color="#63ff27"/><stop offset=".6875" stop-color="#b9ff16"/><stop offset=".8828" stop-color="#feff08"/><stop offset="1" stop-color="#ffd900"/></linearGradient>
<linearGradient id="h33" gradientUnits="userSpaceOnUse" x1="1260" x2="1391" y1="0" y2="0"><stop offset="0" stop-color="#00ff3e"/><stop offset=".0916" stop-color="#13ff3a"/><stop offset=".4427" stop-color="#73ff27"/><stop offset=".6412" stop-color="#b2ff1a"/><stop offset=".855" stop-color="#ffff0a"/><stop offset="1" stop-color="#ffcf00"/></linearGradient>
<linearGradient id="h34" gradientUnits="userSpaceOnUse" x1="1259" x2="1395" y1="0" y2="0"><stop offset="0" stop-color="#00ff41"/><stop offset=".0147" stop-color="#00ff40"/><stop offset=".1618" stop-color="#26ff38"/><stop offset=".3971" stop-color="#6aff2b"/><stop offset=".6324" stop-color="#b8ff1b"/><stop offset=".8162" stop-color="#feff0d"/><stop offset="1" stop-color="#ffc300"/></linearGradient>
<linearGradient id="h35" gradientUnits="userSpaceOnUse" x1="1258" x2="1398" y1="0" y2="0"><stop offset="0" stop-color="#00ff43"/><stop offset=".0286" stop-color="#03ff42"/><stop offset=".0929" stop-color="#14ff3e"/><stop offset=".4071" stop-color="#71ff2c"/><stop offset=".5929" stop-color="#b1ff20"/><stop offset=".7929" stop-color="#ffff10"/><stop offset=".8786" stop-color="#ffde08"/><stop offset="1" stop-color="#ffba00"/></linearGradient>
<linearGradient id="h36" gradientUnits="userSpaceOnUse" x1="1258" x2="1401" y1="0" y2="0"><stop offset="0" stop-color="#00ff45"/><stop offset=".1888" stop-color="#32ff3b"/><stop offset=".3636" stop-color="#68ff31"/><stop offset=".5874" stop-color="#b7ff21"/><stop offset=".7622" stop-color="#feff13"/><stop offset=".8881" stop-color="#ffd107"/><stop offset="1" stop-color="#ffb200"/></linearGradient>
<linearGradient id="h37" gradientUnits="userSpaceOnUse" x1="1257" x2="1404" y1="0" y2="0"><stop offset="0" stop-color="#00ff48"/><stop offset=".0136" stop-color="#00ff47"/><stop offset=".1429" stop-color="#25ff40"/><stop offset=".4082" stop-color="#7bff30"/><stop offset=".5918" stop-color="#c0ff22"/><stop offset=".7415" stop-color="#ffff16"/><stop offset=".8571" stop-color="#ffd20a"/><stop offset="1" stop-color="#ffaa00"/></linearGradient>
<linearGradient id="h38" gradientUnits="userSpaceOnUse" x1="1256" x2="1407" y1="0" y2="0"><stop offset="0" stop-color="#00ff4b"/><stop offset=".0397" stop-color="#07ff48"/><stop offset=".1722" stop-color="#2fff41"/><stop offset=".3576" stop-color="#6dff35"/><stop offset=".5497" stop-color="#b6ff27"/><stop offset=".7152" stop-color="#feff1a"/><stop offset=".8477" stop-color="#ffcc0b"/><stop offset="1" stop-color="#ffa200"/></linearGradient>
<linearGradient id="h39" gradientUnits="userSpaceOnUse" x1="1256" x2="1410" y1="0" y2="0"><stop offset="0" stop-color="#00ff4d"/><stop offset=".1753" stop-color="#33ff43"/><stop offset=".3571" stop-color="#72ff37"/><stop offset=".526" stop-color="#b4ff2b"/><stop offset=".6948" stop-color="#ffff1d"/><stop offset=".8117" stop-color="#ffcf0e"/><stop offset="1" stop-color="#ff9b00"/></linearGradient>
<linearGradient id="h40" gradientUnits="userSpaceOnUse" x1="1255" x2="1413" y1="0" y2="0"><stop offset="0" stop-color="#00ff4f"/><stop offset=".019" stop-color="#02ff4e"/><stop offset=".1266" stop-color="#24ff48"/><stop offset=".3291" stop-color="#6bff3b"/><stop offset=".5127" stop-color="#b5ff2d"/><stop offset=".6709" stop-color="#feff20"/><stop offset=".8165" stop-color="#ffc50e"/><stop offset="1" stop-color="#ff9400"/></linearGradient>
<linearGradient id="h41" gradientUnits="userSpaceOnUse" x1="1254" x2="1416" y1="0" y2="0"><stop offset="0" stop-color="#00ff52"/><stop offset=".0123" stop-color="#00ff51"/><stop offset=".1481" stop-color="#2cff49"/><stop offset=".3333" stop-color="#70ff3d"/><stop offset=".4938" stop-color="#b3ff31"/><stop offset=".6543" stop-color="#ffff23"/><stop offset=".7778" stop-color="#ffca12"/><stop offset=".8765" stop-color="#ffab08"/><stop offset="1" stop-color="#ff8d00"/></linearGradient>
<linearGradient id="h42" gradientUnits="userSpaceOnUse" x1="1253" x2="1419" y1="0" y2="0"><stop offset="0" stop-color="#00ff55"/><stop offset=".0181" stop-color="#01ff54"/><stop offset=".1024" stop-color="#1dff4f"/><stop offset=".3072" stop-color="#69ff41"/><stop offset=".4759" stop-color="#b1ff34"/><stop offset=".6325" stop-color="#feff27"/><stop offset=".7289" stop-color="#ffd418"/><stop offset=".7952" stop-color="#ffbc11"/><stop offset=".8795" stop-color="#ffa308"/><stop offset="1" stop-color="#ff8700"/></linearGradient>
<linearGradient id="h43" gradientUnits="userSpaceOnUse" x1="1253" x2="1423" y1="0" y2="0"><stop offset="0" stop-color="#00ff57"/><stop offset=".1176" stop-color="#25ff50"/><stop offset=".3059" stop-color="#6eff43"/><stop offset=".4529" stop-color="#afff38"/><stop offset=".6118" stop-color="#ffff2a"/><stop offset=".7" stop-color="#ffd51c"/><stop offset=".7941" stop-color="#ffb310"/><stop offset=".9059" stop-color="#ff9406"/><stop offset="1" stop-color="#ff8000"/></linearGradient>
<linearGradient id="h44" gradientUnits="userSpaceOnUse" x1="1252" x2="1426" y1="0" y2="0"><stop offset="0" stop-color="#00ff5a"/><stop offset=".0115" stop-color="#00ff59"/><stop offset=".0805" stop-color="#18ff55"/><stop offset=".2701" stop-color="#62ff48"/><stop offset=".4368" stop-color="#adff3b"/><stop offset=".592" stop-color="#feff2e"/><stop offset=".6897" stop-color="#ffd11d"/><stop offset=".7874" stop-color="#ffae11"/><stop offset=".8966" stop-color="#ff9007"/><stop offset="1" stop-color="#ff7a00"/></linearGradient>
<linearGradient id="h45" gradientUnits="userSpaceOnUse" x1="1251" x2="1429" y1="0" y2="0"><stop offset="0" stop-color="#00ff5d"/><stop offset=".0169" stop-color="#01ff5c"/><stop offset=".1011" stop-color="#20ff57"/><stop offset=".2753" stop-color="#67ff4b"/><stop offset=".4213" stop-color="#abff3f"/><stop offset=".5787" stop-color="#ffff31"/><stop offset=".6348" stop-color="#ffe126"/><stop offset=".7472" stop-color="#ffb416"/><stop offset=".8708" stop-color="#ff9009"/><stop offset="1" stop-color="#ff7500"/></linearGradient>
<linearGradient id="h46" gradientUnits="userSpaceOnUse" x1="1251" x2="1432" y1="0" y2="0"><stop offset="0" stop-color="#00ff60"/><stop offset=".1326" stop-color="#2fff57"/><stop offset=".3149" stop-color="#7eff4a"/><stop offset=".4365" stop-color="#baff40"/><stop offset=".558" stop-color="#feff35"/><stop offset=".6575" stop-color="#ffce22"/><stop offset=".7459" stop-color="#ffad16"/><stop offset=".8619" stop-color="#ff8c0a"/><stop offset="1" stop-color="#ff6f00"/></linearGradient>
<linearGradient id="h47" gradientUnits="userSpaceOnUse" x1="1250" x2="1435" y1="0" y2="0"><stop offset="0" stop-color="#00ff62"/><stop offset=".0108" stop-color="#00ff62"/><stop offset=".0865" stop-color="#1dff5d"/><stop offset=".2865" stop-color="#74ff4f"/><stop offset=".4216" stop-color="#b8ff44"/><stop offset=".5459" stop-color="#ffff38"/><stop offset=".6378" stop-color="#ffcf26"/><stop offset=".7405" stop-color="#ffa817"/><stop offset=".8757" stop-color="#ff8309"/><stop offset="1" stop-color="#ff6a00"/></linearGradient>
<linearGradient id="h48" gradientUnits="userSpaceOnUse" x1="1249" x2="1438" y1="0" y2="0"><stop offset="0" stop-color="#00ff65"/><stop offset=".0106" stop-color="#00ff65"/><stop offset=".0635" stop-color="#14ff61"/><stop offset=".2593" stop-color="#6aff54"/><stop offset=".4074" stop-color="#b6ff47"/><stop offset=".5291" stop-color="#feff3c"/><stop offset=".6296" stop-color="#ffcb27"/><stop offset=".7302" stop-color="#ffa518"/><stop offset=".8519" stop-color="#ff830b"/><stop offset="1" stop-color="#ff6500"/></linearGradient>
<linearGradient id="h49" gradientUnits="userSpaceOnUse" x1="1249" x2="1441" y1="0" y2="0"><stop offset="0" stop-color="#00ff68"/><stop offset=".099" stop-color="#25ff62"/><stop offset=".2656" stop-color="#72ff56"/><stop offset=".3854" stop-color="#b1ff4c"/><stop offset=".5156" stop-color="#ffff3f"/><stop offset=".6094" stop-color="#ffcc2b"/><stop offset=".7031" stop-color="#ffa71c"/><stop offset=".849" stop-color="#ff7e0b"/><stop offset="1" stop-color="#ff6100"/></linearGradient>
<linearGradient id="h50" gradientUnits="userSpaceOnUse" x1="1248" x2="1444" y1="0" y2="0"><stop offset="0" stop-color="#00ff6b"/><stop offset=".0102" stop-color="#00ff6b"/><stop offset=".0816" stop-color="#1eff66"/><stop offset=".25" stop-color="#6dff5a"/><stop offset=".3673" stop-color="#acff50"/><stop offset=".5" stop-color="#feff43"/><stop offset=".602" stop-color="#ffc82c"/><stop offset=".7245" stop-color="#ff9a19"/><stop offset=".852" stop-color="#ff780b"/><stop offset="1" stop-color="#ff5c00"/></linearGradient>
<linearGradient id="h51" gradientUnits="userSpaceOnUse" x1="1247" x2="1448" y1="0" y2="0"><stop offset="0" stop-color="#00ff6e"/><stop offset=".01" stop-color="#00ff6e"/><stop offset=".0896" stop-color="#22ff68"/><stop offset=".2587" stop-color="#75ff5c"/><stop offset=".3483" stop-color="#a7ff54"/><stop offset=".4876" stop-color="#ffff47"/><stop offset=".5672" stop-color="#ffd033"/><stop offset=".7015" stop-color="#ff9a1c"/><stop offset=".8259" stop-color="#ff780d"/><stop offset="1" stop-color="#ff5700"/></linearGradient>
<linearGradient id="h52" gradientUnits="userSpaceOnUse" x1="1247" x2="1451" y1="0" y2="0"><stop offset="0" stop-color="#00ff71"/><stop offset=".0196" stop-color="#05ff70"/><stop offset=".1078" stop-color="#2dff6a"/><stop offset=".2402" stop-color="#70ff60"/><stop offset=".3922" stop-color="#c9ff53"/><stop offset=".4706" stop-color="#feff4b"/><stop offset=".5735" stop-color="#ffc531"/><stop offset=".701" stop-color="#ff941c"/><stop offset=".8431" stop-color="#ff6f0b"/><stop offset="1" stop-color="#ff5300"/></linearGradient>
<linearGradient id="h53" gradientUnits="userSpaceOnUse" x1="1246" x2="1454" y1="0" y2="0"><stop offset="0" stop-color="#00ff74"/><stop offset=".0096" stop-color="#00ff74"/><stop offset=".0769" stop-color="#1fff6f"/><stop offset=".226" stop-color="#6bff64"/><stop offset=".3798" stop-color="#c7ff57"/><stop offset=".4615" stop-color="#ffff4f"/><stop offset=".5529" stop-color="#ffc836"/><stop offset=".6683" stop-color="#ff9921"/><stop offset=".8125" stop-color="#ff710f"/><stop offset="1" stop-color="#ff4f00"/></linearGradient>
<linearGradient id="h54" gradientUnits="userSpaceOnUse" x1="1245" x2="1457" y1="0" y2="0"><stop offset="0" stop-color="#00ff78"/><stop offset=".0283" stop-color="#08ff76"/><stop offset=".1981" stop-color="#5eff6a"/><stop offset=".283" stop-color="#8fff63"/><stop offset=".4528" stop-color="#fffd52"/><stop offset=".5377" stop-color="#ffc93a"/><stop offset=".6604" stop-color="#ff9622"/><stop offset=".7877" stop-color="#ff7211"/><stop offset="1" stop-color="#ff4b00"/></linearGradient>
<linearGradient id="h55" gradientUnits="userSpaceOnUse" x1="1245" x2="1460" y1="0" y2="0"><stop offset="0" stop-color="#00ff7b"/><stop offset=".014" stop-color="#03ff7a"/><stop offset=".0837" stop-color="#25ff75"/><stop offset=".2186" stop-color="#6eff6b"/><stop offset=".3581" stop-color="#c6ff5f"/><stop offset=".4372" stop-color="#ffff57"/><stop offset=".4884" stop-color="#ffdc46"/><stop offset=".5302" stop-color="#ffc53b"/><stop offset=".6512" stop-color="#ff9323"/><stop offset=".7628" stop-color="#ff7314"/><stop offset=".8651" stop-color="#ff5d0a"/><stop offset="1" stop-color="#ff4700"/></linearGradient>
<linearGradient id="h56" gradientUnits="userSpaceOnUse" x1="1244" x2="1463" y1="0" y2="0"><stop offset="0" stop-color="#00ff7e"/><stop offset=".0274" stop-color="#09ff7c"/><stop offset=".0868" stop-color="#27ff78"/><stop offset=".2192" stop-color="#71ff6e"/><stop offset=".3151" stop-color="#aeff66"/><stop offset=".4292" stop-color="#fffd5a"/><stop offset=".4703" stop-color="#ffe04c"/><stop offset=".5251" stop-color="#ffc13d"/><stop offset=".5845" stop-color="#ffa630"/><stop offset=".6621" stop-color="#ff8a22"/><stop offset=".8539" stop-color="#ff5b0b"/><stop offset="1" stop-color="#ff4400"/></linearGradient>
<linearGradient id="h57" gradientUnits="userSpaceOnUse" x1="1243" x2="1466" y1="0" y2="0"><stop offset="0" stop-color="#00ff82"/><stop offset=".009" stop-color="#00ff81"/><stop offset=".0359" stop-color="#0dff7f"/><stop offset=".2018" stop-color="#69ff73"/><stop offset=".3139" stop-color="#b2ff6a"/><stop offset=".417" stop-color="#ffff5f"/><stop offset=".4753" stop-color="#ffd64b"/><stop offset=".5202" stop-color="#ffbd3e"/><stop offset=".6368" stop-color="#ff8d26"/><stop offset=".8027" stop-color="#ff6110"/><stop offset="1" stop-color="#ff4000"/></linearGradient>
<linearGradient id="h58" gradientUnits="userSpaceOnUse" x1="1243" x2="1469" y1="0" y2="0"><stop offset="0" stop-color="#00ff85"/><stop offset=".0088" stop-color="#01ff84"/><stop offset=".0664" stop-color="#1fff80"/><stop offset=".1991" stop-color="#6cff77"/><stop offset=".3053" stop-color="#b3ff6e"/><stop offset=".4071" stop-color="#fffd63"/><stop offset=".4602" stop-color="#ffd74f"/><stop offset=".5177" stop-color="#ffb73f"/><stop offset=".6504" stop-color="#ff8324"/><stop offset=".7965" stop-color="#ff5e11"/><stop offset="1" stop-color="#ff3d00"/></linearGradient>
<linearGradient id="h59" gradientUnits="userSpaceOnUse" x1="1242" x2="1472" y1="0" y2="0"><stop offset="0" stop-color="#00ff88"/><stop offset=".0174" stop-color="#05ff87"/><stop offset=".0696" stop-color="#21ff84"/><stop offset=".2" stop-color="#6fff7a"/><stop offset=".3" stop-color="#b4ff72"/><stop offset=".3957" stop-color="#ffff68"/><stop offset=".4435" stop-color="#ffdb55"/><stop offset=".5" stop-color="#ffba44"/><stop offset=".5652" stop-color="#ff9c34"/><stop offset=".6348" stop-color="#ff8327"/><stop offset=".7913" stop-color="#ff5b11"/><stop offset="1" stop-color="#ff3a00"/></linearGradient>
<linearGradient id="h60" gradientUnits="userSpaceOnUse" x1="1241" x2="1476" y1="0" y2="0"><stop offset="0" stop-color="#00ff8c"/><stop offset=".0085" stop-color="#00ff8b"/><stop offset=".0511" stop-color="#17ff89"/><stop offset=".1787" stop-color="#64ff7f"/><stop offset=".2723" stop-color="#a5ff78"/><stop offset=".3872" stop-color="#fffd6c"/><stop offset=".4255" stop-color="#ffdf5c"/><stop offset=".4936" stop-color="#ffb645"/><stop offset=".617" stop-color="#ff8329"/><stop offset=".7787" stop-color="#ff5912"/><stop offset="1" stop-color="#ff3600"/></linearGradient>
<linearGradient id="h61" gradientUnits="userSpaceOnUse" x1="1240" x2="1479" y1="0" y2="0"><stop offset="0" stop-color="#00ff90"/><stop offset=".0084" stop-color="#00ff8f"/><stop offset=".046" stop-color="#14ff8d"/><stop offset=".1799" stop-color="#67ff83"/><stop offset=".272" stop-color="#a9ff7b"/><stop offset=".3766" stop-color="#ffff71"/><stop offset=".4351" stop-color="#ffd258"/><stop offset=".477" stop-color="#ffb94a"/><stop offset=".5439" stop-color="#ff9938"/><stop offset=".6025" stop-color="#ff832c"/><stop offset=".7699" stop-color="#ff5713"/><stop offset="1" stop-color="#ff3300"/></linearGradient>
<linearGradient id="h62" gradientUnits="userSpaceOnUse" x1="1240" x2="1482" y1="0" y2="0"><stop offset="0" stop-color="#00ff93"/><stop offset=".0124" stop-color="#03ff92"/><stop offset=".0661" stop-color="#22ff8f"/><stop offset=".1777" stop-color="#6aff87"/><stop offset=".2686" stop-color="#adff7f"/><stop offset=".3678" stop-color="#fffd75"/><stop offset=".4215" stop-color="#ffd35d"/><stop offset=".4711" stop-color="#ffb54c"/><stop offset=".5868" stop-color="#ff832f"/><stop offset=".6736" stop-color="#ff6920"/><stop offset=".7851" stop-color="#ff5012"/><stop offset="1" stop-color="#ff3000"/></linearGradient>
<linearGradient id="h63" gradientUnits="userSpaceOnUse" x1="1239" x2="1485" y1="0" y2="0"><stop offset="0" stop-color="#00ff97"/><stop offset=".0081" stop-color="#00ff96"/><stop offset=".0325" stop-color="#0eff95"/><stop offset=".1829" stop-color="#70ff8a"/><stop offset=".2642" stop-color="#aeff84"/><stop offset=".3577" stop-color="#ffff7b"/><stop offset=".4106" stop-color="#ffd462"/><stop offset=".4715" stop-color="#ffaf4c"/><stop offset=".5366" stop-color="#ff913a"/><stop offset=".6098" stop-color="#ff772b"/><stop offset=".7927" stop-color="#ff4b11"/><stop offset="1" stop-color="#ff2d00"/></linearGradient>
<linearGradient id="h64" gradientUnits="userSpaceOnUse" x1="1238" x2="1488" y1="0" y2="0"><stop offset="0" stop-color="#00ff9b"/><stop offset=".008" stop-color="#00ff9a"/><stop offset=".028" stop-color="#0bff99"/><stop offset=".152" stop-color="#5cff91"/><stop offset=".248" stop-color="#a5ff89"/><stop offset=".352" stop-color="#fffd7f"/><stop offset=".396" stop-color="#ffd868"/><stop offset=".452" stop-color="#ffb453"/><stop offset=".508" stop-color="#ff9842"/><stop offset=".58" stop-color="#ff7c31"/><stop offset=".764" stop-color="#ff4d14"/><stop offset="1" stop-color="#ff2b00"/></linearGradient>
<linearGradient id="h65" gradientUnits="userSpaceOnUse" x1="1238" x2="1491" y1="0" y2="0"><stop offset="0" stop-color="#00ff9f"/><stop offset=".0119" stop-color="#03ff9e"/><stop offset=".1502" stop-color="#5fff95"/><stop offset=".253" stop-color="#b0ff8d"/><stop offset=".3399" stop-color="#ffff85"/><stop offset=".4032" stop-color="#ffcb65"/><stop offset=".4466" stop-color="#ffb054"/><stop offset=".5059" stop-color="#ff9342"/><stop offset=".5771" stop-color="#ff7831"/><stop offset=".6759" stop-color="#ff5c20"/><stop offset=".7708" stop-color="#ff4813"/><stop offset="1" stop-color="#ff2800"/></linearGradient>
<linearGradient id="h66" gradientUnits="userSpaceOnUse" x1="1237" x2="1494" y1="0" y2="0"><stop offset="0" stop-color="#00ffa3"/><stop offset=".0078" stop-color="#00ffa2"/><stop offset=".0428" stop-color="#16ffa0"/><stop offset=".1518" stop-color="#62ff99"/><stop offset=".2412" stop-color="#aaff92"/><stop offset=".3346" stop-color="#fffd89"/><stop offset=".393" stop-color="#ffcc6a"/><stop offset=".4319" stop-color="#ffb35a"/><stop offset=".5058" stop-color="#ff8e42"/><stop offset=".5759" stop-color="#ff7432"/><stop offset=".677" stop-color="#ff5820"/><stop offset=".7743" stop-color="#ff4413"/><stop offset="1" stop-color="#ff2500"/></linearGradient>
<linearGradient id="h67" gradientUnits="userSpaceOnUse" x1="1236" x2="1497" y1="0" y2="0"><stop offset="0" stop-color="#00ffa7"/><stop offset=".0153" stop-color="#04ffa6"/><stop offset=".1188" stop-color="#4bff9f"/><stop offset=".2261" stop-color="#a1ff97"/><stop offset=".3257" stop-color="#ffff8f"/><stop offset=".3831" stop-color="#ffcd6f"/><stop offset=".4291" stop-color="#ffaf5b"/><stop offset=".4904" stop-color="#ff9047"/><stop offset=".5632" stop-color="#ff7434"/><stop offset=".6743" stop-color="#ff5520"/><stop offset=".751" stop-color="#ff4516"/><stop offset="1" stop-color="#ff2300"/></linearGradient>
<linearGradient id="h68" gradientUnits="userSpaceOnUse" x1="1236" x2="1500" y1="0" y2="0"><stop offset="0" stop-color="#00ffab"/><stop offset=".0076" stop-color="#01ffaa"/><stop offset=".0795" stop-color="#32ffa6"/><stop offset=".1818" stop-color="#81ff9f"/><stop offset=".3182" stop-color="#fffd93"/><stop offset=".3712" stop-color="#ffce74"/><stop offset=".4242" stop-color="#ffab5c"/><stop offset=".4886" stop-color="#ff8b47"/><stop offset=".5606" stop-color="#ff7035"/><stop offset=".7386" stop-color="#ff4417"/><stop offset="1" stop-color="#ff2000"/></linearGradient>
<linearGradient id="h69" gradientUnits="userSpaceOnUse" x1="1235" x2="1504" y1="0" y2="0"><stop offset="0" stop-color="#00ffaf"/><stop offset=".0149" stop-color="#05ffae"/><stop offset=".0595" stop-color="#24ffac"/><stop offset=".1673" stop-color="#78ffa5"/><stop offset=".2491" stop-color="#c2ff9f"/><stop offset=".3086" stop-color="#ffff99"/><stop offset=".3494" stop-color="#ffd87f"/><stop offset=".4052" stop-color="#ffb064"/><stop offset=".461" stop-color="#ff924f"/><stop offset=".5428" stop-color="#ff7139"/><stop offset=".632" stop-color="#ff5727"/><stop offset=".7398" stop-color="#ff4017"/><stop offset=".8848" stop-color="#ff2a08"/><stop offset="1" stop-color="#ff1e00"/></linearGradient>
<linearGradient id="h70" gradientUnits="userSpaceOnUse" x1="1234" x2="1507" y1="0" y2="0"><stop offset="0" stop-color="#00ffb3"/><stop offset=".011" stop-color="#02ffb3"/><stop offset=".044" stop-color="#19ffb1"/><stop offset=".1575" stop-color="#72ffaa"/><stop offset=".2381" stop-color="#bcffa4"/><stop offset=".304" stop-color="#fffd9e"/><stop offset=".3516" stop-color="#ffd07e"/><stop offset=".4029" stop-color="#ffac65"/><stop offset=".4725" stop-color="#ff884c"/><stop offset=".5458" stop-color="#ff6c38"/><stop offset=".6337" stop-color="#ff5327"/><stop offset=".7509" stop-color="#ff3b16"/><stop offset="1" stop-color="#ff1b00"/></linearGradient>
<linearGradient id="h71" gradientUnits="userSpaceOnUse" x1="1234" x2="1510" y1="0" y2="0"><stop offset="0" stop-color="#00ffb8"/><stop offset=".0072" stop-color="#01ffb7"/><stop offset=".0435" stop-color="#1bffb5"/><stop offset=".1449" stop-color="#6cffaf"/><stop offset=".2246" stop-color="#b6ffaa"/><stop offset=".2935" stop-color="#ffffa5"/><stop offset=".3225" stop-color="#ffe18f"/><stop offset=".3587" stop-color="#ffc37a"/><stop offset=".4022" stop-color="#ffa665"/><stop offset=".4601" stop-color="#ff884f"/><stop offset=".5471" stop-color="#ff6738"/><stop offset=".6304" stop-color="#ff5027"/><stop offset=".75" stop-color="#ff3816"/><stop offset="1" stop-color="#ff1900"/></linearGradient>
<linearGradient id="h72" gradientUnits="userSpaceOnUse" x1="1233" x2="1513" y1="0" y2="0"><stop offset="0" stop-color="#00ffbc"/><stop offset=".0107" stop-color="#03ffbc"/><stop offset=".05" stop-color="#20ffba"/><stop offset=".1357" stop-color="#66ffb5"/><stop offset=".2214" stop-color="#b7ffaf"/><stop offset=".2893" stop-color="#fffda9"/><stop offset=".3536" stop-color="#ffc17d"/><stop offset=".4036" stop-color="#ffa065"/><stop offset=".4679" stop-color="#ff804d"/><stop offset=".5321" stop-color="#ff683b"/><stop offset=".625" stop-color="#ff4e28"/><stop offset=".7393" stop-color="#ff3717"/><stop offset="1" stop-color="#ff1700"/></linearGradient>
<linearGradient id="h73" gradientUnits="userSpaceOnUse" x1="1232" x2="1516" y1="0" y2="0"><stop offset="0" stop-color="#00ffc1"/><stop offset=".0106" stop-color="#02ffc0"/><stop offset=".0423" stop-color="#1affbf"/><stop offset=".1303" stop-color="#63ffba"/><stop offset=".2007" stop-color="#a6ffb6"/><stop offset=".2817" stop-color="#ffffb0"/><stop offset=".3169" stop-color="#ffda94"/><stop offset=".3803" stop-color="#ffa970"/><stop offset=".4577" stop-color="#ff8051"/><stop offset=".5387" stop-color="#ff623a"/><stop offset=".6408" stop-color="#ff4726"/><stop offset=".7465" stop-color="#ff3316"/><stop offset="1" stop-color="#ff1500"/></linearGradient>
<linearGradient id="h74" gradientUnits="userSpaceOnUse" x1="1232" x2="1519" y1="0" y2="0"><stop offset="0" stop-color="#00ffc5"/><stop offset=".0314" stop-color="#14ffc4"/><stop offset=".122" stop-color="#60ffbf"/><stop offset=".1951" stop-color="#a7ffbb"/><stop offset=".2753" stop-color="#fffdb4"/><stop offset=".3101" stop-color="#ffd898"/><stop offset=".3763" stop-color="#ffa571"/><stop offset=".446" stop-color="#ff8054"/><stop offset=".5192" stop-color="#ff643e"/><stop offset=".6167" stop-color="#ff492a"/><stop offset=".7282" stop-color="#ff3319"/><stop offset="1" stop-color="#ff1300"/></linearGradient>
<linearGradient id="h75" gradientUnits="userSpaceOnUse" x1="1231" x2="1522" y1="0" y2="0"><stop offset="0" stop-color="#00ffca"/><stop offset=".0069" stop-color="#01ffca"/><stop offset=".0515" stop-color="#24ffc8"/><stop offset=".1443" stop-color="#77ffc3"/><stop offset=".2165" stop-color="#c2ffbf"/><stop offset=".268" stop-color="#ffffbc"/><stop offset=".3058" stop-color="#ffd69c"/><stop offset=".378" stop-color="#ff9f70"/><stop offset=".4364" stop-color="#ff8058"/><stop offset=".5292" stop-color="#ff5d3c"/><stop offset=".6289" stop-color="#ff4328"/><stop offset=".7423" stop-color="#ff2e17"/><stop offset="1" stop-color="#ff1100"/></linearGradient>
<linearGradient id="h76" gradientUnits="userSpaceOnUse" x1="1230" x2="1525" y1="0" y2="0"><stop offset="0" stop-color="#00ffcf"/><stop offset=".0068" stop-color="#00ffcf"/><stop offset=".0407" stop-color="#1bffcd"/><stop offset=".1288" stop-color="#6affc9"/><stop offset=".2" stop-color="#b4ffc6"/><stop offset=".2644" stop-color="#fffdc1"/><stop offset=".3017" stop-color="#ffd4a0"/><stop offset=".3593" stop-color="#ffa67a"/><stop offset=".4271" stop-color="#ff805c"/><stop offset=".5085" stop-color="#ff6042"/><stop offset=".6068" stop-color="#ff452c"/><stop offset=".7254" stop-color="#ff2e19"/><stop offset="1" stop-color="#ff0f00"/></linearGradient>
<linearGradient id="h77" gradientUnits="userSpaceOnUse" x1="1229" x2="1528" y1="0" y2="0"><stop offset="0" stop-color="#00ffd4"/><stop offset=".0067" stop-color="#00ffd4"/><stop offset=".0301" stop-color="#12ffd3"/><stop offset=".1237" stop-color="#67ffcf"/><stop offset=".2007" stop-color="#b9ffcc"/><stop offset=".2575" stop-color="#ffffc8"/><stop offset=".2977" stop-color="#ffd2a3"/><stop offset=".3579" stop-color="#ffa27c"/><stop offset=".4181" stop-color="#ff805f"/><stop offset=".4916" stop-color="#ff6247"/><stop offset=".5886" stop-color="#ff462f"/><stop offset=".7157" stop-color="#ff2d1b"/><stop offset=".8395" stop-color="#ff1c0c"/><stop offset="1" stop-color="#ff0d00"/></linearGradient>
<linearGradient id="h78" gradientUnits="userSpaceOnUse" x1="1229" x2="1532" y1="0" y2="0"><stop offset="0" stop-color="#00ffd9"/><stop offset=".0066" stop-color="#01ffd9"/><stop offset=".0297" stop-color="#14ffd8"/><stop offset=".1254" stop-color="#6effd4"/><stop offset=".1782" stop-color="#a7ffd2"/><stop offset=".2508" stop-color="#fffdcd"/><stop offset=".2904" stop-color="#ffd0a7"/><stop offset=".3498" stop-color="#ffa07f"/><stop offset=".4059" stop-color="#ff8063"/><stop offset=".495" stop-color="#ff5c45"/><stop offset=".5908" stop-color="#ff422e"/><stop offset=".6964" stop-color="#ff2d1d"/><stop offset=".8515" stop-color="#ff180b"/><stop offset="1" stop-color="#ff0b00"/></linearGradient>
<linearGradient id="h79" gradientUnits="userSpaceOnUse" x1="1228" x2="1535" y1="0" y2="0"><stop offset="0" stop-color="#00ffde"/><stop offset=".0065" stop-color="#00ffde"/><stop offset=".0391" stop-color="#1cffdd"/><stop offset=".114" stop-color="#64ffdb"/><stop offset=".1759" stop-color="#a8ffd8"/><stop offset=".2443" stop-color="#ffffd6"/><stop offset=".2866" stop-color="#ffceab"/><stop offset=".3355" stop-color="#ffa588"/><stop offset=".3974" stop-color="#ff8067"/><stop offset=".4756" stop-color="#ff5f4b"/><stop offset=".5668" stop-color="#ff4533"/><stop offset=".6808" stop-color="#ff2d1f"/><stop offset=".8502" stop-color="#ff160b"/><stop offset="1" stop-color="#ff0900"/></linearGradient>
<linearGradient id="h80" gradientUnits="userSpaceOnUse" x1="1227" x2="1538" y1="0" y2="0"><stop offset="0" stop-color="#00ffe3"/><stop offset=".0064" stop-color="#00ffe3"/><stop offset=".0225" stop-color="#0dffe3"/><stop offset=".119" stop-color="#6bffe0"/><stop offset=".1736" stop-color="#a9ffdf"/><stop offset=".2412" stop-color="#fffdda"/><stop offset=".2797" stop-color="#ffcfb2"/><stop offset=".3183" stop-color="#ffad93"/><stop offset=".3505" stop-color="#ff967f"/><stop offset=".418" stop-color="#ff725f"/><stop offset=".4887" stop-color="#ff5747"/><stop offset=".5627" stop-color="#ff4334"/><stop offset=".6656" stop-color="#ff2d22"/><stop offset=".8489" stop-color="#ff150b"/><stop offset="1" stop-color="#ff0700"/></linearGradient>
<linearGradient id="h81" gradientUnits="userSpaceOnUse" x1="1227" x2="1541" y1="0" y2="0"><stop offset="0" stop-color="#00ffe9"/><stop offset=".0064" stop-color="#01ffe9"/><stop offset=".0255" stop-color="#12ffe8"/><stop offset=".1051" stop-color="#61ffe7"/><stop offset=".172" stop-color="#aeffe5"/><stop offset=".2325" stop-color="#ffffe3"/><stop offset=".2739" stop-color="#ffcdb6"/><stop offset=".328" stop-color="#ff9f8c"/><stop offset=".3885" stop-color="#ff7b6b"/><stop offset=".465" stop-color="#ff5b4e"/><stop offset=".5446" stop-color="#ff4438"/><stop offset=".6497" stop-color="#ff2d24"/><stop offset=".828" stop-color="#ff150d"/><stop offset="1" stop-color="#ff0500"/></linearGradient>
<linearGradient id="h82" gradientUnits="userSpaceOnUse" x1="1226" x2="1544" y1="0" y2="0"><stop offset="0" stop-color="#00ffee"/><stop offset=".0063" stop-color="#00ffee"/><stop offset=".0943" stop-color="#57ffed"/><stop offset=".1478" stop-color="#94ffec"/><stop offset=".2296" stop-color="#fffde8"/><stop offset=".2704" stop-color="#ffcbba"/><stop offset=".3145" stop-color="#ffa496"/><stop offset=".3679" stop-color="#ff8275"/><stop offset=".4465" stop-color="#ff5e54"/><stop offset=".5283" stop-color="#ff453c"/><stop offset=".6352" stop-color="#ff2d27"/><stop offset=".7642" stop-color="#ff1a14"/><stop offset="1" stop-color="#ff0400"/></linearGradient>
<linearGradient id="h83" gradientUnits="userSpaceOnUse" x1="1225" x2="1547" y1="0" y2="0"><stop offset="0" stop-color="#00fff4"/><stop offset=".0093" stop-color="#02fff4"/><stop offset=".0497" stop-color="#29fff3"/><stop offset=".118" stop-color="#73fff3"/><stop offset=".1832" stop-color="#c5fff2"/><stop offset=".2236" stop-color="#fffff1"/><stop offset=".264" stop-color="#ffccc1"/><stop offset=".323" stop-color="#ff9990"/><stop offset=".382" stop-color="#ff766f"/><stop offset=".4534" stop-color="#ff5852"/><stop offset=".559" stop-color="#ff3a35"/><stop offset=".6801" stop-color="#ff2320"/><stop offset=".8292" stop-color="#ff110d"/><stop offset="1" stop-color="#ff0200"/></linearGradient>
<linearGradient id="h84" gradientUnits="userSpaceOnUse" x1="1225" x2="1550" y1="0" y2="0"><stop offset="0" stop-color="#00fffa"/><stop offset=".0062" stop-color="#01fffa"/><stop offset=".0338" stop-color="#1cfffa"/><stop offset=".1015" stop-color="#65fff9"/><stop offset=".1723" stop-color="#befff9"/><stop offset=".2185" stop-color="#fffdf7"/><stop offset=".2585" stop-color="#ffcac5"/><stop offset=".32" stop-color="#ff9591"/><stop offset=".3969" stop-color="#ff6b67"/><stop offset=".4985" stop-color="#ff4644"/><stop offset=".5815" stop-color="#ff3231"/><stop offset=".7015" stop-color="#ff1e1c"/><stop offset=".8492" stop-color="#ff0d0b"/><stop offset="1" stop-color="#ff0000"/></linearGradient>
<linearGradient id="h85" gradientUnits="userSpaceOnUse" x1="1224" x2="1550" y1="0" y2="0"><stop offset="0" stop-color="#00feff"/><stop offset=".0061" stop-color="#01feff"/><stop offset=".0215" stop-color="#0ffeff"/><stop offset=".1074" stop-color="#6cfeff"/><stop offset=".1656" stop-color="#b6feff"/><stop offset=".2178" stop-color="#fffbfc"/><stop offset=".2577" stop-color="#ffc8c9"/><stop offset=".2822" stop-color="#ffb0b1"/><stop offset=".319" stop-color="#ff9395"/><stop offset=".3926" stop-color="#ff6a6b"/><stop offset=".4785" stop-color="#ff4a4b"/><stop offset=".5828" stop-color="#ff3131"/><stop offset=".7025" stop-color="#ff1c1d"/><stop offset=".8497" stop-color="#ff0b0c"/><stop offset="1" stop-color="#ff0000"/></linearGradient>
<linearGradient id="h86" gradientUnits="userSpaceOnUse" x1="1223" x2="1546" y1="0" y2="0"><stop offset="0" stop-color="#00f9ff"/><stop offset=".0124" stop-color="#05f8ff"/><stop offset=".1053" stop-color="#66f8ff"/><stop offset=".1827" stop-color="#c7f7ff"/><stop offset=".2229" stop-color="#fff4fd"/><stop offset=".2632" stop-color="#ffc3ca"/><stop offset=".3127" stop-color="#ff989e"/><stop offset=".3715" stop-color="#ff747a"/><stop offset=".4582" stop-color="#ff5155"/><stop offset=".5542" stop-color="#ff373a"/><stop offset=".6873" stop-color="#ff1e22"/><stop offset=".8452" stop-color="#ff0c0e"/><stop offset="1" stop-color="#ff0002"/></linearGradient>
<linearGradient id="h87" gradientUnits="userSpaceOnUse" x1="1223" x2="1541" y1="0" y2="0"><stop offset="0" stop-color="#00f3ff"/><stop offset=".0126" stop-color="#07f3ff"/><stop offset=".044" stop-color="#25f2ff"/><stop offset=".1226" stop-color="#79f1ff"/><stop offset=".1824" stop-color="#c3f0ff"/><stop offset=".2264" stop-color="#ffedfd"/><stop offset=".2642" stop-color="#ffc1ce"/><stop offset=".2893" stop-color="#ffa9b6"/><stop offset=".3208" stop-color="#ff929d"/><stop offset=".3805" stop-color="#ff7079"/><stop offset=".4654" stop-color="#ff4e56"/><stop offset=".5629" stop-color="#ff353b"/><stop offset=".6918" stop-color="#ff1e23"/><stop offset=".8491" stop-color="#ff0b10"/><stop offset="1" stop-color="#ff0003"/></linearGradient>
<linearGradient id="h88" gradientUnits="userSpaceOnUse" x1="1222" x2="1537" y1="0" y2="0"><stop offset="0" stop-color="#00edff"/><stop offset=".0127" stop-color="#06edff"/><stop offset=".0952" stop-color="#57ebff"/><stop offset=".1651" stop-color="#a7e9ff"/><stop offset=".2317" stop-color="#ffe6fe"/><stop offset=".2698" stop-color="#ffbbcf"/><stop offset=".327" stop-color="#ff8e9e"/><stop offset=".3873" stop-color="#ff6c7a"/><stop offset=".4762" stop-color="#ff4b56"/><stop offset=".5873" stop-color="#ff2f39"/><stop offset=".7143" stop-color="#ff1b22"/><stop offset=".8476" stop-color="#ff0b12"/><stop offset="1" stop-color="#ff0005"/></linearGradient>
<linearGradient id="h89" gradientUnits="userSpaceOnUse" x1="1221" x2="1532" y1="0" y2="0"><stop offset="0" stop-color="#00e8ff"/><stop offset=".0129" stop-color="#05e7ff"/><stop offset=".1061" stop-color="#5fe5ff"/><stop offset=".1608" stop-color="#9ce3ff"/><stop offset=".2379" stop-color="#ffe0fe"/><stop offset=".2733" stop-color="#ffb9d3"/><stop offset=".3344" stop-color="#ff8a9f"/><stop offset=".4019" stop-color="#ff6678"/><stop offset=".4855" stop-color="#ff4957"/><stop offset=".5691" stop-color="#ff3340"/><stop offset=".6817" stop-color="#ff1f2a"/><stop offset=".8199" stop-color="#ff0e17"/><stop offset="1" stop-color="#ff0007"/></linearGradient>
<linearGradient id="h90" gradientUnits="userSpaceOnUse" x1="1221" x2="1528" y1="0" y2="0"><stop offset="0" stop-color="#00e2ff"/><stop offset=".0358" stop-color="#1be1ff"/><stop offset=".114" stop-color="#67dfff"/><stop offset=".1726" stop-color="#a8ddff"/><stop offset=".241" stop-color="#ffdaff"/><stop offset=".2638" stop-color="#ffc0e2"/><stop offset=".2899" stop-color="#ffa9c7"/><stop offset=".3388" stop-color="#ff86a0"/><stop offset=".4072" stop-color="#ff6379"/><stop offset=".4951" stop-color="#ff4557"/><stop offset=".6645" stop-color="#ff222f"/><stop offset=".8371" stop-color="#ff0c17"/><stop offset="1" stop-color="#ff0008"/></linearGradient>
<linearGradient id="h91" gradientUnits="userSpaceOnUse" x1="1220" x2="1523" y1="0" y2="0"><stop offset="0" stop-color="#00ddff"/><stop offset=".0066" stop-color="#01ddff"/><stop offset=".0297" stop-color="#14dcff"/><stop offset=".1188" stop-color="#68d9ff"/><stop offset=".1848" stop-color="#b0d6ff"/><stop offset=".2475" stop-color="#ffd3ff"/><stop offset=".2937" stop-color="#ffa6cb"/><stop offset=".3465" stop-color="#ff82a1"/><stop offset=".4059" stop-color="#ff647f"/><stop offset=".505" stop-color="#ff4358"/><stop offset=".604" stop-color="#ff2c3f"/><stop offset=".6997" stop-color="#ff1d2c"/><stop offset=".8383" stop-color="#ff0c1a"/><stop offset="1" stop-color="#ff000a"/></linearGradient>
<linearGradient id="h92" gradientUnits="userSpaceOnUse" x1="1219" x2="1519" y1="0" y2="0"><stop offset="0" stop-color="#00d8ff"/><stop offset=".0133" stop-color="#05d7ff"/><stop offset=".1133" stop-color="#5fd3ff"/><stop offset=".17" stop-color="#9ad1ff"/><stop offset=".2533" stop-color="#fecdff"/><stop offset=".2567" stop-color="#ffc9fb"/><stop offset=".2967" stop-color="#ffa4cf"/><stop offset=".3533" stop-color="#ff7ea2"/><stop offset=".4133" stop-color="#ff6180"/><stop offset=".5133" stop-color="#ff4159"/><stop offset=".6033" stop-color="#ff2c42"/><stop offset=".7033" stop-color="#ff1c2e"/><stop offset=".88" stop-color="#ff0817"/><stop offset="1" stop-color="#ff000c"/></linearGradient>
<linearGradient id="h93" gradientUnits="userSpaceOnUse" x1="1218" x2="1514" y1="0" y2="0"><stop offset="0" stop-color="#00d3ff"/><stop offset=".0068" stop-color="#00d3ff"/><stop offset=".0304" stop-color="#12d2ff"/><stop offset=".1284" stop-color="#6acdff"/><stop offset=".1926" stop-color="#adcaff"/><stop offset=".2635" stop-color="#ffc4fc"/><stop offset=".3007" stop-color="#ffa2d3"/><stop offset=".3581" stop-color="#ff7ca5"/><stop offset=".4223" stop-color="#ff5e81"/><stop offset=".5236" stop-color="#ff3e5a"/><stop offset=".598" stop-color="#ff2e46"/><stop offset=".7095" stop-color="#ff1b30"/><stop offset="1" stop-color="#ff000e"/></linearGradient>
<linearGradient id="h94" gradientUnits="userSpaceOnUse" x1="1218" x2="1510" y1="0" y2="0"><stop offset="0" stop-color="#00ceff"/><stop offset=".0068" stop-color="#01ceff"/><stop offset=".0411" stop-color="#1cccff"/><stop offset=".1301" stop-color="#6bc8ff"/><stop offset=".1884" stop-color="#a6c5ff"/><stop offset=".2671" stop-color="#ffbefd"/><stop offset=".3014" stop-color="#ffa0d7"/><stop offset=".363" stop-color="#ff78a6"/><stop offset=".4281" stop-color="#ff5b82"/><stop offset=".5274" stop-color="#ff3d5c"/><stop offset=".613" stop-color="#ff2a46"/><stop offset=".7432" stop-color="#ff172d"/><stop offset="1" stop-color="#ff0010"/></linearGradient>
<linearGradient id="h95" gradientUnits="userSpaceOnUse" x1="1217" x2="1505" y1="0" y2="0"><stop offset="0" stop-color="#00c9ff"/><stop offset=".0069" stop-color="#00c9ff"/><stop offset=".0382" stop-color="#18c7ff"/><stop offset=".1354" stop-color="#6cc2ff"/><stop offset=".1979" stop-color="#aabfff"/><stop offset=".2743" stop-color="#ffb8fd"/><stop offset=".3056" stop-color="#ff9edb"/><stop offset=".3715" stop-color="#ff75a7"/><stop offset=".4375" stop-color="#ff5883"/><stop offset=".5382" stop-color="#ff3a5d"/><stop offset=".6354" stop-color="#ff2744"/><stop offset=".7431" stop-color="#ff1730"/><stop offset="1" stop-color="#ff0012"/></linearGradient>
<linearGradient id="h96" gradientUnits="userSpaceOnUse" x1="1216" x2="1501" y1="0" y2="0"><stop offset="0" stop-color="#00c4ff"/><stop offset=".0175" stop-color="#07c4ff"/><stop offset=".1228" stop-color="#5dbeff"/><stop offset=".2" stop-color="#a7b9ff"/><stop offset=".2807" stop-color="#ffb2fe"/><stop offset=".3228" stop-color="#ff91d2"/><stop offset=".3789" stop-color="#ff71a8"/><stop offset=".4456" stop-color="#ff5584"/><stop offset=".5439" stop-color="#ff395f"/><stop offset=".7228" stop-color="#ff1936"/><stop offset="1" stop-color="#ff0014"/></linearGradient>
<linearGradient id="h97" gradientUnits="userSpaceOnUse" x1="1216" x2="1497" y1="0" y2="0"><stop offset="0" stop-color="#00c0ff"/><stop offset=".0071" stop-color="#01bfff"/><stop offset=".0463" stop-color="#1ebdff"/><stop offset=".1423" stop-color="#6eb8ff"/><stop offset=".2135" stop-color="#b2b3ff"/><stop offset=".2847" stop-color="#ffadfe"/><stop offset=".3238" stop-color="#ff8fd6"/><stop offset=".3808" stop-color="#ff6fab"/><stop offset=".452" stop-color="#ff5285"/><stop offset=".5267" stop-color="#ff3d68"/><stop offset=".6228" stop-color="#ff284d"/><stop offset=".7153" stop-color="#ff1a3a"/><stop offset=".8327" stop-color="#ff0d28"/><stop offset="1" stop-color="#ff0016"/></linearGradient>
<linearGradient id="h98" gradientUnits="userSpaceOnUse" x1="1215" x2="1492" y1="0" y2="0"><stop offset="0" stop-color="#00bbff"/><stop offset=".0072" stop-color="#00bbff"/><stop offset=".0433" stop-color="#1ab9ff"/><stop offset=".1516" stop-color="#72b2ff"/><stop offset=".2238" stop-color="#b6adff"/><stop offset=".2924" stop-color="#ffa8fe"/><stop offset=".3285" stop-color="#ff8dda"/><stop offset=".3899" stop-color="#ff6bac"/><stop offset=".4549" stop-color="#ff5289"/><stop offset=".5343" stop-color="#ff3b6a"/><stop offset=".6354" stop-color="#ff274e"/><stop offset=".7401" stop-color="#ff1739"/><stop offset="1" stop-color="#ff0019"/></linearGradient>
<linearGradient id="h99" gradientUnits="userSpaceOnUse" x1="1214" x2="1488" y1="0" y2="0"><stop offset="0" stop-color="#00b7ff"/><stop offset=".0109" stop-color="#02b6ff"/><stop offset=".0547" stop-color="#21b4ff"/><stop offset=".1606" stop-color="#76adff"/><stop offset=".2336" stop-color="#baa8ff"/><stop offset=".2993" stop-color="#ffa2ff"/><stop offset=".3321" stop-color="#ff8bde"/><stop offset=".3978" stop-color="#ff68ad"/><stop offset=".4635" stop-color="#ff4f8a"/><stop offset=".5438" stop-color="#ff396b"/><stop offset=".6204" stop-color="#ff2955"/><stop offset=".7336" stop-color="#ff183d"/><stop offset=".8504" stop-color="#ff0b2b"/><stop offset="1" stop-color="#ff001b"/></linearGradient>
<linearGradient id="h100" gradientUnits="userSpaceOnUse" x1="1214" x2="1483" y1="0" y2="0"><stop offset="0" stop-color="#00b2ff"/><stop offset=".0074" stop-color="#01b2ff"/><stop offset=".0632" stop-color="#28afff"/><stop offset=".1673" stop-color="#7aa8ff"/><stop offset=".2379" stop-color="#baa2ff"/><stop offset=".3048" stop-color="#ff9dff"/><stop offset=".3569" stop-color="#ff7ccf"/><stop offset=".4201" stop-color="#ff5ea5"/><stop offset=".4833" stop-color="#ff4986"/><stop offset=".5539" stop-color="#ff366c"/><stop offset=".6357" stop-color="#ff2655"/><stop offset=".7584" stop-color="#ff153c"/><stop offset="1" stop-color="#ff001d"/></linearGradient>
<linearGradient id="h101" gradientUnits="userSpaceOnUse" x1="1213" x2="1479" y1="0" y2="0"><stop offset="0" stop-color="#00aeff"/><stop offset=".0075" stop-color="#00aeff"/><stop offset=".0714" stop-color="#2caaff"/><stop offset=".1767" stop-color="#7ea3ff"/><stop offset=".3158" stop-color="#ff95fc"/><stop offset=".3684" stop-color="#ff75cd"/><stop offset=".4248" stop-color="#ff5ca8"/><stop offset=".4925" stop-color="#ff4687"/><stop offset=".5639" stop-color="#ff346d"/><stop offset=".6504" stop-color="#ff2455"/><stop offset=".7519" stop-color="#ff1640"/><stop offset="1" stop-color="#ff001f"/></linearGradient>
<linearGradient id="h102" gradientUnits="userSpaceOnUse" x1="1212" x2="1474" y1="0" y2="0"><stop offset="0" stop-color="#00aaff"/><stop offset=".0115" stop-color="#02a9ff"/><stop offset=".1145" stop-color="#49a3ff"/><stop offset=".2061" stop-color="#929cff"/><stop offset=".3244" stop-color="#ff90fc"/><stop offset=".3817" stop-color="#ff70cb"/><stop offset=".4313" stop-color="#ff5aab"/><stop offset=".5038" stop-color="#ff4388"/><stop offset=".5725" stop-color="#ff336f"/><stop offset=".7443" stop-color="#ff1745"/><stop offset="1" stop-color="#ff0022"/></linearGradient>
<linearGradient id="h103" gradientUnits="userSpaceOnUse" x1="1212" x2="1470" y1="0" y2="0"><stop offset="0" stop-color="#00a6ff"/><stop offset=".0078" stop-color="#01a5ff"/><stop offset=".1202" stop-color="#4d9eff"/><stop offset=".2171" stop-color="#9997ff"/><stop offset=".3295" stop-color="#ff8bfd"/><stop offset=".3915" stop-color="#ff6ac9"/><stop offset=".4341" stop-color="#ff58ae"/><stop offset=".4922" stop-color="#ff4691"/><stop offset=".5659" stop-color="#ff3375"/><stop offset=".6822" stop-color="#ff1f55"/><stop offset=".7558" stop-color="#ff1546"/><stop offset="1" stop-color="#ff0024"/></linearGradient>
<linearGradient id="h104" gradientUnits="userSpaceOnUse" x1="1211" x2="1465" y1="0" y2="0"><stop offset="0" stop-color="#00a2ff"/><stop offset=".0157" stop-color="#05a1ff"/><stop offset=".063" stop-color="#239eff"/><stop offset=".1654" stop-color="#6b96ff"/><stop offset=".2441" stop-color="#aa90ff"/><stop offset=".3386" stop-color="#ff87fd"/><stop offset=".3898" stop-color="#ff6bd2"/><stop offset=".4409" stop-color="#ff57b1"/><stop offset=".5157" stop-color="#ff408d"/><stop offset=".5906" stop-color="#ff2f72"/><stop offset=".7756" stop-color="#ff1346"/><stop offset="1" stop-color="#ff0027"/></linearGradient>
<linearGradient id="h105" gradientUnits="userSpaceOnUse" x1="1210" x2="1461" y1="0" y2="0"><stop offset="0" stop-color="#009eff"/><stop offset=".0239" stop-color="#099cff"/><stop offset=".1633" stop-color="#6693ff"/><stop offset=".259" stop-color="#b18bff"/><stop offset=".3466" stop-color="#ff82fe"/><stop offset=".4064" stop-color="#ff64cd"/><stop offset=".4502" stop-color="#ff53b2"/><stop offset=".502" stop-color="#ff4398"/><stop offset=".5857" stop-color="#ff3078"/><stop offset=".761" stop-color="#ff144c"/><stop offset="1" stop-color="#ff002a"/></linearGradient>
<linearGradient id="h106" gradientUnits="userSpaceOnUse" x1="1210" x2="1456" y1="0" y2="0"><stop offset="0" stop-color="#009aff"/><stop offset=".0081" stop-color="#0199ff"/><stop offset=".0772" stop-color="#2b95ff"/><stop offset=".1667" stop-color="#678eff"/><stop offset=".2602" stop-color="#ae86ff"/><stop offset=".3537" stop-color="#ff7dfe"/><stop offset=".4187" stop-color="#ff5fcb"/><stop offset=".4553" stop-color="#ff51b5"/><stop offset=".5285" stop-color="#ff3c92"/><stop offset=".5976" stop-color="#ff2d79"/><stop offset=".7602" stop-color="#ff1550"/><stop offset="1" stop-color="#ff002d"/></linearGradient>
<linearGradient id="h107" gradientUnits="userSpaceOnUse" x1="1209" x2="1452" y1="0" y2="0"><stop offset="0" stop-color="#0096ff"/><stop offset=".037" stop-color="#1194ff"/><stop offset=".1687" stop-color="#658aff"/><stop offset=".2757" stop-color="#b581ff"/><stop offset=".3621" stop-color="#ff79ff"/><stop offset=".4156" stop-color="#ff60d4"/><stop offset=".4609" stop-color="#ff4fb8"/><stop offset=".5267" stop-color="#ff3d98"/><stop offset=".5844" stop-color="#ff3082"/><stop offset=".7531" stop-color="#ff1555"/><stop offset="1" stop-color="#ff002f"/></linearGradient>
<linearGradient id="h108" gradientUnits="userSpaceOnUse" x1="1208" x2="1447" y1="0" y2="0"><stop offset="0" stop-color="#0092ff"/><stop offset=".0084" stop-color="#0092ff"/><stop offset=".0377" stop-color="#1090ff"/><stop offset=".1757" stop-color="#6686ff"/><stop offset=".2803" stop-color="#b27dff"/><stop offset=".3724" stop-color="#ff74ff"/><stop offset=".431" stop-color="#ff5ad2"/><stop offset=".4686" stop-color="#ff4dbb"/><stop offset=".523" stop-color="#ff3ea0"/><stop offset=".6067" stop-color="#ff2c80"/><stop offset=".7741" stop-color="#ff1355"/><stop offset="1" stop-color="#ff0032"/></linearGradient>
<linearGradient id="h109" gradientUnits="userSpaceOnUse" x1="1207" x2="1443" y1="0" y2="0"><stop offset="0" stop-color="#008fff"/><stop offset=".0254" stop-color="#088dff"/><stop offset=".178" stop-color="#6482ff"/><stop offset=".2839" stop-color="#af79ff"/><stop offset=".3814" stop-color="#fe6fff"/><stop offset=".428" stop-color="#ff5bdb"/><stop offset=".4915" stop-color="#ff46b5"/><stop offset=".6186" stop-color="#ff2981"/><stop offset=".7924" stop-color="#ff1155"/><stop offset="1" stop-color="#ff0035"/></linearGradient>
<linearGradient id="h110" gradientUnits="userSpaceOnUse" x1="1207" x2="1438" y1="0" y2="0"><stop offset="0" stop-color="#008bff"/><stop offset=".0173" stop-color="#058aff"/><stop offset=".0649" stop-color="#1f87ff"/><stop offset=".2035" stop-color="#737cff"/><stop offset=".303" stop-color="#b973ff"/><stop offset=".3896" stop-color="#fe6bff"/><stop offset=".4459" stop-color="#ff55d6"/><stop offset=".4978" stop-color="#ff44b8"/><stop offset=".619" stop-color="#ff2986"/><stop offset=".7835" stop-color="#ff125b"/><stop offset="1" stop-color="#ff0039"/></linearGradient>
<linearGradient id="h111" gradientUnits="userSpaceOnUse" x1="1206" x2="1434" y1="0" y2="0"><stop offset="0" stop-color="#0088ff"/><stop offset=".0088" stop-color="#0087ff"/><stop offset=".0439" stop-color="#1285ff"/><stop offset=".1842" stop-color="#637aff"/><stop offset=".307" stop-color="#b670ff"/><stop offset=".3991" stop-color="#fe66ff"/><stop offset=".4605" stop-color="#ff50d4"/><stop offset=".5044" stop-color="#ff42bb"/><stop offset=".5658" stop-color="#ff349f"/><stop offset=".6404" stop-color="#ff2584"/><stop offset=".8026" stop-color="#ff105b"/><stop offset="1" stop-color="#ff003c"/></linearGradient>
<linearGradient id="h112" gradientUnits="userSpaceOnUse" x1="1205" x2="1429" y1="0" y2="0"><stop offset="0" stop-color="#0084ff"/><stop offset=".0268" stop-color="#0882ff"/><stop offset=".192" stop-color="#6476ff"/><stop offset=".3125" stop-color="#b36cff"/><stop offset=".4152" stop-color="#ff61fd"/><stop offset=".4643" stop-color="#ff4fda"/><stop offset=".5134" stop-color="#ff41be"/><stop offset=".6339" stop-color="#ff278c"/><stop offset=".7188" stop-color="#ff1a73"/><stop offset=".8304" stop-color="#ff0d5a"/><stop offset="1" stop-color="#ff003f"/></linearGradient>
<linearGradient id="h113" gradientUnits="userSpaceOnUse" x1="1205" x2="1425" y1="0" y2="0"><stop offset="0" stop-color="#0081ff"/><stop offset=".0182" stop-color="#057fff"/><stop offset=".0773" stop-color="#237bff"/><stop offset=".2091" stop-color="#6d71ff"/><stop offset=".3091" stop-color="#ad69ff"/><stop offset=".4227" stop-color="#ff5dfe"/><stop offset=".4773" stop-color="#ff4ad8"/><stop offset=".5409" stop-color="#ff39b6"/><stop offset=".6636" stop-color="#ff2187"/><stop offset=".8045" stop-color="#ff0f63"/><stop offset="1" stop-color="#ff0042"/></linearGradient>
<linearGradient id="h114" gradientUnits="userSpaceOnUse" x1="1204" x2="1420" y1="0" y2="0"><stop offset="0" stop-color="#007dff"/><stop offset=".0093" stop-color="#007dff"/><stop offset=".0509" stop-color="#147aff"/><stop offset=".1991" stop-color="#636fff"/><stop offset=".3472" stop-color="#c062ff"/><stop offset=".4352" stop-color="#ff59fe"/><stop offset=".5185" stop-color="#ff3fc9"/><stop offset=".6343" stop-color="#ff2797"/><stop offset=".7778" stop-color="#ff126e"/><stop offset="1" stop-color="#ff0046"/></linearGradient>
<linearGradient id="h115" gradientUnits="userSpaceOnUse" x1="1203" x2="1416" y1="0" y2="0"><stop offset="0" stop-color="#007aff"/><stop offset=".0094" stop-color="#0079ff"/><stop offset=".0516" stop-color="#1377ff"/><stop offset=".2347" stop-color="#7469ff"/><stop offset=".3521" stop-color="#bd5eff"/><stop offset=".446" stop-color="#ff55fe"/><stop offset=".4977" stop-color="#ff44dc"/><stop offset=".554" stop-color="#ff36be"/><stop offset=".662" stop-color="#ff2293"/><stop offset=".784" stop-color="#ff1271"/><stop offset="1" stop-color="#ff004a"/></linearGradient>
<linearGradient id="h116" gradientUnits="userSpaceOnUse" x1="1203" x2="1411" y1="0" y2="0"><stop offset="0" stop-color="#0077ff"/><stop offset=".0625" stop-color="#1972ff"/><stop offset=".2356" stop-color="#7265ff"/><stop offset=".3462" stop-color="#b45cff"/><stop offset=".4567" stop-color="#ff51ff"/><stop offset=".5481" stop-color="#ff37c8"/><stop offset=".6683" stop-color="#ff2197"/><stop offset=".7933" stop-color="#ff1174"/><stop offset="1" stop-color="#ff004e"/></linearGradient>
<linearGradient id="h117" gradientUnits="userSpaceOnUse" x1="1202" x2="1407" y1="0" y2="0"><stop offset="0" stop-color="#0074ff"/><stop offset=".0098" stop-color="#0073ff"/><stop offset=".0634" stop-color="#186fff"/><stop offset=".2146" stop-color="#6364ff"/><stop offset=".3024" stop-color="#945dff"/><stop offset=".4683" stop-color="#ff4dff"/><stop offset=".5561" stop-color="#ff36cb"/><stop offset=".6732" stop-color="#ff209b"/><stop offset=".8049" stop-color="#ff0f76"/><stop offset="1" stop-color="#ff0052"/></linearGradient>
<linearGradient id="h118" gradientUnits="userSpaceOnUse" x1="1201" x2="1402" y1="0" y2="0"><stop offset="0" stop-color="#0070ff"/><stop offset=".01" stop-color="#0070ff"/><stop offset=".0597" stop-color="#156dff"/><stop offset=".2338" stop-color="#6960ff"/><stop offset=".3284" stop-color="#9d58ff"/><stop offset=".4826" stop-color="#fe49ff"/><stop offset=".5423" stop-color="#ff39db"/><stop offset=".597" stop-color="#ff2dc0"/><stop offset=".7065" stop-color="#ff1b97"/><stop offset=".8209" stop-color="#ff0e78"/><stop offset="1" stop-color="#ff0056"/></linearGradient>
<linearGradient id="h119" gradientUnits="userSpaceOnUse" x1="1201" x2="1398" y1="0" y2="0"><stop offset="0" stop-color="#006dff"/><stop offset=".0254" stop-color="#076cff"/><stop offset=".1168" stop-color="#2f65ff"/><stop offset=".2487" stop-color="#6f5bff"/><stop offset=".3553" stop-color="#a952ff"/><stop offset=".4924" stop-color="#fe45ff"/><stop offset=".6041" stop-color="#ff2bc3"/><stop offset=".7107" stop-color="#ff1a9b"/><stop offset=".868" stop-color="#ff0972"/><stop offset="1" stop-color="#ff005a"/></linearGradient>
<linearGradient id="h120" gradientUnits="userSpaceOnUse" x1="1200" x2="1393" y1="0" y2="0"><stop offset="0" stop-color="#006aff"/><stop offset=".0104" stop-color="#006aff"/><stop offset=".0777" stop-color="#1c65ff"/><stop offset=".2435" stop-color="#6859ff"/><stop offset=".3834" stop-color="#b24dff"/><stop offset=".5078" stop-color="#fe41ff"/><stop offset=".601" stop-color="#ff2ccd"/><stop offset=".7202" stop-color="#ff199f"/><stop offset=".8497" stop-color="#ff0b7c"/><stop offset="1" stop-color="#ff005f"/></linearGradient>
<linearGradient id="h121" gradientUnits="userSpaceOnUse" x1="1199" x2="1389" y1="0" y2="0"><stop offset="0" stop-color="#0067ff"/><stop offset=".0105" stop-color="#0067ff"/><stop offset=".0789" stop-color="#1b62ff"/><stop offset=".2632" stop-color="#6e55ff"/><stop offset=".4158" stop-color="#be48ff"/><stop offset=".5263" stop-color="#ff3dfd"/><stop offset=".6105" stop-color="#ff2ad0"/><stop offset=".7211" stop-color="#ff19a5"/><stop offset=".8632" stop-color="#ff097e"/><stop offset="1" stop-color="#ff0063"/></linearGradient>
<linearGradient id="h122" gradientUnits="userSpaceOnUse" x1="1199" x2="1384" y1="0" y2="0"><stop offset="0" stop-color="#0064ff"/><stop offset=".1027" stop-color="#255eff"/><stop offset=".2541" stop-color="#6753ff"/><stop offset=".3892" stop-color="#aa48ff"/><stop offset=".5405" stop-color="#ff39fe"/><stop offset=".6216" stop-color="#ff28d3"/><stop offset=".7297" stop-color="#ff18a9"/><stop offset=".8595" stop-color="#ff0a85"/><stop offset="1" stop-color="#ff0069"/></linearGradient>
<linearGradient id="h123" gradientUnits="userSpaceOnUse" x1="1198" x2="1380" y1="0" y2="0"><stop offset="0" stop-color="#0061ff"/><stop offset=".1044" stop-color="#245bff"/><stop offset=".2967" stop-color="#774dff"/><stop offset=".4121" stop-color="#b043ff"/><stop offset=".5549" stop-color="#ff36fe"/><stop offset=".6593" stop-color="#ff22ca"/><stop offset=".7527" stop-color="#ff15a8"/><stop offset=".8736" stop-color="#ff0887"/><stop offset="1" stop-color="#ff006d"/></linearGradient>
<linearGradient id="h124" gradientUnits="userSpaceOnUse" x1="1197" x2="1375" y1="0" y2="0"><stop offset="0" stop-color="#005fff"/><stop offset=".0112" stop-color="#005eff"/><stop offset=".0618" stop-color="#125bff"/><stop offset=".2416" stop-color="#5a4eff"/><stop offset=".4045" stop-color="#a542ff"/><stop offset=".573" stop-color="#ff32ff"/><stop offset=".6461" stop-color="#ff24d9"/><stop offset=".7528" stop-color="#ff15b0"/><stop offset=".8764" stop-color="#ff088d"/><stop offset="1" stop-color="#ff0073"/></linearGradient>
<linearGradient id="h125" gradientUnits="userSpaceOnUse" x1="1196" x2="1371" y1="0" y2="0"><stop offset="0" stop-color="#005cff"/><stop offset=".0171" stop-color="#015bff"/><stop offset=".0457" stop-color="#0b59ff"/><stop offset=".2686" stop-color="#624aff"/><stop offset=".4571" stop-color="#b93bff"/><stop offset=".5886" stop-color="#ff2fff"/><stop offset=".6857" stop-color="#ff1ed0"/><stop offset=".7829" stop-color="#ff11ad"/><stop offset=".9086" stop-color="#ff058b"/><stop offset="1" stop-color="#ff0078"/></linearGradient>
<linearGradient id="h126" gradientUnits="userSpaceOnUse" x1="1196" x2="1366" y1="0" y2="0"><stop offset="0" stop-color="#0059ff"/><stop offset=".1" stop-color="#1f53ff"/><stop offset=".3059" stop-color="#6f45ff"/><stop offset=".4765" stop-color="#bc37ff"/><stop offset=".6059" stop-color="#ff2bff"/><stop offset=".7" stop-color="#ff1cd3"/><stop offset=".7824" stop-color="#ff12b5"/><stop offset=".9" stop-color="#ff0694"/><stop offset="1" stop-color="#ff007f"/></linearGradient>
<linearGradient id="h127" gradientUnits="userSpaceOnUse" x1="1195" x2="1362" y1="0" y2="0"><stop offset="0" stop-color="#0056ff"/><stop offset=".012" stop-color="#0056ff"/><stop offset=".0958" stop-color="#1c51ff"/><stop offset=".2934" stop-color="#6643ff"/><stop offset=".4671" stop-color="#b136ff"/><stop offset=".6228" stop-color="#fe28ff"/><stop offset=".7246" stop-color="#ff18d1"/><stop offset=".8144" stop-color="#ff0eb2"/><stop offset="1" stop-color="#ff0084"/></linearGradient>
<linearGradient id="h128" gradientUnits="userSpaceOnUse" x1="1194" x2="1357" y1="0" y2="0"><stop offset="0" stop-color="#0054ff"/><stop offset=".0184" stop-color="#0153ff"/><stop offset=".092" stop-color="#194eff"/><stop offset=".3252" stop-color="#6e3fff"/><stop offset=".4908" stop-color="#b432ff"/><stop offset=".6442" stop-color="#fe25ff"/><stop offset=".7914" stop-color="#ff11c3"/><stop offset=".908" stop-color="#ff06a0"/><stop offset="1" stop-color="#ff008b"/></linearGradient>
<linearGradient id="h129" gradientUnits="userSpaceOnUse" x1="1194" x2="1353" y1="0" y2="0"><stop offset="0" stop-color="#0051ff"/><stop offset=".1509" stop-color="#2d48ff"/><stop offset=".3522" stop-color="#763aff"/><stop offset=".5346" stop-color="#c22cff"/><stop offset=".6604" stop-color="#fe21ff"/><stop offset=".805" stop-color="#ff0fc5"/><stop offset="1" stop-color="#ff0091"/></linearGradient>
<linearGradient id="h130" gradientUnits="userSpaceOnUse" x1="1193" x2="1348" y1="0" y2="0"><stop offset="0" stop-color="#004fff"/><stop offset=".0129" stop-color="#004eff"/><stop offset=".1548" stop-color="#2c45ff"/><stop offset=".3419" stop-color="#6d39ff"/><stop offset=".5097" stop-color="#af2dff"/><stop offset=".6903" stop-color="#ff1dfe"/><stop offset=".8129" stop-color="#ff0ecc"/><stop offset="1" stop-color="#ff0099"/></linearGradient>
<linearGradient id="h131" gradientUnits="userSpaceOnUse" x1="1192" x2="1344" y1="0" y2="0"><stop offset="0" stop-color="#004cff"/><stop offset=".0197" stop-color="#014bff"/><stop offset=".1579" stop-color="#2b43ff"/><stop offset=".3421" stop-color="#6937ff"/><stop offset=".5526" stop-color="#ba28ff"/><stop offset=".7105" stop-color="#ff1afe"/><stop offset=".8224" stop-color="#ff0dd1"/><stop offset="1" stop-color="#ff009f"/></linearGradient>
<linearGradient id="h132" gradientUnits="userSpaceOnUse" x1="1192" x2="1339" y1="0" y2="0"><stop offset="0" stop-color="#0049ff"/><stop offset=".1565" stop-color="#2a41ff"/><stop offset=".3605" stop-color="#6c34ff"/><stop offset=".5782" stop-color="#bd24ff"/><stop offset=".7347" stop-color="#ff17fe"/><stop offset=".8707" stop-color="#ff09cb"/><stop offset="1" stop-color="#ff00a8"/></linearGradient>
<linearGradient id="h133" gradientUnits="userSpaceOnUse" x1="1191" x2="1335" y1="0" y2="0"><stop offset="0" stop-color="#0047ff"/><stop offset=".0139" stop-color="#0046ff"/><stop offset=".1597" stop-color="#293eff"/><stop offset=".4167" stop-color="#7b2eff"/><stop offset=".5764" stop-color="#b523ff"/><stop offset=".7569" stop-color="#ff14ff"/><stop offset=".8542" stop-color="#ff0ad9"/><stop offset="1" stop-color="#ff00af"/></linearGradient>
<linearGradient id="h134" gradientUnits="userSpaceOnUse" x1="1190" x2="1331" y1="0" y2="0"><stop offset="0" stop-color="#0045ff"/><stop offset=".0284" stop-color="#0343ff"/><stop offset=".1206" stop-color="#1c3eff"/><stop offset=".3546" stop-color="#6230ff"/><stop offset=".5816" stop-color="#b021ff"/><stop offset=".7801" stop-color="#ff11ff"/><stop offset=".8936" stop-color="#ff06d5"/><stop offset="1" stop-color="#ff00b7"/></linearGradient>
<linearGradient id="h135" gradientUnits="userSpaceOnUse" x1="1190" x2="1326" y1="0" y2="0"><stop offset="0" stop-color="#0042ff"/><stop offset=".0441" stop-color="#0840ff"/><stop offset=".375" stop-color="#652dff"/><stop offset=".5882" stop-color="#ab1fff"/><stop offset=".8088" stop-color="#fe0eff"/><stop offset=".8971" stop-color="#ff06df"/><stop offset="1" stop-color="#ff00c1"/></linearGradient>
<linearGradient id="h136" gradientUnits="userSpaceOnUse" x1="1189" x2="1322" y1="0" y2="0"><stop offset="0" stop-color="#0040ff"/><stop offset=".015" stop-color="#003fff"/><stop offset=".2331" stop-color="#3933ff"/><stop offset=".4511" stop-color="#7826ff"/><stop offset=".6316" stop-color="#b31aff"/><stop offset=".8346" stop-color="#fe0bff"/><stop offset="1" stop-color="#ff00ca"/></linearGradient>
<linearGradient id="h137" gradientUnits="userSpaceOnUse" x1="1188" x2="1317" y1="0" y2="0"><stop offset="0" stop-color="#003eff"/><stop offset=".093" stop-color="#1239ff"/><stop offset=".4574" stop-color="#7425ff"/><stop offset=".6822" stop-color="#bb16ff"/><stop offset=".8682" stop-color="#fe08ff"/><stop offset="1" stop-color="#ff00d5"/></linearGradient>
<linearGradient id="h138" gradientUnits="userSpaceOnUse" x1="1188" x2="1313" y1="0" y2="0"><stop offset="0" stop-color="#003bff"/><stop offset=".104" stop-color="#1536ff"/><stop offset=".48" stop-color="#7722ff"/><stop offset=".688" stop-color="#b614ff"/><stop offset=".896" stop-color="#fd05ff"/><stop offset="1" stop-color="#ff00de"/></linearGradient>
<linearGradient id="h139" gradientUnits="userSpaceOnUse" x1="1187" x2="1308" y1="0" y2="0"><stop offset="0" stop-color="#0039ff"/><stop offset=".124" stop-color="#1833ff"/><stop offset=".4545" stop-color="#6a22ff"/><stop offset=".7438" stop-color="#be10ff"/><stop offset=".9339" stop-color="#fd03ff"/><stop offset="1" stop-color="#ff00eb"/></linearGradient>
<linearGradient id="h140" gradientUnits="userSpaceOnUse" x1="1186" x2="1304" y1="0" y2="0"><stop offset="0" stop-color="#0037ff"/><stop offset=".0847" stop-color="#0e33ff"/><stop offset=".3898" stop-color="#5524ff"/><stop offset=".6695" stop-color="#a014ff"/><stop offset=".9661" stop-color="#fd00ff"/><stop offset="1" stop-color="#ff00f6"/></linearGradient>
<linearGradient id="h141" gradientUnits="userSpaceOnUse" x1="1186" x2="1299" y1="0" y2="0"><stop offset="0" stop-color="#0034ff"/><stop offset=".1593" stop-color="#1e2dff"/><stop offset=".5221" stop-color="#721bff"/><stop offset=".8319" stop-color="#c609ff"/><stop offset="1" stop-color="#fa00ff"/></linearGradient>
<linearGradient id="h142" gradientUnits="userSpaceOnUse" x1="1185" x2="1295" y1="0" y2="0"><stop offset="0" stop-color="#0032ff"/><stop offset=".1818" stop-color="#212aff"/><stop offset=".5182" stop-color="#6c1aff"/><stop offset=".7545" stop-color="#a80dff"/><stop offset="1" stop-color="#ee00ff"/></linearGradient>
<linearGradient id="h143" gradientUnits="userSpaceOnUse" x1="1184" x2="1290" y1="0" y2="0"><stop offset="0" stop-color="#0030ff"/><stop offset=".1321" stop-color="#152bff"/><stop offset=".5094" stop-color="#6419ff"/><stop offset=".7642" stop-color="#a10cff"/><stop offset="1" stop-color="#e100ff"/></linearGradient>
<linearGradient id="h144" gradientUnits="userSpaceOnUse" x1="1183" x2="1286" y1="0" y2="0"><stop offset="0" stop-color="#002eff"/><stop offset=".0583" stop-color="#062cff"/><stop offset=".4563" stop-color="#541bff"/><stop offset=".7282" stop-color="#910dff"/><stop offset="1" stop-color="#d600ff"/></linearGradient>
<linearGradient id="h145" gradientUnits="userSpaceOnUse" x1="1183" x2="1281" y1="0" y2="0"><stop offset="0" stop-color="#002cff"/><stop offset=".1633" stop-color="#1926ff"/><stop offset=".5204" stop-color="#5d16ff"/><stop offset="1" stop-color="#c900ff"/></linearGradient>
<linearGradient id="h146" gradientUnits="userSpaceOnUse" x1="1182" x2="1277" y1="0" y2="0"><stop offset="0" stop-color="#002aff"/><stop offset=".0211" stop-color="#0029ff"/><stop offset=".1895" stop-color="#1c23ff"/><stop offset=".5789" stop-color="#6412ff"/><stop offset="1" stop-color="#bf00ff"/></linearGradient>
<linearGradient id="h147" gradientUnits="userSpaceOnUse" x1="1181" x2="1272" y1="0" y2="0"><stop offset="0" stop-color="#0028ff"/><stop offset=".033" stop-color="#0127ff"/><stop offset=".3516" stop-color="#351bff"/><stop offset=".6593" stop-color="#6d0eff"/><stop offset="1" stop-color="#b300ff"/></linearGradient>
<linearGradient id="h148" gradientUnits="userSpaceOnUse" x1="1181" x2="1268" y1="0" y2="0"><stop offset="0" stop-color="#0026ff"/><stop offset=".1149" stop-color="#0e22ff"/><stop offset=".5172" stop-color="#4f13ff"/><stop offset="1" stop-color="#aa00ff"/></linearGradient>
<linearGradient id="h149" gradientUnits="userSpaceOnUse" x1="1180" x2="1263" y1="0" y2="0"><stop offset="0" stop-color="#0024ff"/><stop offset=".0964" stop-color="#0a21ff"/><stop offset=".506" stop-color="#4812ff"/><stop offset="1" stop-color="#9f00ff"/></linearGradient>
<linearGradient id="h150" gradientUnits="userSpaceOnUse" x1="1179" x2="1259" y1="0" y2="0"><stop offset="0" stop-color="#0022ff"/><stop offset=".0375" stop-color="#0121ff"/><stop offset=".4" stop-color="#3415ff"/><stop offset="1" stop-color="#9600ff"/></linearGradient>
<linearGradient id="h151" gradientUnits="userSpaceOnUse" x1="1179" x2="1254" y1="0" y2="0"><stop offset="0" stop-color="#0020ff"/><stop offset=".4133" stop-color="#3313ff"/><stop offset="1" stop-color="#8b00ff"/></linearGradient>
<linearGradient id="h152" gradientUnits="userSpaceOnUse" x1="1178" x2="1250" y1="0" y2="0"><stop offset="0" stop-color="#001eff"/><stop offset=".0278" stop-color="#001dff"/><stop offset=".4444" stop-color="#3411ff"/><stop offset="1" stop-color="#8300ff"/></linearGradient>
<linearGradient id="h153" gradientUnits="userSpaceOnUse" x1="1177" x2="1245" y1="0" y2="0"><stop offset="0" stop-color="#001cff"/><stop offset=".0441" stop-color="#011bff"/><stop offset=".3971" stop-color="#2a11ff"/><stop offset="1" stop-color="#7900ff"/></linearGradient>
<linearGradient id="h154" gradientUnits="userSpaceOnUse" x1="1177" x2="1241" y1="0" y2="0"><stop offset="0" stop-color="#001aff"/><stop offset=".4219" stop-color="#2b0fff"/><stop offset="1" stop-color="#7200ff"/></linearGradient>
<linearGradient id="h155" gradientUnits="userSpaceOnUse" x1="1176" x2="1236" y1="0" y2="0"><stop offset="0" stop-color="#0019ff"/><stop offset=".3333" stop-color="#1e10ff"/><stop offset="1" stop-color="#6800ff"/></linearGradient>
<linearGradient id="h156" gradientUnits="userSpaceOnUse" x1="1175" x2="1232" y1="0" y2="0"><stop offset="0" stop-color="#0017ff"/><stop offset=".3684" stop-color="#1f0eff"/><stop offset="1" stop-color="#6100ff"/></linearGradient>
<linearGradient id="h157" gradientUnits="userSpaceOnUse" x1="1175" x2="1227" y1="0" y2="0"><stop offset="0" stop-color="#0015ff"/><stop offset=".4615" stop-color="#250bff"/><stop offset="1" stop-color="#5800ff"/></linearGradient>
<linearGradient id="h158" gradientUnits="userSpaceOnUse" x1="1174" x2="1223" y1="0" y2="0"><stop offset="0" stop-color="#0013ff"/><stop offset=".1429" stop-color="#0810ff"/><stop offset="1" stop-color="#5100ff"/></linearGradient>
<linearGradient id="h159" gradientUnits="userSpaceOnUse" x1="1173" x2="1218" y1="0" y2="0"><stop offset="0" stop-color="#0012ff"/><stop offset=".2444" stop-color="#0e0dff"/><stop offset="1" stop-color="#4900ff"/></linearGradient>
<linearGradient id="h160" gradientUnits="userSpaceOnUse" x1="1172" x2="1214" y1="0" y2="0"><stop offset="0" stop-color="#0010ff"/><stop offset=".1667" stop-color="#070dff"/><stop offset="1" stop-color="#4200ff"/></linearGradient>
<linearGradient id="h161" gradientUnits="userSpaceOnUse" x1="1172" x2="1209" y1="0" y2="0"><stop offset="0" stop-color="#000eff"/><stop offset="1" stop-color="#3a00ff"/></linearGradient>
<linearGradient id="h162" gradientUnits="userSpaceOnUse" x1="1171" x2="1205" y1="0" y2="0"><stop offset="0" stop-color="#000dff"/><stop offset=".2353" stop-color="#0909ff"/><stop offset="1" stop-color="#3400ff"/></linearGradient>
<linearGradient id="h163" gradientUnits="userSpaceOnUse" x1="1170" x2="1200" y1="0" y2="0"><stop offset="0" stop-color="#000bff"/><stop offset=".1" stop-color="#010aff"/><stop offset="1" stop-color="#2d00ff"/></linearGradient>
<linearGradient id="h164" gradientUnits="userSpaceOnUse" x1="1170" x2="1196" y1="0" y2="0"><stop offset="0" stop-color="#0009ff"/><stop offset="1" stop-color="#2700ff"/></linearGradient>
<linearGradient id="h165" gradientUnits="userSpaceOnUse" x1="1169" x2="1191" y1="0" y2="0"><stop offset="0" stop-color="#0008ff"/><stop offset="1" stop-color="#2000ff"/></linearGradient>
<linearGradient id="h166" gradientUnits="userSpaceOnUse" x1="1168" x2="1187" y1="0" y2="0"><stop offset="0" stop-color="#0006ff"/><stop offset=".1579" stop-color="#0105ff"/><stop offset="1" stop-color="#1a00ff"/></linearGradient>
<linearGradient id="h167" gradientUnits="userSpaceOnUse" x1="1168" x2="1182" y1="0" y2="0"><stop offset="0" stop-color="#0004ff"/><stop offset="1" stop-color="#1300ff"/></linearGradient>
<linearGradient id="h168" gradientUnits="userSpaceOnUse" x1="1167" x2="1178" y1="0" y2="0"><stop offset="0" stop-color="#0003ff"/><stop offset="1" stop-color="#0e00ff"/></linearGradient>
<linearGradient id="h169" gradientUnits="userSpaceOnUse" x1="1167" x2="1173" y1="0" y2="0"><stop offset="0" stop-color="#0001ff"/><stop offset="1" stop-color="#0700ff"/></linearGradient>
</defs>
<g clip-path="url(#loc)"><g shape-rendering="crispEdges">
<rect x="1103" y="59" width="23" height="2" fill="url(#g0)"/>
<rect x="1096" y="61" width="39" height="2" fill="url(#g1)"/>
<rect x="1092" y="63" width="50" height="2" fill="url(#g2)"/>
<rect x="1088" y="65" width="60" height="2" fill="url(#g3)"/>
<rect x="1085" y="67" width="68" height="2" fill="url(#g4)"/>
<rect x="1083" y="69" width="75" height="2" fill="url(#g5)"/>
<rect x="1081" y="71" width="82" height="2" fill="url(#g6)"/>
<rect x="1079" y="73" width="88" height="2" fill="url(#g7)"/>
<rect x="1077" y="75" width="94" height="2" fill="url(#g8)"/>
<rect x="1076" y="77" width="100" height="2" fill="url(#g9)"/>
<rect x="1074" y="79" width="106" height="2" fill="url(#g10)"/>
<rect x="1073" y="81" width="111" height="2" fill="url(#g11)"/>
<rect x="1072" y="83" width="116" height="2" fill="url(#g12)"/>
<rect x="1071" y="85" width="121" height="2" fill="url(#g13)"/>
<rect x="1070" y="87" width="125" height="2" fill="url(#g14)"/>
<rect x="1069" y="89" width="130" height="2" fill="url(#g15)"/>
<rect x="1068" y="91" width="135" height="2" fill="url(#g16)"/>
<rect x="1067" y="93" width="139" height="2" fill="url(#g17)"/>
<rect x="1066" y="95" width="144" height="2" fill="url(#g18)"/>
<rect x="1065" y="97" width="148" height="2" fill="url(#g19)"/>
<rect x="1064" y="99" width="152" height="2" fill="url(#g20)"/>
<rect x="1064" y="101" width="156" height="2" fill="url(#g21)"/>
<rect x="1063" y="103" width="160" height="2" fill="url(#g22)"/>
<rect x="1062" y="105" width="164" height="2" fill="url(#g23)"/>
<rect x="1062" y="107" width="167" height="2" fill="url(#g24)"/>
<rect x="1061" y="109" width="172" height="2" fill="url(#g25)"/>
<rect x="1060" y="111" width="176" height="2" fill="url(#g26)"/>
<rect x="1060" y="113" width="179" height="2" fill="url(#g27)"/>
<rect x="1059" y="115" width="183" height="2" fill="url(#g28)"/>
<rect x="1059" y="117" width="186" height="2" fill="url(#g29)"/>
<rect x="1058" y="119" width="190" height="2" fill="url(#g30)"/>
<rect x="1058" y="121" width="193" height="2" fill="url(#g31)"/>
<rect x="1058" y="123" width="196" height="2" fill="url(#g32)"/>
<rect x="1057" y="125" width="199" height="2" fill="url(#g33)"/>
<rect x="1057" y="127" width="202" height="2" fill="url(#g34)"/>
<rect x="1057" y="129" width="205" height="2" fill="url(#g35)"/>
<rect x="1056" y="131" width="209" height="2" fill="url(#g36)"/>
<rect x="1056" y="133" width="212" height="2" fill="url(#g37)"/>
<rect x="1056" y="135" width="215" height="2" fill="url(#g38)"/>
<rect x="1055" y="137" width="218" height="2" fill="url(#g39)"/>
<rect x="1055" y="139" width="221" height="2" fill="url(#g40)"/>
<rect x="1055" y="141" width="224" height="2" fill="url(#g41)"/>
<rect x="1055" y="143" width="227" height="2" fill="url(#g42)"/>
<rect x="1054" y="145" width="230" height="2" fill="url(#g43)"/>
<rect x="1054" y="147" width="233" height="2" fill="url(#g44)"/>
<rect x="1054" y="149" width="236" height="2" fill="url(#g45)"/>
<rect x="1054" y="151" width="238" height="2" fill="url(#g46)"/>
<rect x="1054" y="153" width="241" height="2" fill="url(#g47)"/>
<rect x="1054" y="155" width="244" height="2" fill="url(#g48)"/>
<rect x="1053" y="157" width="247" height="2" fill="url(#g49)"/>
<rect x="1053" y="159" width="250" height="2" fill="url(#g50)"/>
<rect x="1053" y="161" width="253" height="2" fill="url(#g51)"/>
<rect x="1053" y="163" width="255" height="2" fill="url(#g52)"/>
<rect x="1053" y="165" width="258" height="2" fill="url(#g53)"/>
<rect x="1053" y="167" width="260" height="2" fill="url(#g54)"/>
<rect x="1053" y="169" width="263" height="2" fill="url(#g55)"/>
<rect x="1053" y="171" width="266" height="2" fill="url(#g56)"/>
<rect x="1053" y="173" width="268" height="2" fill="url(#g57)"/>
<rect x="1053" y="175" width="271" height="2" fill="url(#g58)"/>
<rect x="1053" y="177" width="273" height="2" fill="url(#g59)"/>
<rect x="1053" y="179" width="276" height="2" fill="url(#g60)"/>
<rect x="1053" y="181" width="279" height="2" fill="url(#g61)"/>
<rect x="1053" y="183" width="281" height="2" fill="url(#g62)"/>
<rect x="1053" y="185" width="284" height="2" fill="url(#g63)"/>
<rect x="1053" y="187" width="286" height="2" fill="url(#g64)"/>
<rect x="1053" y="189" width="289" height="2" fill="url(#g65)"/>
<rect x="1053" y="191" width="291" height="2" fill="url(#g66)"/>
<rect x="1053" y="193" width="294" height="2" fill="url(#g67)"/>
<rect x="1053" y="195" width="296" height="2" fill="url(#g68)"/>
<rect x="1053" y="197" width="299" height="2" fill="url(#g69)"/>
<rect x="1053" y="199" width="301" height="2" fill="url(#g70)"/>
<rect x="1053" y="201" width="304" height="2" fill="url(#g71)"/>
<rect x="1053" y="203" width="306" height="2" fill="url(#g72)"/>
<rect x="1053" y="205" width="309" height="2" fill="url(#g73)"/>
<rect x="1053" y="207" width="311" height="2" fill="url(#g74)"/>
<rect x="1053" y="209" width="314" height="2" fill="url(#g75)"/>
<rect x="1053" y="211" width="317" height="2" fill="url(#g76)"/>
<rect x="1053" y="213" width="319" height="2" fill="url(#g77)"/>
<rect x="1054" y="215" width="321" height="2" fill="url(#g78)"/>
<rect x="1054" y="217" width="323" height="2" fill="url(#g79)"/>
<rect x="1054" y="219" width="326" height="2" fill="url(#g80)"/>
<rect x="1054" y="221" width="328" height="2" fill="url(#g81)"/>
<rect x="1054" y="223" width="331" height="2" fill="url(#g82)"/>
<rect x="1054" y="225" width="333" height="2" fill="url(#g83)"/>
<rect x="1054" y="227" width="336" height="2" fill="url(#g84)"/>
<rect x="1055" y="229" width="337" height="2" fill="url(#g85)"/>
<rect x="1055" y="231" width="340" height="2" fill="url(#g86)"/>
<rect x="1055" y="233" width="342" height="2" fill="url(#g87)"/>
<rect x="1055" y="235" width="345" height="2" fill="url(#g88)"/>
<rect x="1055" y="237" width="347" height="2" fill="url(#g89)"/>
<rect x="1055" y="239" width="350" height="2" fill="url(#g90)"/>
<rect x="1056" y="241" width="351" height="2" fill="url(#g91)"/>
<rect x="1056" y="243" width="354" height="2" fill="url(#g92)"/>
<rect x="1056" y="245" width="356" height="2" fill="url(#g93)"/>
<rect x="1056" y="247" width="359" height="2" fill="url(#g94)"/>
<rect x="1056" y="249" width="361" height="2" fill="url(#g95)"/>
<rect x="1057" y="251" width="363" height="2" fill="url(#g96)"/>
<rect x="1057" y="253" width="365" height="2" fill="url(#g97)"/>
<rect x="1057" y="255" width="367" height="2" fill="url(#g98)"/>
<rect x="1057" y="257" width="370" height="2" fill="url(#g99)"/>
<rect x="1058" y="259" width="371" height="2" fill="url(#g100)"/>
<rect x="1058" y="261" width="374" height="2" fill="url(#g101)"/>
<rect x="1058" y="263" width="376" height="2" fill="url(#g102)"/>
<rect x="1058" y="265" width="379" height="2" fill="url(#g103)"/>
<rect x="1059" y="267" width="380" height="2" fill="url(#g104)"/>
<rect x="1059" y="269" width="383" height="2" fill="url(#g105)"/>
<rect x="1059" y="271" width="385" height="2" fill="url(#g106)"/>
<rect x="1059" y="273" width="388" height="2" fill="url(#g107)"/>
<rect x="1060" y="275" width="389" height="2" fill="url(#g108)"/>
<rect x="1060" y="277" width="392" height="2" fill="url(#g109)"/>
<rect x="1060" y="279" width="394" height="2" fill="url(#g110)"/>
<rect x="1061" y="281" width="396" height="2" fill="url(#g111)"/>
<rect x="1061" y="283" width="398" height="2" fill="url(#g112)"/>
<rect x="1061" y="285" width="401" height="2" fill="url(#g113)"/>
<rect x="1061" y="287" width="403" height="2" fill="url(#g114)"/>
<rect x="1062" y="289" width="405" height="2" fill="url(#g115)"/>
<rect x="1062" y="291" width="407" height="2" fill="url(#g116)"/>
<rect x="1062" y="293" width="410" height="2" fill="url(#g117)"/>
<rect x="1063" y="295" width="411" height="2" fill="url(#g118)"/>
<rect x="1063" y="297" width="414" height="2" fill="url(#g119)"/>
<rect x="1063" y="299" width="416" height="2" fill="url(#g120)"/>
<rect x="1064" y="301" width="418" height="2" fill="url(#g121)"/>
<rect x="1064" y="303" width="420" height="2" fill="url(#g122)"/>
<rect x="1064" y="305" width="422" height="2" fill="url(#g123)"/>
<rect x="1065" y="307" width="424" height="2" fill="url(#g124)"/>
<rect x="1065" y="309" width="426" height="2" fill="url(#g125)"/>
<rect x="1065" y="311" width="429" height="2" fill="url(#g126)"/>
<rect x="1066" y="313" width="430" height="2" fill="url(#g127)"/>
<rect x="1066" y="315" width="433" height="2" fill="url(#g128)"/>
<rect x="1066" y="317" width="435" height="2" fill="url(#g129)"/>
<rect x="1067" y="319" width="437" height="2" fill="url(#g130)"/>
<rect x="1067" y="321" width="439" height="2" fill="url(#g131)"/>
<rect x="1068" y="323" width="441" height="2" fill="url(#g132)"/>
<rect x="1068" y="325" width="443" height="2" fill="url(#g133)"/>
<rect x="1068" y="327" width="446" height="2" fill="url(#g134)"/>
<rect x="1069" y="329" width="447" height="2" fill="url(#g135)"/>
<rect x="1069" y="331" width="450" height="2" fill="url(#g136)"/>
<rect x="1070" y="333" width="451" height="2" fill="url(#g137)"/>
<rect x="1070" y="335" width="454" height="2" fill="url(#g138)"/>
<rect x="1070" y="337" width="456" height="2" fill="url(#g139)"/>
<rect x="1071" y="339" width="458" height="2" fill="url(#g140)"/>
<rect x="1071" y="341" width="460" height="2" fill="url(#g141)"/>
<rect x="1072" y="343" width="462" height="2" fill="url(#g142)"/>
<rect x="1072" y="345" width="464" height="2" fill="url(#g143)"/>
<rect x="1072" y="347" width="467" height="2" fill="url(#g144)"/>
<rect x="1073" y="349" width="468" height="2" fill="url(#g145)"/>
<rect x="1073" y="351" width="471" height="2" fill="url(#g146)"/>
<rect x="1074" y="353" width="472" height="2" fill="url(#g147)"/>
<rect x="1074" y="355" width="474" height="2" fill="url(#g148)"/>
<rect x="1075" y="357" width="476" height="2" fill="url(#g149)"/>
<rect x="1075" y="359" width="478" height="2" fill="url(#g150)"/>
<rect x="1076" y="361" width="480" height="2" fill="url(#g151)"/>
<rect x="1076" y="363" width="482" height="2" fill="url(#g152)"/>
<rect x="1077" y="365" width="484" height="2" fill="url(#g153)"/>
<rect x="1077" y="367" width="486" height="2" fill="url(#g154)"/>
<rect x="1077" y="369" width="489" height="2" fill="url(#g155)"/>
<rect x="1078" y="371" width="490" height="2" fill="url(#g156)"/>
<rect x="1078" y="373" width="493" height="2" fill="url(#g157)"/>
<rect x="1079" y="375" width="494" height="2" fill="url(#g158)"/>
<rect x="1079" y="377" width="497" height="2" fill="url(#g159)"/>
<rect x="1080" y="379" width="498" height="2" fill="url(#g160)"/>
<rect x="1080" y="381" width="501" height="2" fill="url(#g161)"/>
<rect x="1081" y="383" width="502" height="2" fill="url(#g162)"/>
<rect x="1081" y="385" width="505" height="2" fill="url(#g163)"/>
<rect x="1082" y="387" width="506" height="2" fill="url(#g164)"/>
<rect x="1082" y="389" width="509" height="2" fill="url(#g165)"/>
<rect x="1083" y="391" width="510" height="2" fill="url(#g166)"/>
<rect x="1083" y="393" width="513" height="2" fill="url(#g167)"/>
<rect x="1084" y="395" width="514" height="2" fill="url(#g168)"/>
<rect x="1084" y="397" width="517" height="2" fill="url(#g169)"/>
<rect x="1085" y="399" width="518" height="2" fill="url(#g170)"/>
<rect x="1086" y="401" width="520" height="2" fill="url(#g171)"/>
<rect x="1086" y="403" width="522" height="2" fill="url(#g172)"/>
<rect x="1087" y="405" width="524" height="2" fill="url(#g173)"/>
<rect x="1087" y="407" width="526" height="2" fill="url(#g174)"/>
<rect x="1088" y="409" width="528" height="2" fill="url(#g175)"/>
<rect x="1088" y="411" width="530" height="2" fill="url(#g176)"/>
<rect x="1089" y="413" width="532" height="2" fill="url(#g177)"/>
<rect x="1089" y="415" width="534" height="2" fill="url(#g178)"/>
<rect x="1090" y="417" width="533" height="2" fill="url(#g179)"/>
<rect x="1091" y="419" width="530" height="2" fill="url(#g180)"/>
<rect x="1091" y="421" width="524" height="2" fill="url(#g181)"/>
<rect x="1092" y="423" width="518" height="2" fill="url(#g182)"/>
<rect x="1092" y="425" width="513" height="2" fill="url(#g183)"/>
<rect x="1093" y="427" width="506" height="2" fill="url(#g184)"/>
<rect x="1094" y="429" width="500" height="2" fill="url(#g185)"/>
<rect x="1094" y="431" width="495" height="2" fill="url(#g186)"/>
<rect x="1095" y="433" width="488" height="2" fill="url(#g187)"/>
<rect x="1095" y="435" width="483" height="2" fill="url(#g188)"/>
<rect x="1096" y="437" width="477" height="2" fill="url(#g189)"/>
<rect x="1097" y="439" width="470" height="2" fill="url(#g190)"/>
<rect x="1097" y="441" width="465" height="2" fill="url(#g191)"/>
<rect x="1098" y="443" width="459" height="2" fill="url(#g192)"/>
<rect x="1099" y="445" width="452" height="2" fill="url(#g193)"/>
<rect x="1099" y="447" width="447" height="2" fill="url(#g194)"/>
<rect x="1100" y="449" width="441" height="2" fill="url(#g195)"/>
<rect x="1101" y="451" width="434" height="2" fill="url(#g196)"/>
<rect x="1101" y="453" width="429" height="2" fill="url(#g197)"/>
<rect x="1102" y="455" width="423" height="2" fill="url(#g198)"/>
<rect x="1103" y="457" width="416" height="2" fill="url(#g199)"/>
<rect x="1103" y="459" width="411" height="2" fill="url(#g200)"/>
<rect x="1104" y="461" width="405" height="2" fill="url(#g201)"/>
<rect x="1105" y="463" width="398" height="2" fill="url(#g202)"/>
<rect x="1106" y="465" width="392" height="2" fill="url(#g203)"/>
<rect x="1106" y="467" width="387" height="2" fill="url(#g204)"/>
<rect x="1107" y="469" width="380" height="2" fill="url(#g205)"/>
<rect x="1108" y="471" width="374" height="2" fill="url(#g206)"/>
<rect x="1109" y="473" width="368" height="2" fill="url(#g207)"/>
<rect x="1109" y="475" width="362" height="2" fill="url(#g208)"/>
<rect x="1110" y="477" width="356" height="2" fill="url(#g209)"/>
<rect x="1111" y="479" width="350" height="2" fill="url(#g210)"/>
<rect x="1112" y="481" width="343" height="2" fill="url(#g211)"/>
<rect x="1113" y="483" width="337" height="2" fill="url(#g212)"/>
<rect x="1114" y="485" width="331" height="2" fill="url(#g213)"/>
<rect x="1114" y="487" width="325" height="2" fill="url(#g214)"/>
<rect x="1115" y="489" width="319" height="2" fill="url(#g215)"/>
<rect x="1116" y="491" width="313" height="2" fill="url(#g216)"/>
<rect x="1117" y="493" width="307" height="2" fill="url(#g217)"/>
<rect x="1118" y="495" width="300" height="2" fill="url(#g218)"/>
<rect x="1119" y="497" width="294" height="2" fill="url(#g219)"/>
<rect x="1120" y="499" width="288" height="2" fill="url(#g220)"/>
<rect x="1121" y="501" width="281" height="2" fill="url(#g221)"/>
<rect x="1122" y="503" width="275" height="2" fill="url(#g222)"/>
<rect x="1122" y="505" width="270" height="2" fill="url(#g223)"/>
<rect x="1123" y="507" width="263" height="2" fill="url(#g224)"/>
<rect x="1124" y="509" width="257" height="2" fill="url(#g225)"/>
<rect x="1125" y="511" width="251" height="2" fill="url(#g226)"/>
<rect x="1126" y="513" width="244" height="2" fill="url(#g227)"/>
<rect x="1127" y="515" width="238" height="2" fill="url(#g228)"/>
<rect x="1128" y="517" width="232" height="2" fill="url(#g229)"/>
<rect x="1129" y="519" width="225" height="2" fill="url(#g230)"/>
<rect x="1130" y="521" width="219" height="2" fill="url(#g231)"/>
<rect x="1131" y="523" width="213" height="2" fill="url(#g232)"/>
<rect x="1132" y="525" width="206" height="2" fill="url(#g233)"/>
<rect x="1133" y="527" width="200" height="2" fill="url(#g234)"/>
<rect x="1134" y="529" width="194" height="2" fill="url(#g235)"/>
<rect x="1135" y="531" width="187" height="2" fill="url(#g236)"/>
<rect x="1137" y="533" width="180" height="2" fill="url(#g237)"/>
<rect x="1138" y="535" width="174" height="2" fill="url(#g238)"/>
<rect x="1139" y="537" width="167" height="2" fill="url(#g239)"/>
<rect x="1140" y="539" width="161" height="2" fill="url(#g240)"/>
<rect x="1141" y="541" width="155" height="2" fill="url(#g241)"/>
<rect x="1143" y="543" width="147" height="2" fill="url(#g242)"/>
<rect x="1144" y="545" width="141" height="2" fill="url(#g243)"/>
<rect x="1145" y="547" width="135" height="2" fill="url(#g244)"/>
<rect x="1147" y="549" width="127" height="2" fill="url(#g245)"/>
<rect x="1148" y="551" width="121" height="2" fill="url(#g246)"/>
<rect x="1150" y="553" width="114" height="2" fill="url(#g247)"/>
<rect x="1151" y="555" width="107" height="2" fill="url(#g248)"/>
<rect x="1153" y="557" width="100" height="2" fill="url(#g249)"/>
<rect x="1155" y="559" width="93" height="2" fill="url(#g250)"/>
<rect x="1156" y="561" width="86" height="2" fill="url(#g251)"/>
<rect x="1158" y="563" width="79" height="2" fill="url(#g252)"/>
<rect x="1161" y="565" width="71" height="2" fill="url(#g253)"/>
<rect x="1163" y="567" width="64" height="2" fill="url(#g254)"/>
<rect x="1165" y="569" width="56" height="2" fill="url(#g255)"/>
<rect x="1168" y="571" width="48" height="2" fill="url(#g256)"/>
<rect x="1171" y="573" width="40" height="2" fill="url(#g257)"/>
<rect x="1174" y="575" width="31" height="2" fill="url(#g258)"/>
<rect x="1176" y="577" width="24" height="2" fill="url(#g259)"/>
<rect x="1179" y="579" width="16" height="2" fill="url(#g260)"/>
<rect x="1182" y="581" width="7" height="2" fill="url(#g261)"/>
</g>
<g clip-path="url(#tri)"><g shape-rendering="crispEdges">
<rect x="1282" y="207" width="7" height="2" fill="url(#h0)"/>
<rect x="1282" y="209" width="10" height="2" fill="url(#h1)"/>
<rect x="1281" y="211" width="14" height="2" fill="url(#h2)"/>
<rect x="1280" y="213" width="18" height="2" fill="url(#h3)"/>
<rect x="1280" y="215" width="21" height="2" fill="url(#h4)"/>
<rect x="1279" y="217" width="25" height="2" fill="url(#h5)"/>
<rect x="1278" y="219" width="29" height="2" fill="url(#h6)"/>
<rect x="1278" y="221" width="33" height="2" fill="url(#h7)"/>
<rect x="1277" y="223" width="37" height="2" fill="url(#h8)"/>
<rect x="1276" y="225" width="41" height="2" fill="url(#h9)"/>
<rect x="1275" y="227" width="45" height="2" fill="url(#h10)"/>
<rect x="1275" y="229" width="48" height="2" fill="url(#h11)"/>
<rect x="1274" y="231" width="52" height="2" fill="url(#h12)"/>
<rect x="1273" y="233" width="56" height="2" fill="url(#h13)"/>
<rect x="1273" y="235" width="59" height="2" fill="url(#h14)"/>
<rect x="1272" y="237" width="63" height="2" fill="url(#h15)"/>
<rect x="1271" y="239" width="68" height="2" fill="url(#h16)"/>
<rect x="1271" y="241" width="71" height="2" fill="url(#h17)"/>
<rect x="1270" y="243" width="75" height="2" fill="url(#h18)"/>
<rect x="1269" y="245" width="79" height="2" fill="url(#h19)"/>
<rect x="1269" y="247" width="82" height="2" fill="url(#h20)"/>
<rect x="1268" y="249" width="86" height="2" fill="url(#h21)"/>
<rect x="1267" y="251" width="90" height="2" fill="url(#h22)"/>
<rect x="1267" y="253" width="93" height="2" fill="url(#h23)"/>
<rect x="1266" y="255" width="97" height="2" fill="url(#h24)"/>
<rect x="1265" y="257" width="102" height="2" fill="url(#h25)"/>
<rect x="1264" y="259" width="106" height="2" fill="url(#h26)"/>
<rect x="1264" y="261" width="109" height="2" fill="url(#h27)"/>
<rect x="1263" y="263" width="113" height="2" fill="url(#h28)"/>
<rect x="1262" y="265" width="117" height="2" fill="url(#h29)"/>
<rect x="1262" y="267" width="120" height="2" fill="url(#h30)"/>
<rect x="1261" y="269" width="124" height="2" fill="url(#h31)"/>
<rect x="1260" y="271" width="128" height="2" fill="url(#h32)"/>
<rect x="1260" y="273" width="131" height="2" fill="url(#h33)"/>
<rect x="1259" y="275" width="136" height="2" fill="url(#h34)"/>
<rect x="1258" y="277" width="140" height="2" fill="url(#h35)"/>
<rect x="1258" y="279" width="143" height="2" fill="url(#h36)"/>
<rect x="1257" y="281" width="147" height="2" fill="url(#h37)"/>
<rect x="1256" y="283" width="151" height="2" fill="url(#h38)"/>
<rect x="1256" y="285" width="154" height="2" fill="url(#h39)"/>
<rect x="1255" y="287" width="158" height="2" fill="url(#h40)"/>
<rect x="1254" y="289" width="162" height="2" fill="url(#h41)"/>
<rect x="1253" y="291" width="166" height="2" fill="url(#h42)"/>
<rect x="1253" y="293" width="170" height="2" fill="url(#h43)"/>
<rect x="1252" y="295" width="174" height="2" fill="url(#h44)"/>
<rect x="1251" y="297" width="178" height="2" fill="url(#h45)"/>
<rect x="1251" y="299" width="181" height="2" fill="url(#h46)"/>
<rect x="1250" y="301" width="185" height="2" fill="url(#h47)"/>
<rect x="1249" y="303" width="189" height="2" fill="url(#h48)"/>
<rect x="1249" y="305" width="192" height="2" fill="url(#h49)"/>
<rect x="1248" y="307" width="196" height="2" fill="url(#h50)"/>
<rect x="1247" y="309" width="201" height="2" fill="url(#h51)"/>
<rect x="1247" y="311" width="204" height="2" fill="url(#h52)"/>
<rect x="1246" y="313" width="208" height="2" fill="url(#h53)"/>
<rect x="1245" y="315" width="212" height="2" fill="url(#h54)"/>
<rect x="1245" y="317" width="215" height="2" fill="url(#h55)"/>
<rect x="1244" y="319" width="219" height="2" fill="url(#h56)"/>
<rect x="1243" y="321" width="223" height="2" fill="url(#h57)"/>
<rect x="1243" y="323" width="226" height="2" fill="url(#h58)"/>
<rect x="1242" y="325" width="230" height="2" fill="url(#h59)"/>
<rect x="1241" y="327" width="235" height="2" fill="url(#h60)"/>
<rect x="1240" y="329" width="239" height="2" fill="url(#h61)"/>
<rect x="1240" y="331" width="242" height="2" fill="url(#h62)"/>
<rect x="1239" y="333" width="246" height="2" fill="url(#h63)"/>
<rect x="1238" y="335" width="250" height="2" fill="url(#h64)"/>
<rect x="1238" y="337" width="253" height="2" fill="url(#h65)"/>
<rect x="1237" y="339" width="257" height="2" fill="url(#h66)"/>
<rect x="1236" y="341" width="261" height="2" fill="url(#h67)"/>
<rect x="1236" y="343" width="264" height="2" fill="url(#h68)"/>
<rect x="1235" y="345" width="269" height="2" fill="url(#h69)"/>
<rect x="1234" y="347" width="273" height="2" fill="url(#h70)"/>
<rect x="1234" y="349" width="276" height="2" fill="url(#h71)"/>
<rect x="1233" y="351" width="280" height="2" fill="url(#h72)"/>
<rect x="1232" y="353" width="284" height="2" fill="url(#h73)"/>
<rect x="1232" y="355" width="287" height="2" fill="url(#h74)"/>
<rect x="1231" y="357" width="291" height="2" fill="url(#h75)"/>
<rect x="1230" y="359" width="295" height="2" fill="url(#h76)"/>
<rect x="1229" y="361" width="299" height="2" fill="url(#h77)"/>
<rect x="1229" y="363" width="303" height="2" fill="url(#h78)"/>
<rect x="1228" y="365" width="307" height="2" fill="url(#h79)"/>
<rect x="1227" y="367" width="311" height="2" fill="url(#h80)"/>
<rect x="1227" y="369" width="314" height="2" fill="url(#h81)"/>
<rect x="1226" y="371" width="318" height="2" fill="url(#h82)"/>
<rect x="1225" y="373" width="322" height="2" fill="url(#h83)"/>
<rect x="1225" y="375" width="325" height="2" fill="url(#h84)"/>
<rect x="1224" y="377" width="326" height="2" fill="url(#h85)"/>
<rect x="1223" y="379" width="323" height="2" fill="url(#h86)"/>
<rect x="1223" y="381" width="318" height="2" fill="url(#h87)"/>
<rect x="1222" y="383" width="315" height="2" fill="url(#h88)"/>
<rect x="1221" y="385" width="311" height="2" fill="url(#h89)"/>
<rect x="1221" y="387" width="307" height="2" fill="url(#h90)"/>
<rect x="1220" y="389" width="303" height="2" fill="url(#h91)"/>
<rect x="1219" y="391" width="300" height="2" fill="url(#h92)"/>
<rect x="1218" y="393" width="296" height="2" fill="url(#h93)"/>
<rect x="1218" y="395" width="292" height="2" fill="url(#h94)"/>
<rect x="1217" y="397" width="288" height="2" fill="url(#h95)"/>
<rect x="1216" y="399" width="285" height="2" fill="url(#h96)"/>
<rect x="1216" y="401" width="281" height="2" fill="url(#h97)"/>
<rect x="1215" y="403" width="277" height="2" fill="url(#h98)"/>
<rect x="1214" y="405" width="274" height="2" fill="url(#h99)"/>
<rect x="1214" y="407" width="269" height="2" fill="url(#h100)"/>
<rect x="1213" y="409" width="266" height="2" fill="url(#h101)"/>
<rect x="1212" y="411" width="262" height="2" fill="url(#h102)"/>
<rect x="1212" y="413" width="258" height="2" fill="url(#h103)"/>
<rect x="1211" y="415" width="254" height="2" fill="url(#h104)"/>
<rect x="1210" y="417" width="251" height="2" fill="url(#h105)"/>
<rect x="1210" y="419" width="246" height="2" fill="url(#h106)"/>
<rect x="1209" y="421" width="243" height="2" fill="url(#h107)"/>
<rect x="1208" y="423" width="239" height="2" fill="url(#h108)"/>
<rect x="1207" y="425" width="236" height="2" fill="url(#h109)"/>
<rect x="1207" y="427" width="231" height="2" fill="url(#h110)"/>
<rect x="1206" y="429" width="228" height="2" fill="url(#h111)"/>
<rect x="1205" y="431" width="224" height="2" fill="url(#h112)"/>
<rect x="1205" y="433" width="220" height="2" fill="url(#h113)"/>
<rect x="1204" y="435" width="216" height="2" fill="url(#h114)"/>
<rect x="1203" y="437" width="213" height="2" fill="url(#h115)"/>
<rect x="1203" y="439" width="208" height="2" fill="url(#h116)"/>
<rect x="1202" y="441" width="205" height="2" fill="url(#h117)"/>
<rect x="1201" y="443" width="201" height="2" fill="url(#h118)"/>
<rect x="1201" y="445" width="197" height="2" fill="url(#h119)"/>
<rect x="1200" y="447" width="193" height="2" fill="url(#h120)"/>
<rect x="1199" y="449" width="190" height="2" fill="url(#h121)"/>
<rect x="1199" y="451" width="185" height="2" fill="url(#h122)"/>
<rect x="1198" y="453" width="182" height="2" fill="url(#h123)"/>
<rect x="1197" y="455" width="178" height="2" fill="url(#h124)"/>
<rect x="1196" y="457" width="175" height="2" fill="url(#h125)"/>
<rect x="1196" y="459" width="170" height="2" fill="url(#h126)"/>
<rect x="1195" y="461" width="167" height="2" fill="url(#h127)"/>
<rect x="1194" y="463" width="163" height="2" fill="url(#h128)"/>
<rect x="1194" y="465" width="159" height="2" fill="url(#h129)"/>
<rect x="1193" y="467" width="155" height="2" fill="url(#h130)"/>
<rect x="1192" y="469" width="152" height="2" fill="url(#h131)"/>
<rect x="1192" y="471" width="147" height="2" fill="url(#h132)"/>
<rect x="1191" y="473" width="144" height="2" fill="url(#h133)"/>
<rect x="1190" y="475" width="141" height="2" fill="url(#h134)"/>
<rect x="1190" y="477" width="136" height="2" fill="url(#h135)"/>
<rect x="1189" y="479" width="133" height="2" fill="url(#h136)"/>
<rect x="1188" y="481" width="129" height="2" fill="url(#h137)"/>
<rect x="1188" y="483" width="125" height="2" fill="url(#h138)"/>
<rect x="1187" y="485" width="121" height="2" fill="url(#h139)"/>
<rect x="1186" y="487" width="118" height="2" fill="url(#h140)"/>
<rect x="1186" y="489" width="113" height="2" fill="url(#h141)"/>
<rect x="1185" y="491" width="110" height="2" fill="url(#h142)"/>
<rect x="1184" y="493" width="106" height="2" fill="url(#h143)"/>
<rect x="1183" y="495" width="103" height="2" fill="url(#h144)"/>
<rect x="1183" y="497" width="98" height="2" fill="url(#h145)"/>
<rect x="1182" y="499" width="95" height="2" fill="url(#h146)"/>
<rect x="1181" y="501" width="91" height="2" fill="url(#h147)"/>
<rect x="1181" y="503" width="87" height="2" fill="url(#h148)"/>
<rect x="1180" y="505" width="83" height="2" fill="url(#h149)"/>
<rect x="1179" y="507" width="80" height="2" fill="url(#h150)"/>
<rect x="1179" y="509" width="75" height="2" fill="url(#h151)"/>
<rect x="1178" y="511" width="72" height="2" fill="url(#h152)"/>
<rect x="1177" y="513" width="68" height="2" fill="url(#h153)"/>
<rect x="1177" y="515" width="64" height="2" fill="url(#h154)"/>
<rect x="1176" y="517" width="60" height="2" fill="url(#h155)"/>
<rect x="1175" y="519" width="57" height="2" fill="url(#h156)"/>
<rect x="1175" y="521" width="52" height="2" fill="url(#h157)"/>
<rect x="1174" y="523" width="49" height="2" fill="url(#h158)"/>
<rect x="1173" y="525" width="45" height="2" fill="url(#h159)"/>
<rect x="1172" y="527" width="42" height="2" fill="url(#h160)"/>
<rect x="1172" y="529" width="37" height="2" fill="url(#h161)"/>
<rect x="1171" y="531" width="34" height="2" fill="url(#h162)"/>
<rect x="1170" y="533" width="30" height="2" fill="url(#h163)"/>
<rect x="1170" y="535" width="26" height="2" fill="url(#h164)"/>
<rect x="1169" y="537" width="22" height="2" fill="url(#h165)"/>
<rect x="1168" y="539" width="19" height="2" fill="url(#h166)"/>
<rect x="1168" y="541" width="14" height="2" fill="url(#h167)"/>
<rect x="1167" y="543" width="11" height="2" fill="url(#h168)"/>
<rect x="1167" y="545" width="6" height="2" fill="url(#h169)"/>
</g></g></g>
<defs><clipPath id="insc"><rect x="1508" y="62" width="191" height="156.5"/></clipPath>
<clipPath id="itri"><path d="M2147.8 491.1L1307.7 -48.9L937.1 1031.1Z"/></clipPath>
<linearGradient id="i0" gradientUnits="userSpaceOnUse" x1="1507" x2="1700" y1="0" y2="0"><stop offset="0" stop-color="#549900"/><stop offset=".7876" stop-color="#999900"/><stop offset="1" stop-color="#998700"/></linearGradient>
<linearGradient id="i1" gradientUnits="userSpaceOnUse" x1="1507" x2="1700" y1="0" y2="0"><stop offset="0" stop-color="#559900"/><stop offset=".772" stop-color="#999900"/><stop offset="1" stop-color="#998600"/></linearGradient>
<linearGradient id="i2" gradientUnits="userSpaceOnUse" x1="1507" x2="1700" y1="0" y2="0"><stop offset="0" stop-color="#569900"/><stop offset=".7565" stop-color="#999900"/><stop offset="1" stop-color="#998400"/></linearGradient>
<linearGradient id="i3" gradientUnits="userSpaceOnUse" x1="1507" x2="1700" y1="0" y2="0"><stop offset="0" stop-color="#579900"/><stop offset=".7409" stop-color="#999900"/><stop offset="1" stop-color="#998300"/></linearGradient>
<linearGradient id="i4" gradientUnits="userSpaceOnUse" x1="1507" x2="1700" y1="0" y2="0"><stop offset="0" stop-color="#589900"/><stop offset=".7254" stop-color="#999900"/><stop offset="1" stop-color="#998200"/></linearGradient>
<linearGradient id="i5" gradientUnits="userSpaceOnUse" x1="1507" x2="1700" y1="0" y2="0"><stop offset="0" stop-color="#599901"/><stop offset=".7098" stop-color="#999900"/><stop offset="1" stop-color="#998100"/></linearGradient>
<linearGradient id="i6" gradientUnits="userSpaceOnUse" x1="1507" x2="1700" y1="0" y2="0"><stop offset="0" stop-color="#5a9901"/><stop offset=".6943" stop-color="#999900"/><stop offset="1" stop-color="#997f00"/></linearGradient>
<linearGradient id="i7" gradientUnits="userSpaceOnUse" x1="1507" x2="1700" y1="0" y2="0"><stop offset="0" stop-color="#5b9902"/><stop offset=".6788" stop-color="#999900"/><stop offset="1" stop-color="#997e00"/></linearGradient>
<linearGradient id="i8" gradientUnits="userSpaceOnUse" x1="1507" x2="1700" y1="0" y2="0"><stop offset="0" stop-color="#5c9903"/><stop offset=".6632" stop-color="#999900"/><stop offset="1" stop-color="#997d00"/></linearGradient>
<linearGradient id="i9" gradientUnits="userSpaceOnUse" x1="1507" x2="1700" y1="0" y2="0"><stop offset="0" stop-color="#5d9903"/><stop offset=".6477" stop-color="#999900"/><stop offset="1" stop-color="#997c00"/></linearGradient>
<linearGradient id="i10" gradientUnits="userSpaceOnUse" x1="1507" x2="1700" y1="0" y2="0"><stop offset="0" stop-color="#5e9904"/><stop offset=".6321" stop-color="#999900"/><stop offset="1" stop-color="#997a00"/></linearGradient>
<linearGradient id="i11" gradientUnits="userSpaceOnUse" x1="1507" x2="1700" y1="0" y2="0"><stop offset="0" stop-color="#609905"/><stop offset=".2124" stop-color="#729900"/><stop offset=".6166" stop-color="#999900"/><stop offset="1" stop-color="#997900"/></linearGradient>
<linearGradient id="i12" gradientUnits="userSpaceOnUse" x1="1507" x2="1700" y1="0" y2="0"><stop offset="0" stop-color="#619905"/><stop offset=".601" stop-color="#999900"/><stop offset="1" stop-color="#997800"/></linearGradient>
<linearGradient id="i13" gradientUnits="userSpaceOnUse" x1="1507" x2="1700" y1="0" y2="0"><stop offset="0" stop-color="#629906"/><stop offset=".2746" stop-color="#7a9900"/><stop offset=".5855" stop-color="#999900"/><stop offset="1" stop-color="#997700"/></linearGradient>
<linearGradient id="i14" gradientUnits="userSpaceOnUse" x1="1507" x2="1700" y1="0" y2="0"><stop offset="0" stop-color="#639907"/><stop offset=".3057" stop-color="#7f9900"/><stop offset=".5751" stop-color="#999900"/><stop offset="1" stop-color="#997600"/></linearGradient>
<linearGradient id="i15" gradientUnits="userSpaceOnUse" x1="1507" x2="1700" y1="0" y2="0"><stop offset="0" stop-color="#649907"/><stop offset=".5596" stop-color="#999900"/><stop offset="1" stop-color="#997400"/></linearGradient>
<linearGradient id="i16" gradientUnits="userSpaceOnUse" x1="1507" x2="1700" y1="0" y2="0"><stop offset="0" stop-color="#659908"/><stop offset=".544" stop-color="#999900"/><stop offset="1" stop-color="#997300"/></linearGradient>
<linearGradient id="i17" gradientUnits="userSpaceOnUse" x1="1507" x2="1700" y1="0" y2="0"><stop offset="0" stop-color="#669909"/><stop offset=".5285" stop-color="#999900"/><stop offset="1" stop-color="#997200"/></linearGradient>
<linearGradient id="i18" gradientUnits="userSpaceOnUse" x1="1507" x2="1700" y1="0" y2="0"><stop offset="0" stop-color="#679909"/><stop offset=".513" stop-color="#999900"/><stop offset="1" stop-color="#997100"/></linearGradient>
<linearGradient id="i19" gradientUnits="userSpaceOnUse" x1="1507" x2="1700" y1="0" y2="0"><stop offset="0" stop-color="#69990a"/><stop offset=".4974" stop-color="#999900"/><stop offset=".7668" stop-color="#998000"/><stop offset="1" stop-color="#997000"/></linearGradient>
<linearGradient id="i20" gradientUnits="userSpaceOnUse" x1="1507" x2="1700" y1="0" y2="0"><stop offset="0" stop-color="#6a990b"/><stop offset=".4819" stop-color="#999901"/><stop offset=".7254" stop-color="#998200"/><stop offset="1" stop-color="#996f00"/></linearGradient>
<linearGradient id="i21" gradientUnits="userSpaceOnUse" x1="1507" x2="1700" y1="0" y2="0"><stop offset="0" stop-color="#6b990c"/><stop offset=".4663" stop-color="#999902"/><stop offset="1" stop-color="#996d00"/></linearGradient>
<linearGradient id="i22" gradientUnits="userSpaceOnUse" x1="1507" x2="1700" y1="0" y2="0"><stop offset="0" stop-color="#6c990c"/><stop offset=".4508" stop-color="#999903"/><stop offset=".7047" stop-color="#998100"/><stop offset="1" stop-color="#996c00"/></linearGradient>
<linearGradient id="i23" gradientUnits="userSpaceOnUse" x1="1507" x2="1700" y1="0" y2="0"><stop offset="0" stop-color="#6e990d"/><stop offset=".4352" stop-color="#999904"/><stop offset=".7254" stop-color="#997e00"/><stop offset="1" stop-color="#996b00"/></linearGradient>
<linearGradient id="i24" gradientUnits="userSpaceOnUse" x1="1507" x2="1700" y1="0" y2="0"><stop offset="0" stop-color="#6f990e"/><stop offset=".4197" stop-color="#999905"/><stop offset=".6839" stop-color="#998000"/><stop offset="1" stop-color="#996a00"/></linearGradient>
<linearGradient id="i25" gradientUnits="userSpaceOnUse" x1="1507" x2="1700" y1="0" y2="0"><stop offset="0" stop-color="#70990f"/><stop offset=".4041" stop-color="#999906"/><stop offset=".6788" stop-color="#997f00"/><stop offset="1" stop-color="#996900"/></linearGradient>
<linearGradient id="i26" gradientUnits="userSpaceOnUse" x1="1507" x2="1700" y1="0" y2="0"><stop offset="0" stop-color="#71990f"/><stop offset=".3886" stop-color="#999907"/><stop offset=".6632" stop-color="#997f01"/><stop offset="1" stop-color="#996800"/></linearGradient>
<linearGradient id="i27" gradientUnits="userSpaceOnUse" x1="1507" x2="1700" y1="0" y2="0"><stop offset="0" stop-color="#739910"/><stop offset=".3731" stop-color="#999909"/><stop offset=".658" stop-color="#997e02"/><stop offset="1" stop-color="#996700"/></linearGradient>
<linearGradient id="i28" gradientUnits="userSpaceOnUse" x1="1507" x2="1700" y1="0" y2="0"><stop offset="0" stop-color="#749911"/><stop offset=".3575" stop-color="#99990a"/><stop offset=".6788" stop-color="#997b02"/><stop offset="1" stop-color="#996600"/></linearGradient>
<linearGradient id="i29" gradientUnits="userSpaceOnUse" x1="1507" x2="1700" y1="0" y2="0"><stop offset="0" stop-color="#759912"/><stop offset=".342" stop-color="#99990b"/><stop offset=".6373" stop-color="#997d03"/><stop offset="1" stop-color="#996500"/></linearGradient>
<linearGradient id="i30" gradientUnits="userSpaceOnUse" x1="1507" x2="1700" y1="0" y2="0"><stop offset="0" stop-color="#779913"/><stop offset=".3264" stop-color="#99990c"/><stop offset=".6321" stop-color="#997c04"/><stop offset="1" stop-color="#996400"/></linearGradient>
<linearGradient id="i31" gradientUnits="userSpaceOnUse" x1="1507" x2="1700" y1="0" y2="0"><stop offset="0" stop-color="#789913"/><stop offset=".3109" stop-color="#99990d"/><stop offset=".5907" stop-color="#997e06"/><stop offset="1" stop-color="#996200"/></linearGradient>
<linearGradient id="i32" gradientUnits="userSpaceOnUse" x1="1507" x2="1700" y1="0" y2="0"><stop offset="0" stop-color="#7a9914"/><stop offset=".2953" stop-color="#99990e"/><stop offset=".6114" stop-color="#997b06"/><stop offset="1" stop-color="#996100"/></linearGradient>
<linearGradient id="i33" gradientUnits="userSpaceOnUse" x1="1507" x2="1700" y1="0" y2="0"><stop offset="0" stop-color="#7b9915"/><stop offset=".2798" stop-color="#999910"/><stop offset=".6062" stop-color="#997a07"/><stop offset="1" stop-color="#996000"/></linearGradient>
<linearGradient id="i34" gradientUnits="userSpaceOnUse" x1="1507" x2="1700" y1="0" y2="0"><stop offset="0" stop-color="#7d9916"/><stop offset=".2642" stop-color="#999911"/><stop offset=".5648" stop-color="#997c08"/><stop offset="1" stop-color="#995f00"/></linearGradient>
<linearGradient id="i35" gradientUnits="userSpaceOnUse" x1="1507" x2="1700" y1="0" y2="0"><stop offset="0" stop-color="#7e9917"/><stop offset=".2487" stop-color="#999912"/><stop offset=".5596" stop-color="#997b09"/><stop offset="1" stop-color="#995e00"/></linearGradient>
<linearGradient id="i36" gradientUnits="userSpaceOnUse" x1="1507" x2="1700" y1="0" y2="0"><stop offset="0" stop-color="#809918"/><stop offset=".2332" stop-color="#999913"/><stop offset=".5803" stop-color="#997809"/><stop offset="1" stop-color="#995d01"/></linearGradient>
<linearGradient id="i37" gradientUnits="userSpaceOnUse" x1="1507" x2="1700" y1="0" y2="0"><stop offset="0" stop-color="#819919"/><stop offset=".2176" stop-color="#999914"/><stop offset=".5389" stop-color="#997a0b"/><stop offset="1" stop-color="#995c01"/></linearGradient>
<linearGradient id="i38" gradientUnits="userSpaceOnUse" x1="1507" x2="1700" y1="0" y2="0"><stop offset="0" stop-color="#83991a"/><stop offset=".2021" stop-color="#999916"/><stop offset=".5337" stop-color="#99790b"/><stop offset="1" stop-color="#995b02"/></linearGradient>
<linearGradient id="i39" gradientUnits="userSpaceOnUse" x1="1507" x2="1700" y1="0" y2="0"><stop offset="0" stop-color="#84991b"/><stop offset=".1865" stop-color="#999917"/><stop offset=".5544" stop-color="#99760c"/><stop offset="1" stop-color="#995a02"/></linearGradient>
<linearGradient id="j0" gradientUnits="userSpaceOnUse" x1="1507" x2="1700" y1="0" y2="0"><stop offset="0" stop-color="#8cff00"/><stop offset=".5026" stop-color="#d2ff00"/><stop offset=".7824" stop-color="#feff00"/><stop offset="1" stop-color="#ffe100"/></linearGradient>
<linearGradient id="j1" gradientUnits="userSpaceOnUse" x1="1507" x2="1700" y1="0" y2="0"><stop offset="0" stop-color="#8eff00"/><stop offset=".4611" stop-color="#ceff00"/><stop offset=".7772" stop-color="#ffff00"/><stop offset="1" stop-color="#ffdf00"/></linearGradient>
<linearGradient id="j2" gradientUnits="userSpaceOnUse" x1="1507" x2="1700" y1="0" y2="0"><stop offset="0" stop-color="#90ff00"/><stop offset=".4404" stop-color="#cdff00"/><stop offset=".7617" stop-color="#ffff00"/><stop offset="1" stop-color="#ffdd00"/></linearGradient>
<linearGradient id="j3" gradientUnits="userSpaceOnUse" x1="1507" x2="1700" y1="0" y2="0"><stop offset="0" stop-color="#91ff00"/><stop offset=".7461" stop-color="#ffff00"/><stop offset="1" stop-color="#ffda00"/></linearGradient>
<linearGradient id="j4" gradientUnits="userSpaceOnUse" x1="1507" x2="1700" y1="0" y2="0"><stop offset="0" stop-color="#93ff00"/><stop offset=".7306" stop-color="#ffff00"/><stop offset="1" stop-color="#ffd800"/></linearGradient>
<linearGradient id="j5" gradientUnits="userSpaceOnUse" x1="1507" x2="1700" y1="0" y2="0"><stop offset="0" stop-color="#95ff01"/><stop offset=".715" stop-color="#ffff00"/><stop offset="1" stop-color="#ffd600"/></linearGradient>
<linearGradient id="j6" gradientUnits="userSpaceOnUse" x1="1507" x2="1700" y1="0" y2="0"><stop offset="0" stop-color="#96ff02"/><stop offset=".6995" stop-color="#ffff00"/><stop offset="1" stop-color="#ffd400"/></linearGradient>
<linearGradient id="j7" gradientUnits="userSpaceOnUse" x1="1507" x2="1700" y1="0" y2="0"><stop offset="0" stop-color="#98ff03"/><stop offset=".6839" stop-color="#ffff00"/><stop offset="1" stop-color="#ffd200"/></linearGradient>
<linearGradient id="j8" gradientUnits="userSpaceOnUse" x1="1507" x2="1700" y1="0" y2="0"><stop offset="0" stop-color="#9aff04"/><stop offset=".1244" stop-color="#abff00"/><stop offset=".6684" stop-color="#ffff00"/><stop offset="1" stop-color="#ffd000"/></linearGradient>
<linearGradient id="j9" gradientUnits="userSpaceOnUse" x1="1507" x2="1700" y1="0" y2="0"><stop offset="0" stop-color="#9cff05"/><stop offset=".1554" stop-color="#b2ff00"/><stop offset=".6528" stop-color="#ffff00"/><stop offset="1" stop-color="#ffce00"/></linearGradient>
<linearGradient id="j10" gradientUnits="userSpaceOnUse" x1="1507" x2="1700" y1="0" y2="0"><stop offset="0" stop-color="#9dff06"/><stop offset=".1865" stop-color="#b8ff00"/><stop offset=".6373" stop-color="#ffff00"/><stop offset="1" stop-color="#ffcc00"/></linearGradient>
<linearGradient id="j11" gradientUnits="userSpaceOnUse" x1="1507" x2="1700" y1="0" y2="0"><stop offset="0" stop-color="#9fff08"/><stop offset=".2176" stop-color="#bfff00"/><stop offset=".6218" stop-color="#ffff00"/><stop offset="1" stop-color="#ffca00"/></linearGradient>
<linearGradient id="j12" gradientUnits="userSpaceOnUse" x1="1507" x2="1700" y1="0" y2="0"><stop offset="0" stop-color="#a1ff09"/><stop offset=".2539" stop-color="#c7ff00"/><stop offset=".6062" stop-color="#ffff00"/><stop offset=".8135" stop-color="#ffdf00"/><stop offset="1" stop-color="#ffc800"/></linearGradient>
<linearGradient id="j13" gradientUnits="userSpaceOnUse" x1="1507" x2="1700" y1="0" y2="0"><stop offset="0" stop-color="#a3ff0a"/><stop offset=".285" stop-color="#ceff00"/><stop offset=".5907" stop-color="#ffff00"/><stop offset=".7824" stop-color="#ffe100"/><stop offset="1" stop-color="#ffc600"/></linearGradient>
<linearGradient id="j14" gradientUnits="userSpaceOnUse" x1="1507" x2="1700" y1="0" y2="0"><stop offset="0" stop-color="#a5ff0b"/><stop offset=".3161" stop-color="#d5ff00"/><stop offset=".5751" stop-color="#ffff00"/><stop offset=".7668" stop-color="#ffe100"/><stop offset="1" stop-color="#ffc400"/></linearGradient>
<linearGradient id="j15" gradientUnits="userSpaceOnUse" x1="1507" x2="1700" y1="0" y2="0"><stop offset="0" stop-color="#a7ff0c"/><stop offset=".3472" stop-color="#dcff00"/><stop offset=".5596" stop-color="#ffff00"/><stop offset=".7358" stop-color="#ffe300"/><stop offset="1" stop-color="#ffc200"/></linearGradient>
<linearGradient id="j16" gradientUnits="userSpaceOnUse" x1="1507" x2="1700" y1="0" y2="0"><stop offset="0" stop-color="#a9ff0d"/><stop offset=".3834" stop-color="#e4ff00"/><stop offset=".544" stop-color="#ffff00"/><stop offset=".7409" stop-color="#ffe000"/><stop offset="1" stop-color="#ffc000"/></linearGradient>
<linearGradient id="j17" gradientUnits="userSpaceOnUse" x1="1507" x2="1700" y1="0" y2="0"><stop offset="0" stop-color="#aaff0e"/><stop offset=".4145" stop-color="#ecff00"/><stop offset=".5285" stop-color="#ffff00"/><stop offset=".7461" stop-color="#ffdd00"/><stop offset="1" stop-color="#ffbe00"/></linearGradient>
<linearGradient id="j18" gradientUnits="userSpaceOnUse" x1="1507" x2="1700" y1="0" y2="0"><stop offset="0" stop-color="#acff10"/><stop offset=".513" stop-color="#ffff00"/><stop offset=".7513" stop-color="#ffda00"/><stop offset="1" stop-color="#ffbc00"/></linearGradient>
<linearGradient id="j19" gradientUnits="userSpaceOnUse" x1="1507" x2="1700" y1="0" y2="0"><stop offset="0" stop-color="#aeff11"/><stop offset=".4974" stop-color="#ffff00"/><stop offset=".7202" stop-color="#ffdc00"/><stop offset="1" stop-color="#ffba00"/></linearGradient>
<linearGradient id="j20" gradientUnits="userSpaceOnUse" x1="1507" x2="1700" y1="0" y2="0"><stop offset="0" stop-color="#b0ff12"/><stop offset=".4819" stop-color="#ffff01"/><stop offset=".7254" stop-color="#ffd900"/><stop offset="1" stop-color="#ffb800"/></linearGradient>
<linearGradient id="j21" gradientUnits="userSpaceOnUse" x1="1507" x2="1700" y1="0" y2="0"><stop offset="0" stop-color="#b3ff13"/><stop offset=".4663" stop-color="#ffff03"/><stop offset=".6943" stop-color="#ffdb00"/><stop offset="1" stop-color="#ffb600"/></linearGradient>
<linearGradient id="j22" gradientUnits="userSpaceOnUse" x1="1507" x2="1700" y1="0" y2="0"><stop offset="0" stop-color="#b5ff14"/><stop offset=".4508" stop-color="#ffff05"/><stop offset=".6995" stop-color="#ffd800"/><stop offset="1" stop-color="#ffb500"/></linearGradient>
<linearGradient id="j23" gradientUnits="userSpaceOnUse" x1="1507" x2="1700" y1="0" y2="0"><stop offset="0" stop-color="#b7ff16"/><stop offset=".4352" stop-color="#ffff07"/><stop offset=".7202" stop-color="#ffd300"/><stop offset="1" stop-color="#ffb300"/></linearGradient>
<linearGradient id="j24" gradientUnits="userSpaceOnUse" x1="1507" x2="1700" y1="0" y2="0"><stop offset="0" stop-color="#b9ff17"/><stop offset=".4197" stop-color="#ffff09"/><stop offset=".6736" stop-color="#ffd700"/><stop offset="1" stop-color="#ffb100"/></linearGradient>
<linearGradient id="j25" gradientUnits="userSpaceOnUse" x1="1507" x2="1700" y1="0" y2="0"><stop offset="0" stop-color="#bbff18"/><stop offset=".4041" stop-color="#ffff0b"/><stop offset=".6788" stop-color="#ffd400"/><stop offset="1" stop-color="#ffaf00"/></linearGradient>
<linearGradient id="j26" gradientUnits="userSpaceOnUse" x1="1507" x2="1700" y1="0" y2="0"><stop offset="0" stop-color="#bdff1a"/><stop offset=".3886" stop-color="#ffff0c"/><stop offset=".6477" stop-color="#ffd602"/><stop offset="1" stop-color="#ffad00"/></linearGradient>
<linearGradient id="j27" gradientUnits="userSpaceOnUse" x1="1507" x2="1700" y1="0" y2="0"><stop offset="0" stop-color="#bfff1b"/><stop offset=".3731" stop-color="#ffff0e"/><stop offset=".6528" stop-color="#ffd303"/><stop offset="1" stop-color="#ffab00"/></linearGradient>
<linearGradient id="j28" gradientUnits="userSpaceOnUse" x1="1507" x2="1700" y1="0" y2="0"><stop offset="0" stop-color="#c2ff1c"/><stop offset=".3575" stop-color="#ffff10"/><stop offset=".6736" stop-color="#ffce03"/><stop offset="1" stop-color="#ffaa00"/></linearGradient>
<linearGradient id="j29" gradientUnits="userSpaceOnUse" x1="1507" x2="1700" y1="0" y2="0"><stop offset="0" stop-color="#c4ff1e"/><stop offset=".342" stop-color="#ffff12"/><stop offset=".6269" stop-color="#ffd206"/><stop offset=".7979" stop-color="#ffbd00"/><stop offset="1" stop-color="#ffa800"/></linearGradient>
<linearGradient id="j30" gradientUnits="userSpaceOnUse" x1="1507" x2="1700" y1="0" y2="0"><stop offset="0" stop-color="#c6ff1f"/><stop offset=".3264" stop-color="#ffff14"/><stop offset=".6321" stop-color="#ffcf07"/><stop offset=".829" stop-color="#ffb800"/><stop offset="1" stop-color="#ffa600"/></linearGradient>
<linearGradient id="j31" gradientUnits="userSpaceOnUse" x1="1507" x2="1700" y1="0" y2="0"><stop offset="0" stop-color="#c8ff20"/><stop offset=".3109" stop-color="#ffff16"/><stop offset=".5855" stop-color="#ffd30a"/><stop offset=".8653" stop-color="#ffb200"/><stop offset="1" stop-color="#ffa400"/></linearGradient>
<linearGradient id="j32" gradientUnits="userSpaceOnUse" x1="1507" x2="1700" y1="0" y2="0"><stop offset="0" stop-color="#cbff22"/><stop offset=".2953" stop-color="#ffff18"/><stop offset=".5907" stop-color="#ffd00b"/><stop offset="1" stop-color="#ffa200"/></linearGradient>
<linearGradient id="j33" gradientUnits="userSpaceOnUse" x1="1507" x2="1700" y1="0" y2="0"><stop offset="0" stop-color="#cdff23"/><stop offset=".2798" stop-color="#ffff1a"/><stop offset=".6114" stop-color="#ffcb0b"/><stop offset="1" stop-color="#ffa100"/></linearGradient>
<linearGradient id="j34" gradientUnits="userSpaceOnUse" x1="1507" x2="1700" y1="0" y2="0"><stop offset="0" stop-color="#d0ff25"/><stop offset=".2642" stop-color="#ffff1c"/><stop offset=".5648" stop-color="#ffcf0e"/><stop offset="1" stop-color="#ff9f00"/></linearGradient>
<linearGradient id="j35" gradientUnits="userSpaceOnUse" x1="1507" x2="1700" y1="0" y2="0"><stop offset="0" stop-color="#d2ff26"/><stop offset=".2487" stop-color="#ffff1e"/><stop offset=".5699" stop-color="#ffcc0f"/><stop offset="1" stop-color="#ff9d00"/></linearGradient>
<linearGradient id="j36" gradientUnits="userSpaceOnUse" x1="1507" x2="1700" y1="0" y2="0"><stop offset="0" stop-color="#d5ff28"/><stop offset=".2332" stop-color="#ffff20"/><stop offset=".5751" stop-color="#ffc90f"/><stop offset="1" stop-color="#ff9b01"/></linearGradient>
<linearGradient id="j37" gradientUnits="userSpaceOnUse" x1="1507" x2="1700" y1="0" y2="0"><stop offset="0" stop-color="#d7ff29"/><stop offset=".2176" stop-color="#ffff22"/><stop offset=".5285" stop-color="#ffcd12"/><stop offset=".7772" stop-color="#ffaf09"/><stop offset="1" stop-color="#ff9a02"/></linearGradient>
<linearGradient id="j38" gradientUnits="userSpaceOnUse" x1="1507" x2="1700" y1="0" y2="0"><stop offset="0" stop-color="#daff2b"/><stop offset=".2021" stop-color="#ffff24"/><stop offset=".5337" stop-color="#ffca13"/><stop offset="1" stop-color="#ff9803"/></linearGradient>
<linearGradient id="j39" gradientUnits="userSpaceOnUse" x1="1507" x2="1700" y1="0" y2="0"><stop offset="0" stop-color="#dcff2c"/><stop offset=".1865" stop-color="#ffff26"/><stop offset=".5389" stop-color="#ffc714"/><stop offset="1" stop-color="#ff9604"/></linearGradient>
</defs>
<rect x="1051.8" y="55" width="653.7" height="528.3" fill="none" stroke="#a2a2a2" stroke-width="1.5"/>
<rect x="1051" y="55" width="1.6" height="529.1" fill="#b4b4b4"/>
<rect x="1051" y="582.5" width="654.5" height="1.6" fill="#b4b4b4"/>
<rect x="1050.5" y="583.3" width="1.5" height="6.5" fill="#d0d0d0"/>
<text x="1051.5" y="606.6" font-size="14.4" fill="#ececec" text-anchor="middle" textLength="8.1" lengthAdjust="spacingAndGlyphs">0</text>
<rect x="1046.3" y="582.8" width="5.5" height="1.7" fill="#d0d0d0"/>
<text x="1046.0" y="590.9" font-size="14.4" fill="#ececec" text-anchor="end" textLength="8.1" lengthAdjust="spacingAndGlyphs">0</text>
<rect x="1128.2" y="583.3" width="1.5" height="6.5" fill="#d0d0d0"/>
<text x="1129.2" y="606.6" font-size="14.4" fill="#ececec" text-anchor="middle" textLength="20.2" lengthAdjust="spacingAndGlyphs">0,1</text>
<rect x="1046.3" y="520.9" width="5.5" height="1.7" fill="#d0d0d0"/>
<text x="1046.0" y="528.0" font-size="14.4" fill="#ececec" text-anchor="end" textLength="20.2" lengthAdjust="spacingAndGlyphs">0,1</text>
<rect x="1206.0" y="583.3" width="1.5" height="6.5" fill="#d0d0d0"/>
<text x="1207.0" y="606.6" font-size="14.4" fill="#ececec" text-anchor="middle" textLength="20.2" lengthAdjust="spacingAndGlyphs">0,2</text>
<rect x="1046.3" y="457.9" width="5.5" height="1.7" fill="#d0d0d0"/>
<text x="1046.0" y="465.1" font-size="14.4" fill="#ececec" text-anchor="end" textLength="20.2" lengthAdjust="spacingAndGlyphs">0,2</text>
<rect x="1283.7" y="583.3" width="1.5" height="6.5" fill="#d0d0d0"/>
<text x="1284.8" y="606.6" font-size="14.4" fill="#ececec" text-anchor="middle" textLength="20.2" lengthAdjust="spacingAndGlyphs">0,3</text>
<rect x="1046.3" y="395.1" width="5.5" height="1.7" fill="#d0d0d0"/>
<text x="1046.0" y="402.2" font-size="14.4" fill="#ececec" text-anchor="end" textLength="20.2" lengthAdjust="spacingAndGlyphs">0,3</text>
<rect x="1361.5" y="583.3" width="1.5" height="6.5" fill="#d0d0d0"/>
<text x="1362.5" y="606.6" font-size="14.4" fill="#ececec" text-anchor="middle" textLength="20.2" lengthAdjust="spacingAndGlyphs">0,4</text>
<rect x="1046.3" y="332.1" width="5.5" height="1.7" fill="#d0d0d0"/>
<text x="1046.0" y="339.3" font-size="14.4" fill="#ececec" text-anchor="end" textLength="20.2" lengthAdjust="spacingAndGlyphs">0,4</text>
<rect x="1439.2" y="583.3" width="1.5" height="6.5" fill="#d0d0d0"/>
<text x="1440.2" y="606.6" font-size="14.4" fill="#ececec" text-anchor="middle" textLength="20.2" lengthAdjust="spacingAndGlyphs">0,5</text>
<rect x="1046.3" y="269.2" width="5.5" height="1.7" fill="#d0d0d0"/>
<text x="1046.0" y="276.4" font-size="14.4" fill="#ececec" text-anchor="end" textLength="20.2" lengthAdjust="spacingAndGlyphs">0,5</text>
<rect x="1517.0" y="583.3" width="1.5" height="6.5" fill="#d0d0d0"/>
<text x="1518.0" y="606.6" font-size="14.4" fill="#ececec" text-anchor="middle" textLength="20.2" lengthAdjust="spacingAndGlyphs">0,6</text>
<rect x="1046.3" y="206.4" width="5.5" height="1.7" fill="#d0d0d0"/>
<text x="1046.0" y="213.5" font-size="14.4" fill="#ececec" text-anchor="end" textLength="20.2" lengthAdjust="spacingAndGlyphs">0,6</text>
<rect x="1594.7" y="583.3" width="1.5" height="6.5" fill="#d0d0d0"/>
<text x="1595.8" y="606.6" font-size="14.4" fill="#ececec" text-anchor="middle" textLength="20.2" lengthAdjust="spacingAndGlyphs">0,7</text>
<rect x="1046.3" y="143.5" width="5.5" height="1.7" fill="#d0d0d0"/>
<text x="1046.0" y="150.6" font-size="14.4" fill="#ececec" text-anchor="end" textLength="20.2" lengthAdjust="spacingAndGlyphs">0,7</text>
<rect x="1672.5" y="583.3" width="1.5" height="6.5" fill="#d0d0d0"/>
<text x="1673.5" y="606.6" font-size="14.4" fill="#ececec" text-anchor="middle" textLength="20.2" lengthAdjust="spacingAndGlyphs">0,8</text>
<rect x="1046.3" y="80.5" width="5.5" height="1.7" fill="#d0d0d0"/>
<text x="1046.0" y="87.7" font-size="14.4" fill="#ececec" text-anchor="end" textLength="20.2" lengthAdjust="spacingAndGlyphs">0,8</text>
<text x="1365.4" y="49.6" font-size="14.4" fill="#ececec" text-anchor="middle" textLength="74.2" lengthAdjust="spacingAndGlyphs">CIE 1931 xy</text>
<g clip-path="url(#plc)">
<rect x="1278.1" y="197.2" width="14.0" height="15.2" fill="none" stroke="#ffffff" stroke-width="1.35"/>
<rect x="1281.8" y="266.2" width="14.0" height="15.2" fill="none" stroke="#ffffff" stroke-width="1.35"/>
<rect x="1337.0" y="265.4" width="14.0" height="15.2" fill="none" stroke="#ffffff" stroke-width="1.35"/>
<rect x="1370.6" y="257.6" width="14.0" height="15.2" fill="none" stroke="#ffffff" stroke-width="1.35"/>
<rect x="1391.4" y="277.2" width="14.0" height="15.2" fill="none" stroke="#ffffff" stroke-width="1.35"/>
<rect x="1412.4" y="299.5" width="14.0" height="15.2" fill="none" stroke="#ffffff" stroke-width="1.35"/>
<rect x="1443.5" y="320.3" width="14.0" height="15.2" fill="none" stroke="#ffffff" stroke-width="1.35"/>
<rect x="1308.9" y="306.3" width="14.0" height="15.2" fill="none" stroke="#ffffff" stroke-width="1.35"/>
<rect x="1248.3" y="348.1" width="14.0" height="15.2" fill="none" stroke="#ffffff" stroke-width="1.35"/>
<rect x="1218.9" y="368.7" width="14.0" height="15.2" fill="none" stroke="#ffffff" stroke-width="1.35"/>
<rect x="1355.0" y="346.1" width="14.0" height="15.2" fill="none" stroke="#ffffff" stroke-width="1.35"/>
<rect x="1339.5" y="351.1" width="14.0" height="15.2" fill="none" stroke="#ffffff" stroke-width="1.35"/>
<rect x="1403.9" y="377.4" width="14.0" height="15.2" fill="none" stroke="#ffffff" stroke-width="1.35"/>
<rect x="1461.5" y="374.2" width="14.0" height="15.2" fill="none" stroke="#ffffff" stroke-width="1.35"/>
<rect x="1541.5" y="367.2" width="14.0" height="15.2" fill="none" stroke="#ffffff" stroke-width="1.35"/>
<rect x="1206.4" y="406.0" width="14.0" height="15.2" fill="none" stroke="#ffffff" stroke-width="1.35"/>
<rect x="1238.5" y="407.8" width="14.0" height="15.2" fill="none" stroke="#ffffff" stroke-width="1.35"/>
<rect x="1252.5" y="416.3" width="14.0" height="15.2" fill="none" stroke="#ffffff" stroke-width="1.35"/>
<rect x="1269.6" y="435.3" width="14.0" height="15.2" fill="none" stroke="#ffffff" stroke-width="1.35"/>
<rect x="1335.5" y="419.5" width="14.0" height="15.2" fill="none" stroke="#ffffff" stroke-width="1.35"/>
<rect x="1213.7" y="454.9" width="14.0" height="15.2" fill="none" stroke="#ffffff" stroke-width="1.35"/>
<rect x="1193.9" y="485.7" width="14.0" height="15.2" fill="none" stroke="#ffffff" stroke-width="1.35"/>
<rect x="1293.4" y="478.2" width="14.0" height="15.2" fill="none" stroke="#ffffff" stroke-width="1.35"/>
<rect x="1161.5" y="537.8" width="14.0" height="15.2" fill="none" stroke="#ffffff" stroke-width="1.35"/>
<rect x="1288.1" y="368.1" width="14.0" height="13.8" fill="none" stroke="#000" stroke-width="1.7"/>
<circle cx="1283.3" cy="383.2" r="4.3" fill="#e8f3fe" stroke="#000" stroke-width="1.1"/>
<circle cx="1284.4" cy="381.6" r="4.3" fill="#cdd5dd" stroke="#000" stroke-width="1.1"/>
<circle cx="1286.0" cy="379.1" r="4.3" fill="#9a9fa0" stroke="#000" stroke-width="1.1"/>
<circle cx="1307.4" cy="195.8" r="4.35" fill="#12ee22" stroke="#000" stroke-width="1.1"/>
<circle cx="1377.6" cy="242.9" r="4.35" fill="#fff010" stroke="#000" stroke-width="1.1"/>
<circle cx="1347.0" cy="256.5" r="4.35" fill="#a3b548" stroke="#000" stroke-width="1.1"/>
<circle cx="1299.9" cy="265.5" r="4.35" fill="#4e8a4c" stroke="#000" stroke-width="1.1"/>
<circle cx="1395.9" cy="262.5" r="4.35" fill="#eccb30" stroke="#000" stroke-width="1.1"/>
<circle cx="1412.9" cy="285.0" r="4.35" fill="#dda238" stroke="#000" stroke-width="1.1"/>
<circle cx="1440.7" cy="306.8" r="4.35" fill="#d48238" stroke="#000" stroke-width="1.1"/>
<circle cx="1315.9" cy="303.8" r="4.35" fill="#525e3c" stroke="#000" stroke-width="1.1"/>
<circle cx="1354.0" cy="348.4" r="4.35" fill="#6e5340" stroke="#000" stroke-width="1.1"/>
<circle cx="1332.7" cy="357.0" r="4.35" fill="#b89c85" stroke="#000" stroke-width="1.1"/>
<circle cx="1260.0" cy="360.0" r="4.35" fill="#6dbbaa" stroke="#000" stroke-width="1.1"/>
<circle cx="1233.0" cy="386.8" r="4.35" fill="#00eeee" stroke="#000" stroke-width="1.1"/>
<circle cx="1386.8" cy="387.5" r="4.35" fill="#c25c68" stroke="#000" stroke-width="1.1"/>
<circle cx="1457.5" cy="379.3" r="4.35" fill="#b23a44" stroke="#000" stroke-width="1.1"/>
<circle cx="1554.0" cy="364.7" r="4.35" fill="#ff0000" stroke="#000" stroke-width="1.1"/>
<circle cx="1220.4" cy="421.1" r="4.35" fill="#0a8aa0" stroke="#000" stroke-width="1.1"/>
<circle cx="1243.0" cy="422.4" r="4.35" fill="#6680a6" stroke="#000" stroke-width="1.1"/>
<circle cx="1251.0" cy="431.2" r="4.35" fill="#8886b4" stroke="#000" stroke-width="1.1"/>
<circle cx="1237.0" cy="435.9" r="4.35" fill="#000000" stroke="#000" stroke-width="1.1"/>
<circle cx="1258.0" cy="459.5" r="4.35" fill="#583a64" stroke="#000" stroke-width="1.1"/>
<circle cx="1315.9" cy="438.9" r="4.35" fill="#b65898" stroke="#000" stroke-width="1.1"/>
<circle cx="1214.9" cy="471.3" r="4.35" fill="#5062a6" stroke="#000" stroke-width="1.1"/>
<circle cx="1197.1" cy="506.8" r="4.35" fill="#3848a0" stroke="#000" stroke-width="1.1"/>
<circle cx="1268.0" cy="502.3" r="4.35" fill="#ff00ff" stroke="#000" stroke-width="1.1"/>
<circle cx="1170.0" cy="549.7" r="4.35" fill="#0000ff" stroke="#000" stroke-width="1.1"/>
</g>
<defs><clipPath id="plc"><rect x="1051.8" y="55" width="653.7" height="528.3"/></clipPath></defs>
<rect x="1505.8" y="59.3" width="196" height="162" fill="#2b2b2b"/>
<g clip-path="url(#insc)">
<g shape-rendering="crispEdges">
<rect x="1507" y="62" width="193" height="4" fill="url(#i0)"/>
<rect x="1507" y="66" width="193" height="4" fill="url(#i1)"/>
<rect x="1507" y="70" width="193" height="4" fill="url(#i2)"/>
<rect x="1507" y="74" width="193" height="4" fill="url(#i3)"/>
<rect x="1507" y="78" width="193" height="4" fill="url(#i4)"/>
<rect x="1507" y="82" width="193" height="4" fill="url(#i5)"/>
<rect x="1507" y="86" width="193" height="4" fill="url(#i6)"/>
<rect x="1507" y="90" width="193" height="4" fill="url(#i7)"/>
<rect x="1507" y="94" width="193" height="4" fill="url(#i8)"/>
<rect x="1507" y="98" width="193" height="4" fill="url(#i9)"/>
<rect x="1507" y="102" width="193" height="4" fill="url(#i10)"/>
<rect x="1507" y="106" width="193" height="4" fill="url(#i11)"/>
<rect x="1507" y="110" width="193" height="4" fill="url(#i12)"/>
<rect x="1507" y="114" width="193" height="4" fill="url(#i13)"/>
<rect x="1507" y="118" width="193" height="4" fill="url(#i14)"/>
<rect x="1507" y="122" width="193" height="4" fill="url(#i15)"/>
<rect x="1507" y="126" width="193" height="4" fill="url(#i16)"/>
<rect x="1507" y="130" width="193" height="4" fill="url(#i17)"/>
<rect x="1507" y="134" width="193" height="4" fill="url(#i18)"/>
<rect x="1507" y="138" width="193" height="4" fill="url(#i19)"/>
<rect x="1507" y="142" width="193" height="4" fill="url(#i20)"/>
<rect x="1507" y="146" width="193" height="4" fill="url(#i21)"/>
<rect x="1507" y="150" width="193" height="4" fill="url(#i22)"/>
<rect x="1507" y="154" width="193" height="4" fill="url(#i23)"/>
<rect x="1507" y="158" width="193" height="4" fill="url(#i24)"/>
<rect x="1507" y="162" width="193" height="4" fill="url(#i25)"/>
<rect x="1507" y="166" width="193" height="4" fill="url(#i26)"/>
<rect x="1507" y="170" width="193" height="4" fill="url(#i27)"/>
<rect x="1507" y="174" width="193" height="4" fill="url(#i28)"/>
<rect x="1507" y="178" width="193" height="4" fill="url(#i29)"/>
<rect x="1507" y="182" width="193" height="4" fill="url(#i30)"/>
<rect x="1507" y="186" width="193" height="4" fill="url(#i31)"/>
<rect x="1507" y="190" width="193" height="4" fill="url(#i32)"/>
<rect x="1507" y="194" width="193" height="4" fill="url(#i33)"/>
<rect x="1507" y="198" width="193" height="4" fill="url(#i34)"/>
<rect x="1507" y="202" width="193" height="4" fill="url(#i35)"/>
<rect x="1507" y="206" width="193" height="4" fill="url(#i36)"/>
<rect x="1507" y="210" width="193" height="4" fill="url(#i37)"/>
<rect x="1507" y="214" width="193" height="4" fill="url(#i38)"/>
<rect x="1507" y="218" width="193" height="4" fill="url(#i39)"/>
</g><g clip-path="url(#itri)"><g shape-rendering="crispEdges">
<rect x="1507" y="62" width="193" height="4" fill="url(#j0)"/>
<rect x="1507" y="66" width="193" height="4" fill="url(#j1)"/>
<rect x="1507" y="70" width="193" height="4" fill="url(#j2)"/>
<rect x="1507" y="74" width="193" height="4" fill="url(#j3)"/>
<rect x="1507" y="78" width="193" height="4" fill="url(#j4)"/>
<rect x="1507" y="82" width="193" height="4" fill="url(#j5)"/>
<rect x="1507" y="86" width="193" height="4" fill="url(#j6)"/>
<rect x="1507" y="90" width="193" height="4" fill="url(#j7)"/>
<rect x="1507" y="94" width="193" height="4" fill="url(#j8)"/>
<rect x="1507" y="98" width="193" height="4" fill="url(#j9)"/>
<rect x="1507" y="102" width="193" height="4" fill="url(#j10)"/>
<rect x="1507" y="106" width="193" height="4" fill="url(#j11)"/>
<rect x="1507" y="110" width="193" height="4" fill="url(#j12)"/>
<rect x="1507" y="114" width="193" height="4" fill="url(#j13)"/>
<rect x="1507" y="118" width="193" height="4" fill="url(#j14)"/>
<rect x="1507" y="122" width="193" height="4" fill="url(#j15)"/>
<rect x="1507" y="126" width="193" height="4" fill="url(#j16)"/>
<rect x="1507" y="130" width="193" height="4" fill="url(#j17)"/>
<rect x="1507" y="134" width="193" height="4" fill="url(#j18)"/>
<rect x="1507" y="138" width="193" height="4" fill="url(#j19)"/>
<rect x="1507" y="142" width="193" height="4" fill="url(#j20)"/>
<rect x="1507" y="146" width="193" height="4" fill="url(#j21)"/>
<rect x="1507" y="150" width="193" height="4" fill="url(#j22)"/>
<rect x="1507" y="154" width="193" height="4" fill="url(#j23)"/>
<rect x="1507" y="158" width="193" height="4" fill="url(#j24)"/>
<rect x="1507" y="162" width="193" height="4" fill="url(#j25)"/>
<rect x="1507" y="166" width="193" height="4" fill="url(#j26)"/>
<rect x="1507" y="170" width="193" height="4" fill="url(#j27)"/>
<rect x="1507" y="174" width="193" height="4" fill="url(#j28)"/>
<rect x="1507" y="178" width="193" height="4" fill="url(#j29)"/>
<rect x="1507" y="182" width="193" height="4" fill="url(#j30)"/>
<rect x="1507" y="186" width="193" height="4" fill="url(#j31)"/>
<rect x="1507" y="190" width="193" height="4" fill="url(#j32)"/>
<rect x="1507" y="194" width="193" height="4" fill="url(#j33)"/>
<rect x="1507" y="198" width="193" height="4" fill="url(#j34)"/>
<rect x="1507" y="202" width="193" height="4" fill="url(#j35)"/>
<rect x="1507" y="206" width="193" height="4" fill="url(#j36)"/>
<rect x="1507" y="210" width="193" height="4" fill="url(#j37)"/>
<rect x="1507" y="214" width="193" height="4" fill="url(#j38)"/>
<rect x="1507" y="218" width="193" height="4" fill="url(#j39)"/>
</g></g>
<path d="M1690 62H1699V69.5Z" fill="#252525"/>
</g>
<g clip-path="url(#insc)">
<rect x="1595.7" y="132.9" width="14.6" height="14.6" fill="none" stroke="#ffffff" stroke-width="1.35"/>
<rect x="1663.4" y="194.8" width="14.2" height="14.6" fill="none" stroke="#ffffff" stroke-width="1.35"/>
<circle cx="1604.6" cy="71.9" r="3.9" fill="#fff010" stroke="#000" stroke-width="1.1"/>
<circle cx="1658.0" cy="131.1" r="4.35" fill="#eccb30" stroke="#000" stroke-width="1.1"/>
<circle cx="1509.8" cy="114.9" r="4.35" fill="#a3a860" stroke="#000" stroke-width="1.1"/>
</g>
<rect x="1508.3" y="62.3" width="190.7" height="156.3" fill="none" stroke="#8e8e8e" stroke-width="1.4"/>
<rect x="1421.6" y="541.2" width="280.4" height="29.3" fill="#333333"/>
<text x="1453.0" y="563.3" font-size="20.52" fill="#ececec" textLength="218.6" lengthAdjust="spacingAndGlyphs">RGB Triplet: 255, 255, 0</text>
<rect x="328.2" y="639.5" width="1384.8" height="13.5" fill="#2d2d2d"/>
<rect x="328.2" y="653" width="1384.8" height="15.7" fill="#1b1b1b"/>
<rect x="328.2" y="639.5" width="9" height="29.2" fill="#000"/>
<rect x="328.2" y="668.7" width="1384.8" height="28.2" fill="#404040"/>
<rect x="328.2" y="668.7" width="9" height="28.2" fill="#2a2a2a"/>
<rect x="328.2" y="696.8" width="1384.8" height="28.2" fill="#7e7e7e"/>
<rect x="328.2" y="696.8" width="9" height="28.2" fill="#3a3a3a"/>
<rect x="328.2" y="724.9" width="1384.8" height="28.2" fill="#404040"/>
<rect x="328.2" y="724.9" width="9" height="28.2" fill="#2a2a2a"/>
<rect x="328.2" y="753.1" width="1384.8" height="28.2" fill="#7e7e7e"/>
<rect x="328.2" y="753.1" width="9" height="28.2" fill="#3a3a3a"/>
<rect x="328.2" y="781.2" width="1384.8" height="28.2" fill="#404040"/>
<rect x="328.2" y="781.2" width="9" height="28.2" fill="#2a2a2a"/>
<rect x="328.2" y="809.3" width="1384.8" height="28.2" fill="#7e7e7e"/>
<rect x="328.2" y="809.3" width="9" height="28.2" fill="#3a3a3a"/>
<rect x="328.2" y="837.4" width="1384.8" height="28.2" fill="#404040"/>
<rect x="328.2" y="837.4" width="9" height="28.2" fill="#2a2a2a"/>
<g stroke="#f2f2f2" stroke-width=".3">
<text x="407.3" y="659.5" font-size="14.94" fill="#f4f4f4" textLength="25.3" lengthAdjust="spacingAndGlyphs">White</text>
<text x="442.8" y="659.5" font-size="14.94" fill="#f4f4f4" textLength="32.2" lengthAdjust="spacingAndGlyphs">Gray 80</text>
<text x="479.1" y="659.5" font-size="14.94" fill="#f4f4f4" textLength="32.2" lengthAdjust="spacingAndGlyphs">Gray 65</text>
<text x="515.4" y="659.5" font-size="14.94" fill="#f4f4f4" textLength="32.2" lengthAdjust="spacingAndGlyphs">Gray 50</text>
<text x="552.1" y="659.5" font-size="14.94" fill="#f4f4f4" textLength="32.2" lengthAdjust="spacingAndGlyphs">Gray 35</text>
<text x="588.9" y="659.5" font-size="14.94" fill="#f4f4f4" textLength="21.8" lengthAdjust="spacingAndGlyphs">Black</text>
<text x="615.4" y="659.5" font-size="14.94" fill="#f4f4f4" textLength="38.8" lengthAdjust="spacingAndGlyphs">Dark Skin</text>
<text x="658.6" y="659.5" font-size="14.94" fill="#f4f4f4" textLength="39.6" lengthAdjust="spacingAndGlyphs">Light Skin</text>
<text x="702.7" y="659.5" font-size="14.94" fill="#f4f4f4" textLength="34.6" lengthAdjust="spacingAndGlyphs">Blue Sky</text>
<text x="741.9" y="659.5" font-size="14.94" fill="#f4f4f4" textLength="29.6" lengthAdjust="spacingAndGlyphs">Foliage</text>
<text x="776.1" y="659.5" font-size="14.94" fill="#f4f4f4" textLength="49.1" lengthAdjust="spacingAndGlyphs">Blue Flower</text>
<text x="829.6" y="659.5" font-size="14.94" fill="#f4f4f4" textLength="52.8" lengthAdjust="spacingAndGlyphs">Bluish Green</text>
<text x="886.7" y="659.5" font-size="14.94" fill="#f4f4f4" textLength="30.5" lengthAdjust="spacingAndGlyphs">Orange</text>
<text x="921.4" y="659.5" font-size="14.94" fill="#f4f4f4" textLength="54.3" lengthAdjust="spacingAndGlyphs">Purplish Blue</text>
<text x="980.5" y="659.5" font-size="14.94" fill="#f4f4f4" textLength="59.9" lengthAdjust="spacingAndGlyphs">Moderate Red</text>
<text x="1042.9" y="659.5" font-size="14.94" fill="#f4f4f4" textLength="27.0" lengthAdjust="spacingAndGlyphs">Purple</text>
<text x="1074.8" y="659.5" font-size="14.94" fill="#f4f4f4" textLength="55.3" lengthAdjust="spacingAndGlyphs">Yellow Green</text>
<text x="1133.5" y="659.5" font-size="14.94" fill="#f4f4f4" textLength="60.3" lengthAdjust="spacingAndGlyphs">Orange Yellow</text>
<text x="1197.2" y="659.5" font-size="14.94" fill="#f4f4f4" textLength="18.4" lengthAdjust="spacingAndGlyphs">Blue</text>
<text x="1226.9" y="659.5" font-size="14.94" fill="#f4f4f4" textLength="25.6" lengthAdjust="spacingAndGlyphs">Green</text>
<text x="1257.1" y="659.5" font-size="14.94" fill="#f4f4f4" textLength="16.0" lengthAdjust="spacingAndGlyphs">Red</text>
<text x="1286.9" y="659.5" font-size="14.94" fill="#f4f4f4" textLength="27.5" lengthAdjust="spacingAndGlyphs">Yellow</text>
<text x="1322.4" y="659.5" font-size="14.94" fill="#f4f4f4" textLength="37.2" lengthAdjust="spacingAndGlyphs">Magenta</text>
<text x="1363.6" y="659.5" font-size="14.94" fill="#f4f4f4" textLength="20.3" lengthAdjust="spacingAndGlyphs">Cyan</text>
<text x="1393.8" y="659.5" font-size="14.94" fill="#f4f4f4" textLength="41.2" lengthAdjust="spacingAndGlyphs">100% Red</text>
<text x="1439.1" y="659.5" font-size="14.94" fill="#f4f4f4" textLength="50.7" lengthAdjust="spacingAndGlyphs">100% Green</text>
<text x="1494.2" y="659.5" font-size="14.94" fill="#f4f4f4" textLength="43.5" lengthAdjust="spacingAndGlyphs">100% Blue</text>
<text x="1541.9" y="659.5" font-size="14.94" fill="#f4f4f4" textLength="45.5" lengthAdjust="spacingAndGlyphs">100% Cyan</text>
<text x="1592.1" y="659.5" font-size="14.94" fill="#f4f4f4" textLength="62.4" lengthAdjust="spacingAndGlyphs">100% Magenta</text>
<text x="1658.6" y="659.5" font-size="14.94" fill="#f4f4f4" textLength="52.6" lengthAdjust="spacingAndGlyphs">100% Yellow</text>
<text x="339.3" y="689.6" font-size="16.02" fill="#f2f2f2" textLength="34.1" lengthAdjust="spacingAndGlyphs">x: CIE31</text>
<text x="407.3" y="689.6" font-size="16.02" fill="#f2f2f2" textLength="18.8" lengthAdjust="spacingAndGlyphs">0,30</text>
<text x="442.8" y="689.6" font-size="16.02" fill="#f2f2f2" textLength="18.8" lengthAdjust="spacingAndGlyphs">0,30</text>
<text x="479.1" y="689.6" font-size="16.02" fill="#f2f2f2" textLength="18.8" lengthAdjust="spacingAndGlyphs">0,30</text>
<text x="515.4" y="689.6" font-size="16.02" fill="#f2f2f2" textLength="18.8" lengthAdjust="spacingAndGlyphs">0,30</text>
<text x="552.1" y="689.6" font-size="16.02" fill="#f2f2f2" textLength="18.8" lengthAdjust="spacingAndGlyphs">0,30</text>
<text x="588.9" y="689.6" font-size="16.02" fill="#f2f2f2" textLength="18.8" lengthAdjust="spacingAndGlyphs">0,24</text>
<text x="615.4" y="689.6" font-size="16.02" fill="#f2f2f2" textLength="18.8" lengthAdjust="spacingAndGlyphs">0,39</text>
<text x="658.6" y="689.6" font-size="16.02" fill="#f2f2f2" textLength="18.8" lengthAdjust="spacingAndGlyphs">0,36</text>
<text x="702.7" y="689.6" font-size="16.02" fill="#f2f2f2" textLength="18.8" lengthAdjust="spacingAndGlyphs">0,25</text>
<text x="741.9" y="689.6" font-size="16.02" fill="#f2f2f2" textLength="18.8" lengthAdjust="spacingAndGlyphs">0,34</text>
<text x="776.1" y="689.6" font-size="16.02" fill="#f2f2f2" textLength="18.8" lengthAdjust="spacingAndGlyphs">0,26</text>
<text x="829.6" y="689.6" font-size="16.02" fill="#f2f2f2" textLength="18.8" lengthAdjust="spacingAndGlyphs">0,27</text>
<text x="886.7" y="689.6" font-size="16.02" fill="#f2f2f2" textLength="18.8" lengthAdjust="spacingAndGlyphs">0,50</text>
<text x="921.4" y="689.6" font-size="16.02" fill="#f2f2f2" textLength="18.8" lengthAdjust="spacingAndGlyphs">0,21</text>
<text x="980.5" y="689.6" font-size="16.02" fill="#f2f2f2" textLength="18.8" lengthAdjust="spacingAndGlyphs">0,43</text>
<text x="1042.9" y="689.6" font-size="16.02" fill="#f2f2f2" textLength="18.8" lengthAdjust="spacingAndGlyphs">0,27</text>
<text x="1074.8" y="689.6" font-size="16.02" fill="#f2f2f2" textLength="18.8" lengthAdjust="spacingAndGlyphs">0,38</text>
<text x="1133.5" y="689.6" font-size="16.02" fill="#f2f2f2" textLength="18.8" lengthAdjust="spacingAndGlyphs">0,46</text>
<text x="1197.2" y="689.6" font-size="16.02" fill="#f2f2f2" textLength="18.8" lengthAdjust="spacingAndGlyphs">0,19</text>
<text x="1226.9" y="689.6" font-size="16.02" fill="#f2f2f2" textLength="18.8" lengthAdjust="spacingAndGlyphs">0,32</text>
<text x="1257.1" y="689.6" font-size="16.02" fill="#f2f2f2" textLength="18.8" lengthAdjust="spacingAndGlyphs">0,52</text>
<text x="1286.9" y="689.6" font-size="16.02" fill="#f2f2f2" textLength="18.8" lengthAdjust="spacingAndGlyphs">0,44</text>
<text x="1322.4" y="689.6" font-size="16.02" fill="#f2f2f2" textLength="18.8" lengthAdjust="spacingAndGlyphs">0,34</text>
<text x="1363.6" y="689.6" font-size="16.02" fill="#f2f2f2" textLength="18.8" lengthAdjust="spacingAndGlyphs">0,22</text>
<text x="1393.8" y="689.6" font-size="16.02" fill="#f2f2f2" textLength="18.8" lengthAdjust="spacingAndGlyphs">0,65</text>
<text x="1439.1" y="689.6" font-size="16.02" fill="#f2f2f2" textLength="18.8" lengthAdjust="spacingAndGlyphs">0,33</text>
<text x="1494.2" y="689.6" font-size="16.02" fill="#f2f2f2" textLength="18.8" lengthAdjust="spacingAndGlyphs">0,15</text>
<text x="1541.9" y="689.6" font-size="16.02" fill="#f2f2f2" textLength="18.8" lengthAdjust="spacingAndGlyphs">0,23</text>
<text x="1592.1" y="689.6" font-size="16.02" fill="#f2f2f2" textLength="18.8" lengthAdjust="spacingAndGlyphs">0,28</text>
<text x="1658.6" y="689.6" font-size="16.02" fill="#f2f2f2" textLength="18.8" lengthAdjust="spacingAndGlyphs">0,42</text>
<text x="339.3" y="717.7" font-size="16.02" fill="#f2f2f2" textLength="34.3" lengthAdjust="spacingAndGlyphs">y: CIE31</text>
<text x="407.3" y="717.7" font-size="16.02" fill="#f2f2f2" textLength="18.8" lengthAdjust="spacingAndGlyphs">0,32</text>
<text x="442.8" y="717.7" font-size="16.02" fill="#f2f2f2" textLength="18.8" lengthAdjust="spacingAndGlyphs">0,32</text>
<text x="479.1" y="717.7" font-size="16.02" fill="#f2f2f2" textLength="18.8" lengthAdjust="spacingAndGlyphs">0,32</text>
<text x="515.4" y="717.7" font-size="16.02" fill="#f2f2f2" textLength="18.8" lengthAdjust="spacingAndGlyphs">0,32</text>
<text x="552.1" y="717.7" font-size="16.02" fill="#f2f2f2" textLength="18.8" lengthAdjust="spacingAndGlyphs">0,32</text>
<text x="588.9" y="717.7" font-size="16.02" fill="#f2f2f2" textLength="18.8" lengthAdjust="spacingAndGlyphs">0,23</text>
<text x="615.4" y="717.7" font-size="16.02" fill="#f2f2f2" textLength="18.8" lengthAdjust="spacingAndGlyphs">0,37</text>
<text x="658.6" y="717.7" font-size="16.02" fill="#f2f2f2" textLength="18.8" lengthAdjust="spacingAndGlyphs">0,36</text>
<text x="702.7" y="717.7" font-size="16.02" fill="#f2f2f2" textLength="18.8" lengthAdjust="spacingAndGlyphs">0,25</text>
<text x="741.9" y="717.7" font-size="16.02" fill="#f2f2f2" textLength="18.8" lengthAdjust="spacingAndGlyphs">0,44</text>
<text x="776.1" y="717.7" font-size="16.02" fill="#f2f2f2" textLength="18.8" lengthAdjust="spacingAndGlyphs">0,24</text>
<text x="829.6" y="717.7" font-size="16.02" fill="#f2f2f2" textLength="18.8" lengthAdjust="spacingAndGlyphs">0,35</text>
<text x="886.7" y="717.7" font-size="16.02" fill="#f2f2f2" textLength="18.8" lengthAdjust="spacingAndGlyphs">0,44</text>
<text x="921.4" y="717.7" font-size="16.02" fill="#f2f2f2" textLength="18.8" lengthAdjust="spacingAndGlyphs">0,18</text>
<text x="980.5" y="717.7" font-size="16.02" fill="#f2f2f2" textLength="18.8" lengthAdjust="spacingAndGlyphs">0,31</text>
<text x="1042.9" y="717.7" font-size="16.02" fill="#f2f2f2" textLength="18.8" lengthAdjust="spacingAndGlyphs">0,20</text>
<text x="1074.8" y="717.7" font-size="16.02" fill="#f2f2f2" textLength="18.8" lengthAdjust="spacingAndGlyphs">0,52</text>
<text x="1133.5" y="717.7" font-size="16.02" fill="#f2f2f2" textLength="18.8" lengthAdjust="spacingAndGlyphs">0,47</text>
<text x="1197.2" y="717.7" font-size="16.02" fill="#f2f2f2" textLength="18.8" lengthAdjust="spacingAndGlyphs">0,12</text>
<text x="1226.9" y="717.7" font-size="16.02" fill="#f2f2f2" textLength="18.8" lengthAdjust="spacingAndGlyphs">0,50</text>
<text x="1257.1" y="717.7" font-size="16.02" fill="#f2f2f2" textLength="18.8" lengthAdjust="spacingAndGlyphs">0,32</text>
<text x="1286.9" y="717.7" font-size="16.02" fill="#f2f2f2" textLength="18.8" lengthAdjust="spacingAndGlyphs">0,51</text>
<text x="1322.4" y="717.7" font-size="16.02" fill="#f2f2f2" textLength="18.8" lengthAdjust="spacingAndGlyphs">0,23</text>
<text x="1363.6" y="717.7" font-size="16.02" fill="#f2f2f2" textLength="18.8" lengthAdjust="spacingAndGlyphs">0,26</text>
<text x="1393.8" y="717.7" font-size="16.02" fill="#f2f2f2" textLength="18.8" lengthAdjust="spacingAndGlyphs">0,35</text>
<text x="1439.1" y="717.7" font-size="16.02" fill="#f2f2f2" textLength="18.8" lengthAdjust="spacingAndGlyphs">0,62</text>
<text x="1494.2" y="717.7" font-size="16.02" fill="#f2f2f2" textLength="18.8" lengthAdjust="spacingAndGlyphs">0,05</text>
<text x="1541.9" y="717.7" font-size="16.02" fill="#f2f2f2" textLength="18.8" lengthAdjust="spacingAndGlyphs">0,31</text>
<text x="1592.1" y="717.7" font-size="16.02" fill="#f2f2f2" textLength="18.8" lengthAdjust="spacingAndGlyphs">0,13</text>
<text x="1658.6" y="717.7" font-size="16.02" fill="#f2f2f2" textLength="18.8" lengthAdjust="spacingAndGlyphs">0,54</text>
<text x="339.3" y="745.8" font-size="16.02" fill="#f2f2f2" textLength="5.2" lengthAdjust="spacingAndGlyphs">Y</text>
<text x="407.3" y="745.8" font-size="16.02" fill="#f2f2f2" textLength="29.6" lengthAdjust="spacingAndGlyphs">298,71</text>
<text x="442.8" y="745.8" font-size="16.02" fill="#f2f2f2" textLength="29.6" lengthAdjust="spacingAndGlyphs">242,54</text>
<text x="479.1" y="745.8" font-size="16.02" fill="#f2f2f2" textLength="29.6" lengthAdjust="spacingAndGlyphs">197,25</text>
<text x="515.4" y="745.8" font-size="16.02" fill="#f2f2f2" textLength="29.6" lengthAdjust="spacingAndGlyphs">153,36</text>
<text x="552.1" y="745.8" font-size="16.02" fill="#f2f2f2" textLength="29.6" lengthAdjust="spacingAndGlyphs">106,86</text>
<text x="588.9" y="745.8" font-size="16.02" fill="#f2f2f2" textLength="18.8" lengthAdjust="spacingAndGlyphs">0,19</text>
<text x="615.4" y="745.8" font-size="16.02" fill="#f2f2f2" textLength="24.2" lengthAdjust="spacingAndGlyphs">29,26</text>
<text x="658.6" y="745.8" font-size="16.02" fill="#f2f2f2" textLength="29.6" lengthAdjust="spacingAndGlyphs">105,94</text>
<text x="702.7" y="745.8" font-size="16.02" fill="#f2f2f2" textLength="24.2" lengthAdjust="spacingAndGlyphs">59,67</text>
<text x="741.9" y="745.8" font-size="16.02" fill="#f2f2f2" textLength="24.2" lengthAdjust="spacingAndGlyphs">41,11</text>
<text x="776.1" y="745.8" font-size="16.02" fill="#f2f2f2" textLength="24.2" lengthAdjust="spacingAndGlyphs">72,88</text>
<text x="829.6" y="745.8" font-size="16.02" fill="#f2f2f2" textLength="29.6" lengthAdjust="spacingAndGlyphs">135,53</text>
<text x="886.7" y="745.8" font-size="16.02" fill="#f2f2f2" textLength="24.2" lengthAdjust="spacingAndGlyphs">81,65</text>
<text x="921.4" y="745.8" font-size="16.02" fill="#f2f2f2" textLength="24.2" lengthAdjust="spacingAndGlyphs">36,39</text>
<text x="980.5" y="745.8" font-size="16.02" fill="#f2f2f2" textLength="24.2" lengthAdjust="spacingAndGlyphs">51,52</text>
<text x="1042.9" y="745.8" font-size="16.02" fill="#f2f2f2" textLength="24.2" lengthAdjust="spacingAndGlyphs">18,76</text>
<text x="1074.8" y="745.8" font-size="16.02" fill="#f2f2f2" textLength="29.6" lengthAdjust="spacingAndGlyphs">134,94</text>
<text x="1133.5" y="745.8" font-size="16.02" fill="#f2f2f2" textLength="29.6" lengthAdjust="spacingAndGlyphs">126,10</text>
<text x="1197.2" y="745.8" font-size="16.02" fill="#f2f2f2" textLength="24.2" lengthAdjust="spacingAndGlyphs">18,20</text>
<text x="1226.9" y="745.8" font-size="16.02" fill="#f2f2f2" textLength="24.2" lengthAdjust="spacingAndGlyphs">73,90</text>
<text x="1257.1" y="745.8" font-size="16.02" fill="#f2f2f2" textLength="24.2" lengthAdjust="spacingAndGlyphs">30,00</text>
<text x="1286.9" y="745.8" font-size="16.02" fill="#f2f2f2" textLength="29.6" lengthAdjust="spacingAndGlyphs">178,59</text>
<text x="1322.4" y="745.8" font-size="16.02" fill="#f2f2f2" textLength="24.2" lengthAdjust="spacingAndGlyphs">52,62</text>
<text x="1363.6" y="745.8" font-size="16.02" fill="#f2f2f2" textLength="24.2" lengthAdjust="spacingAndGlyphs">62,86</text>
<text x="1393.8" y="745.8" font-size="16.02" fill="#f2f2f2" textLength="24.2" lengthAdjust="spacingAndGlyphs">50,62</text>
<text x="1439.1" y="745.8" font-size="16.02" fill="#f2f2f2" textLength="29.6" lengthAdjust="spacingAndGlyphs">226,05</text>
<text x="1494.2" y="745.8" font-size="16.02" fill="#f2f2f2" textLength="24.2" lengthAdjust="spacingAndGlyphs">22,03</text>
<text x="1541.9" y="745.8" font-size="16.02" fill="#f2f2f2" textLength="29.6" lengthAdjust="spacingAndGlyphs">247,79</text>
<text x="1592.1" y="745.8" font-size="16.02" fill="#f2f2f2" textLength="24.2" lengthAdjust="spacingAndGlyphs">72,38</text>
<text x="1658.6" y="745.8" font-size="16.02" fill="#f2f2f2" textLength="29.6" lengthAdjust="spacingAndGlyphs">276,44</text>
<text x="339.3" y="774.0" font-size="16.02" fill="#f2f2f2" textLength="61.9" lengthAdjust="spacingAndGlyphs">Target x:CIE31</text>
<text x="407.3" y="774.0" font-size="16.02" fill="#f2f2f2" textLength="18.8" lengthAdjust="spacingAndGlyphs">0,31</text>
<text x="442.8" y="774.0" font-size="16.02" fill="#f2f2f2" textLength="18.8" lengthAdjust="spacingAndGlyphs">0,31</text>
<text x="479.1" y="774.0" font-size="16.02" fill="#f2f2f2" textLength="18.8" lengthAdjust="spacingAndGlyphs">0,31</text>
<text x="515.4" y="774.0" font-size="16.02" fill="#f2f2f2" textLength="18.8" lengthAdjust="spacingAndGlyphs">0,31</text>
<text x="552.1" y="774.0" font-size="16.02" fill="#f2f2f2" textLength="18.8" lengthAdjust="spacingAndGlyphs">0,31</text>
<text x="588.9" y="774.0" font-size="16.02" fill="#f2f2f2" textLength="18.8" lengthAdjust="spacingAndGlyphs">0,31</text>
<text x="615.4" y="774.0" font-size="16.02" fill="#f2f2f2" textLength="18.8" lengthAdjust="spacingAndGlyphs">0,40</text>
<text x="658.6" y="774.0" font-size="16.02" fill="#f2f2f2" textLength="18.8" lengthAdjust="spacingAndGlyphs">0,38</text>
<text x="702.7" y="774.0" font-size="16.02" fill="#f2f2f2" textLength="18.8" lengthAdjust="spacingAndGlyphs">0,25</text>
<text x="741.9" y="774.0" font-size="16.02" fill="#f2f2f2" textLength="18.8" lengthAdjust="spacingAndGlyphs">0,34</text>
<text x="776.1" y="774.0" font-size="16.02" fill="#f2f2f2" textLength="18.8" lengthAdjust="spacingAndGlyphs">0,27</text>
<text x="829.6" y="774.0" font-size="16.02" fill="#f2f2f2" textLength="18.8" lengthAdjust="spacingAndGlyphs">0,26</text>
<text x="886.7" y="774.0" font-size="16.02" fill="#f2f2f2" textLength="18.8" lengthAdjust="spacingAndGlyphs">0,51</text>
<text x="921.4" y="774.0" font-size="16.02" fill="#f2f2f2" textLength="18.8" lengthAdjust="spacingAndGlyphs">0,22</text>
<text x="980.5" y="774.0" font-size="16.02" fill="#f2f2f2" textLength="18.8" lengthAdjust="spacingAndGlyphs">0,46</text>
<text x="1042.9" y="774.0" font-size="16.02" fill="#f2f2f2" textLength="18.8" lengthAdjust="spacingAndGlyphs">0,29</text>
<text x="1074.8" y="774.0" font-size="16.02" fill="#f2f2f2" textLength="18.8" lengthAdjust="spacingAndGlyphs">0,38</text>
<text x="1133.5" y="774.0" font-size="16.02" fill="#f2f2f2" textLength="18.8" lengthAdjust="spacingAndGlyphs">0,47</text>
<text x="1197.2" y="774.0" font-size="16.02" fill="#f2f2f2" textLength="18.8" lengthAdjust="spacingAndGlyphs">0,19</text>
<text x="1226.9" y="774.0" font-size="16.02" fill="#f2f2f2" textLength="18.8" lengthAdjust="spacingAndGlyphs">0,31</text>
<text x="1257.1" y="774.0" font-size="16.02" fill="#f2f2f2" textLength="18.8" lengthAdjust="spacingAndGlyphs">0,54</text>
<text x="1286.9" y="774.0" font-size="16.02" fill="#f2f2f2" textLength="18.8" lengthAdjust="spacingAndGlyphs">0,45</text>
<text x="1322.4" y="774.0" font-size="16.02" fill="#f2f2f2" textLength="18.8" lengthAdjust="spacingAndGlyphs">0,37</text>
<text x="1363.6" y="774.0" font-size="16.02" fill="#f2f2f2" textLength="18.8" lengthAdjust="spacingAndGlyphs">0,21</text>
<text x="1393.8" y="774.0" font-size="16.02" fill="#f2f2f2" textLength="18.8" lengthAdjust="spacingAndGlyphs">0,64</text>
<text x="1439.1" y="774.0" font-size="16.02" fill="#f2f2f2" textLength="18.8" lengthAdjust="spacingAndGlyphs">0,30</text>
<text x="1494.2" y="774.0" font-size="16.02" fill="#f2f2f2" textLength="18.8" lengthAdjust="spacingAndGlyphs">0,15</text>
<text x="1541.9" y="774.0" font-size="16.02" fill="#f2f2f2" textLength="18.8" lengthAdjust="spacingAndGlyphs">0,22</text>
<text x="1592.1" y="774.0" font-size="16.02" fill="#f2f2f2" textLength="18.8" lengthAdjust="spacingAndGlyphs">0,32</text>
<text x="1658.6" y="774.0" font-size="16.02" fill="#f2f2f2" textLength="18.8" lengthAdjust="spacingAndGlyphs">0,42</text>
<text x="339.3" y="802.1" font-size="16.02" fill="#f2f2f2" textLength="62.1" lengthAdjust="spacingAndGlyphs">Target y:CIE31</text>
<text x="407.3" y="802.1" font-size="16.02" fill="#f2f2f2" textLength="18.8" lengthAdjust="spacingAndGlyphs">0,33</text>
<text x="442.8" y="802.1" font-size="16.02" fill="#f2f2f2" textLength="18.8" lengthAdjust="spacingAndGlyphs">0,33</text>
<text x="479.1" y="802.1" font-size="16.02" fill="#f2f2f2" textLength="18.8" lengthAdjust="spacingAndGlyphs">0,33</text>
<text x="515.4" y="802.1" font-size="16.02" fill="#f2f2f2" textLength="18.8" lengthAdjust="spacingAndGlyphs">0,33</text>
<text x="552.1" y="802.1" font-size="16.02" fill="#f2f2f2" textLength="18.8" lengthAdjust="spacingAndGlyphs">0,33</text>
<text x="588.9" y="802.1" font-size="16.02" fill="#f2f2f2" textLength="18.8" lengthAdjust="spacingAndGlyphs">0,33</text>
<text x="615.4" y="802.1" font-size="16.02" fill="#f2f2f2" textLength="18.8" lengthAdjust="spacingAndGlyphs">0,36</text>
<text x="658.6" y="802.1" font-size="16.02" fill="#f2f2f2" textLength="18.8" lengthAdjust="spacingAndGlyphs">0,36</text>
<text x="702.7" y="802.1" font-size="16.02" fill="#f2f2f2" textLength="18.8" lengthAdjust="spacingAndGlyphs">0,27</text>
<text x="741.9" y="802.1" font-size="16.02" fill="#f2f2f2" textLength="18.8" lengthAdjust="spacingAndGlyphs">0,43</text>
<text x="776.1" y="802.1" font-size="16.02" fill="#f2f2f2" textLength="18.8" lengthAdjust="spacingAndGlyphs">0,25</text>
<text x="829.6" y="802.1" font-size="16.02" fill="#f2f2f2" textLength="18.8" lengthAdjust="spacingAndGlyphs">0,36</text>
<text x="886.7" y="802.1" font-size="16.02" fill="#f2f2f2" textLength="18.8" lengthAdjust="spacingAndGlyphs">0,41</text>
<text x="921.4" y="802.1" font-size="16.02" fill="#f2f2f2" textLength="18.8" lengthAdjust="spacingAndGlyphs">0,19</text>
<text x="980.5" y="802.1" font-size="16.02" fill="#f2f2f2" textLength="18.8" lengthAdjust="spacingAndGlyphs">0,31</text>
<text x="1042.9" y="802.1" font-size="16.02" fill="#f2f2f2" textLength="18.8" lengthAdjust="spacingAndGlyphs">0,22</text>
<text x="1074.8" y="802.1" font-size="16.02" fill="#f2f2f2" textLength="18.8" lengthAdjust="spacingAndGlyphs">0,49</text>
<text x="1133.5" y="802.1" font-size="16.02" fill="#f2f2f2" textLength="18.8" lengthAdjust="spacingAndGlyphs">0,44</text>
<text x="1197.2" y="802.1" font-size="16.02" fill="#f2f2f2" textLength="18.8" lengthAdjust="spacingAndGlyphs">0,14</text>
<text x="1226.9" y="802.1" font-size="16.02" fill="#f2f2f2" textLength="18.8" lengthAdjust="spacingAndGlyphs">0,49</text>
<text x="1257.1" y="802.1" font-size="16.02" fill="#f2f2f2" textLength="18.8" lengthAdjust="spacingAndGlyphs">0,32</text>
<text x="1286.9" y="802.1" font-size="16.02" fill="#f2f2f2" textLength="18.8" lengthAdjust="spacingAndGlyphs">0,47</text>
<text x="1322.4" y="802.1" font-size="16.02" fill="#f2f2f2" textLength="18.8" lengthAdjust="spacingAndGlyphs">0,25</text>
<text x="1363.6" y="802.1" font-size="16.02" fill="#f2f2f2" textLength="18.8" lengthAdjust="spacingAndGlyphs">0,27</text>
<text x="1393.8" y="802.1" font-size="16.02" fill="#f2f2f2" textLength="18.8" lengthAdjust="spacingAndGlyphs">0,33</text>
<text x="1439.1" y="802.1" font-size="16.02" fill="#f2f2f2" textLength="18.8" lengthAdjust="spacingAndGlyphs">0,60</text>
<text x="1494.2" y="802.1" font-size="16.02" fill="#f2f2f2" textLength="18.8" lengthAdjust="spacingAndGlyphs">0,06</text>
<text x="1541.9" y="802.1" font-size="16.02" fill="#f2f2f2" textLength="18.8" lengthAdjust="spacingAndGlyphs">0,33</text>
<text x="1592.1" y="802.1" font-size="16.02" fill="#f2f2f2" textLength="18.8" lengthAdjust="spacingAndGlyphs">0,15</text>
<text x="1658.6" y="802.1" font-size="16.02" fill="#f2f2f2" textLength="18.8" lengthAdjust="spacingAndGlyphs">0,51</text>
<text x="339.3" y="830.2" font-size="16.02" fill="#f2f2f2" textLength="35.4" lengthAdjust="spacingAndGlyphs">Target Y</text>
<text x="407.3" y="830.2" font-size="16.02" fill="#f2f2f2" textLength="29.6" lengthAdjust="spacingAndGlyphs">298,71</text>
<text x="442.8" y="830.2" font-size="16.02" fill="#f2f2f2" textLength="29.6" lengthAdjust="spacingAndGlyphs">236,37</text>
<text x="479.1" y="830.2" font-size="16.02" fill="#f2f2f2" textLength="29.6" lengthAdjust="spacingAndGlyphs">190,45</text>
<text x="515.4" y="830.2" font-size="16.02" fill="#f2f2f2" textLength="29.6" lengthAdjust="spacingAndGlyphs">146,67</text>
<text x="552.1" y="830.2" font-size="16.02" fill="#f2f2f2" textLength="29.6" lengthAdjust="spacingAndGlyphs">102,13</text>
<text x="588.9" y="830.2" font-size="16.02" fill="#f2f2f2" textLength="18.8" lengthAdjust="spacingAndGlyphs">0,00</text>
<text x="615.4" y="830.2" font-size="16.02" fill="#f2f2f2" textLength="24.2" lengthAdjust="spacingAndGlyphs">30,09</text>
<text x="658.6" y="830.2" font-size="16.02" fill="#f2f2f2" textLength="29.6" lengthAdjust="spacingAndGlyphs">104,23</text>
<text x="702.7" y="830.2" font-size="16.02" fill="#f2f2f2" textLength="24.2" lengthAdjust="spacingAndGlyphs">55,85</text>
<text x="741.9" y="830.2" font-size="16.02" fill="#f2f2f2" textLength="24.2" lengthAdjust="spacingAndGlyphs">38,93</text>
<text x="776.1" y="830.2" font-size="16.02" fill="#f2f2f2" textLength="24.2" lengthAdjust="spacingAndGlyphs">69,65</text>
<text x="829.6" y="830.2" font-size="16.02" fill="#f2f2f2" textLength="29.6" lengthAdjust="spacingAndGlyphs">125,08</text>
<text x="886.7" y="830.2" font-size="16.02" fill="#f2f2f2" textLength="24.2" lengthAdjust="spacingAndGlyphs">84,68</text>
<text x="921.4" y="830.2" font-size="16.02" fill="#f2f2f2" textLength="24.2" lengthAdjust="spacingAndGlyphs">35,11</text>
<text x="980.5" y="830.2" font-size="16.02" fill="#f2f2f2" textLength="24.2" lengthAdjust="spacingAndGlyphs">55,78</text>
<text x="1042.9" y="830.2" font-size="16.02" fill="#f2f2f2" textLength="24.2" lengthAdjust="spacingAndGlyphs">19,94</text>
<text x="1074.8" y="830.2" font-size="16.02" fill="#f2f2f2" textLength="29.6" lengthAdjust="spacingAndGlyphs">127,72</text>
<text x="1133.5" y="830.2" font-size="16.02" fill="#f2f2f2" textLength="29.6" lengthAdjust="spacingAndGlyphs">126,99</text>
<text x="1197.2" y="830.2" font-size="16.02" fill="#f2f2f2" textLength="24.2" lengthAdjust="spacingAndGlyphs">18,65</text>
<text x="1226.9" y="830.2" font-size="16.02" fill="#f2f2f2" textLength="24.2" lengthAdjust="spacingAndGlyphs">68,62</text>
<text x="1257.1" y="830.2" font-size="16.02" fill="#f2f2f2" textLength="24.2" lengthAdjust="spacingAndGlyphs">34,84</text>
<text x="1286.9" y="830.2" font-size="16.02" fill="#f2f2f2" textLength="29.6" lengthAdjust="spacingAndGlyphs">176,13</text>
<text x="1322.4" y="830.2" font-size="16.02" fill="#f2f2f2" textLength="24.2" lengthAdjust="spacingAndGlyphs">56,23</text>
<text x="1363.6" y="830.2" font-size="16.02" fill="#f2f2f2" textLength="24.2" lengthAdjust="spacingAndGlyphs">58,00</text>
<text x="1393.8" y="830.2" font-size="16.02" fill="#f2f2f2" textLength="24.2" lengthAdjust="spacingAndGlyphs">63,52</text>
<text x="1439.1" y="830.2" font-size="16.02" fill="#f2f2f2" textLength="29.6" lengthAdjust="spacingAndGlyphs">213,62</text>
<text x="1494.2" y="830.2" font-size="16.02" fill="#f2f2f2" textLength="24.2" lengthAdjust="spacingAndGlyphs">21,56</text>
<text x="1541.9" y="830.2" font-size="16.02" fill="#f2f2f2" textLength="29.6" lengthAdjust="spacingAndGlyphs">235,18</text>
<text x="1592.1" y="830.2" font-size="16.02" fill="#f2f2f2" textLength="24.2" lengthAdjust="spacingAndGlyphs">85,08</text>
<text x="1658.6" y="830.2" font-size="16.02" fill="#f2f2f2" textLength="29.6" lengthAdjust="spacingAndGlyphs">277,14</text>
<text x="339.3" y="858.3" font-size="16.02" fill="#f2f2f2" textLength="35.7" lengthAdjust="spacingAndGlyphs">ΔE 2000</text>
<text x="407.3" y="858.3" font-size="16.02" fill="#f2f2f2" textLength="18.8" lengthAdjust="spacingAndGlyphs">6,47</text>
<text x="442.8" y="858.3" font-size="16.02" fill="#f2f2f2" textLength="18.8" lengthAdjust="spacingAndGlyphs">5,35</text>
<text x="479.1" y="858.3" font-size="16.02" fill="#f2f2f2" textLength="18.8" lengthAdjust="spacingAndGlyphs">4,89</text>
<text x="515.4" y="858.3" font-size="16.02" fill="#f2f2f2" textLength="18.8" lengthAdjust="spacingAndGlyphs">4,52</text>
<text x="552.1" y="858.3" font-size="16.02" fill="#f2f2f2" textLength="18.8" lengthAdjust="spacingAndGlyphs">4,09</text>
<text x="588.9" y="858.3" font-size="16.02" fill="#f2f2f2" textLength="18.8" lengthAdjust="spacingAndGlyphs">1,14</text>
<text x="615.4" y="858.3" font-size="16.02" fill="#f2f2f2" textLength="18.8" lengthAdjust="spacingAndGlyphs">4,30</text>
<text x="658.6" y="858.3" font-size="16.02" fill="#f2f2f2" textLength="18.8" lengthAdjust="spacingAndGlyphs">5,58</text>
<text x="702.7" y="858.3" font-size="16.02" fill="#f2f2f2" textLength="18.8" lengthAdjust="spacingAndGlyphs">2,99</text>
<text x="741.9" y="858.3" font-size="16.02" fill="#f2f2f2" textLength="18.8" lengthAdjust="spacingAndGlyphs">2,33</text>
<text x="776.1" y="858.3" font-size="16.02" fill="#f2f2f2" textLength="18.8" lengthAdjust="spacingAndGlyphs">2,92</text>
<text x="829.6" y="858.3" font-size="16.02" fill="#f2f2f2" textLength="18.8" lengthAdjust="spacingAndGlyphs">2,57</text>
<text x="886.7" y="858.3" font-size="16.02" fill="#f2f2f2" textLength="18.8" lengthAdjust="spacingAndGlyphs">9,00</text>
<text x="921.4" y="858.3" font-size="16.02" fill="#f2f2f2" textLength="18.8" lengthAdjust="spacingAndGlyphs">2,75</text>
<text x="980.5" y="858.3" font-size="16.02" fill="#f2f2f2" textLength="18.8" lengthAdjust="spacingAndGlyphs">3,78</text>
<text x="1042.9" y="858.3" font-size="16.02" fill="#f2f2f2" textLength="18.8" lengthAdjust="spacingAndGlyphs">3,66</text>
<text x="1074.8" y="858.3" font-size="16.02" fill="#f2f2f2" textLength="18.8" lengthAdjust="spacingAndGlyphs">3,06</text>
<text x="1133.5" y="858.3" font-size="16.02" fill="#f2f2f2" textLength="18.8" lengthAdjust="spacingAndGlyphs">8,62</text>
<text x="1197.2" y="858.3" font-size="16.02" fill="#f2f2f2" textLength="18.8" lengthAdjust="spacingAndGlyphs">3,52</text>
<text x="1226.9" y="858.3" font-size="16.02" fill="#f2f2f2" textLength="18.8" lengthAdjust="spacingAndGlyphs">3,01</text>
<text x="1257.1" y="858.3" font-size="16.02" fill="#f2f2f2" textLength="18.8" lengthAdjust="spacingAndGlyphs">3,17</text>
<text x="1286.9" y="858.3" font-size="16.02" fill="#f2f2f2" textLength="18.8" lengthAdjust="spacingAndGlyphs">6,61</text>
<text x="1322.4" y="858.3" font-size="16.02" fill="#f2f2f2" textLength="18.8" lengthAdjust="spacingAndGlyphs">4,66</text>
<text x="1363.6" y="858.3" font-size="16.02" fill="#f2f2f2" textLength="18.8" lengthAdjust="spacingAndGlyphs">5,47</text>
<text x="1393.8" y="858.3" font-size="16.02" fill="#f2f2f2" textLength="18.8" lengthAdjust="spacingAndGlyphs">8,94</text>
<text x="1439.1" y="858.3" font-size="16.02" fill="#f2f2f2" textLength="18.8" lengthAdjust="spacingAndGlyphs">5,70</text>
<text x="1494.2" y="858.3" font-size="16.02" fill="#f2f2f2" textLength="18.8" lengthAdjust="spacingAndGlyphs">3,59</text>
<text x="1541.9" y="858.3" font-size="16.02" fill="#f2f2f2" textLength="18.8" lengthAdjust="spacingAndGlyphs">6,29</text>
<text x="1592.1" y="858.3" font-size="16.02" fill="#f2f2f2" textLength="18.8" lengthAdjust="spacingAndGlyphs">5,88</text>
<text x="1658.6" y="858.3" font-size="16.02" fill="#f2f2f2" textLength="18.8" lengthAdjust="spacingAndGlyphs">4,27</text>
</g>
</svg></body></html>
